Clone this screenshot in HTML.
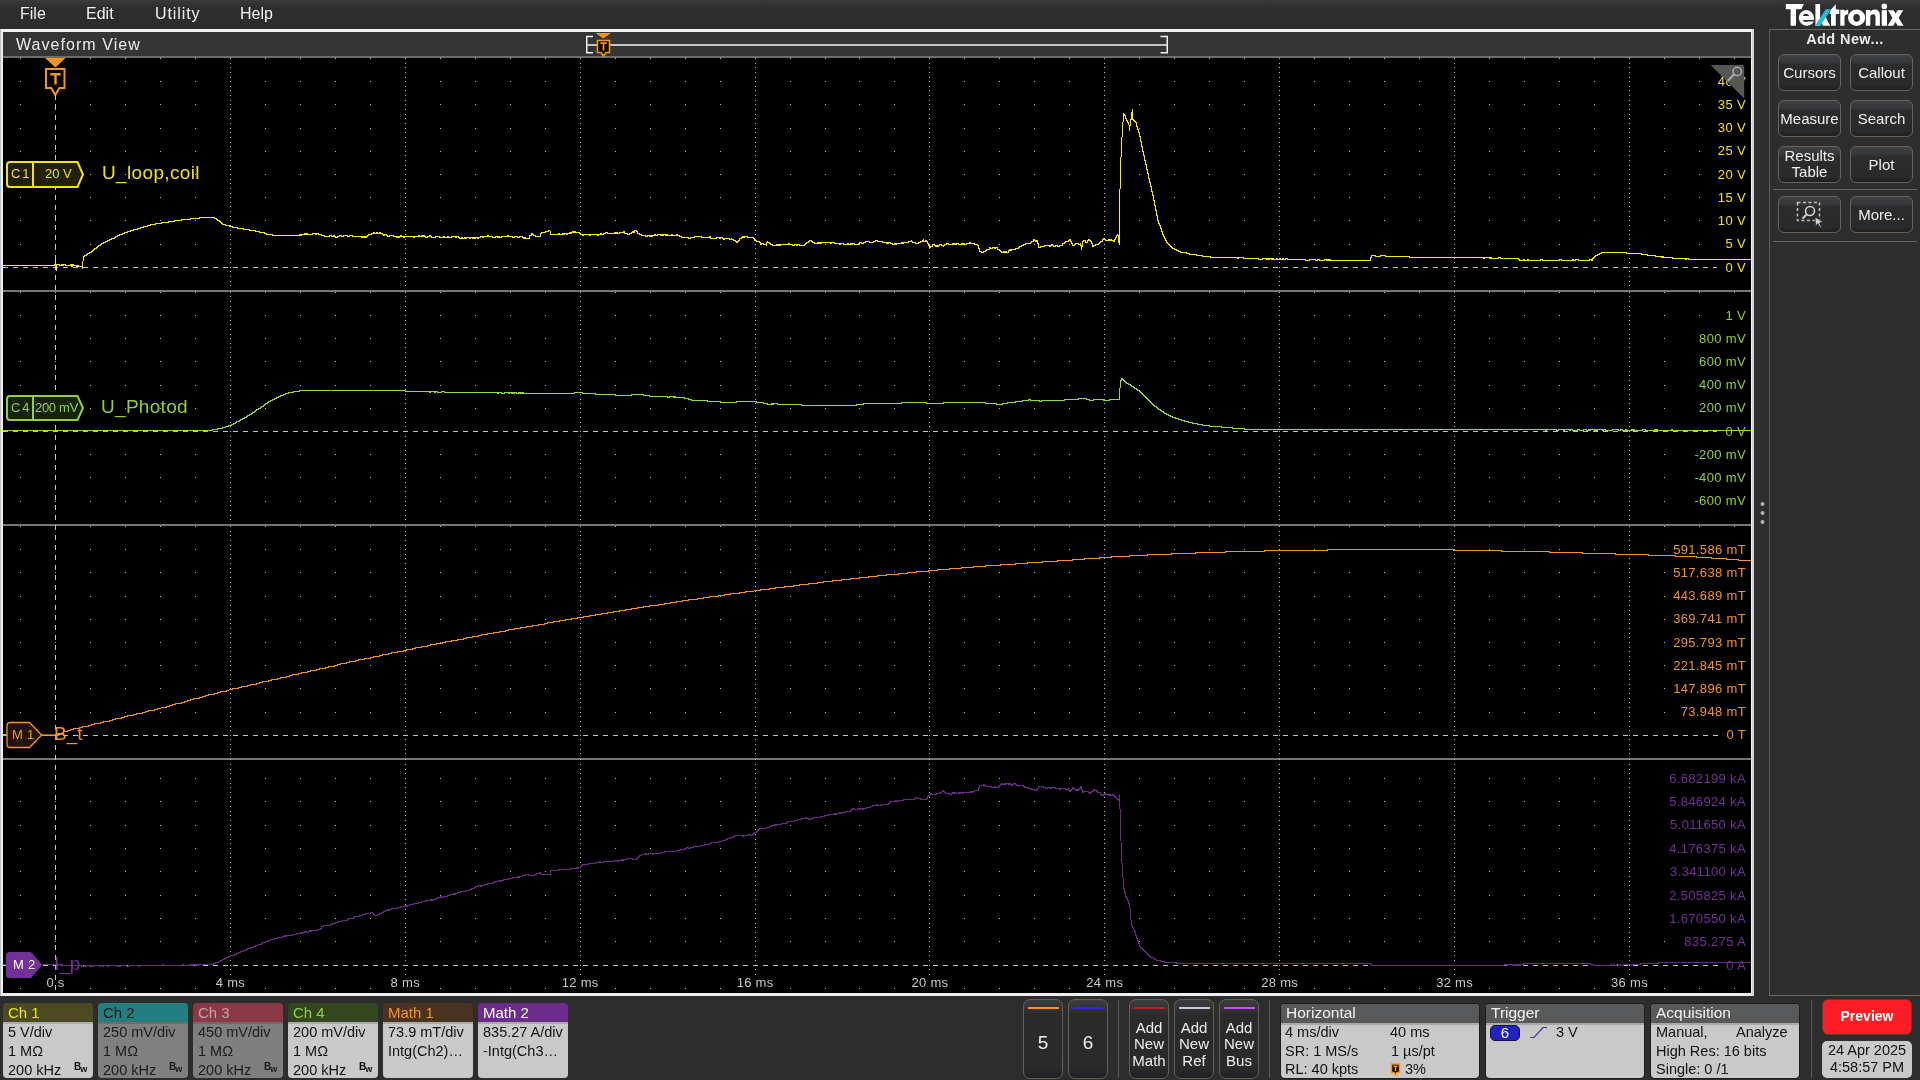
<!DOCTYPE html><html><head><meta charset="utf-8"><title>Tektronix</title><style>
*{margin:0;padding:0;box-sizing:border-box}
html,body{width:1920px;height:1080px;overflow:hidden;background:#2d2d2d;font-family:"Liberation Sans",sans-serif}body{will-change:transform}
.a{position:absolute}
#menu{position:absolute;left:0;top:0;width:1920px;height:29px;background:linear-gradient(#3b3b3b,#2d2d2d 8px,#2d2d2d)}
#menu span{position:absolute;top:5px;font-size:16px;color:#f2f2f2}
#frame{position:absolute;left:0;top:29px;width:1754px;height:967px;background:linear-gradient(90deg,#bdbec3 1px,#eeeff1 1px,#eeeff1 1752px,#d4d4d8 1752px)}
#hdr{position:absolute;left:3px;top:32px;width:1748px;height:24px;background:#353535}
#hdrl{position:absolute;left:3px;top:56px;width:1748px;height:2px;background:#6c6c6c}
#plot{position:absolute;left:3px;top:58px;width:1748px;height:935px;background:#000}
.rl{position:absolute;right:173px;font-size:13px;line-height:16px;white-space:nowrap;background:#000;padding-left:8px;padding-right:1px;letter-spacing:0.35px}
.tl{position:absolute;top:975px;width:80px;text-align:center;font-size:13px;line-height:16px;color:#c8c8c8}.tl span{background:#000;padding:0 1px;letter-spacing:0.3px}
.bdg{position:absolute;top:1003px;width:90px;height:75px;border-radius:4px;overflow:hidden}
.bh{position:absolute;left:0;top:0;width:90px;height:19px;font-size:15px;line-height:19px;padding-left:5px}
.bs{position:absolute;left:0;top:19px;width:90px;height:2px}
.bb{position:absolute;left:0;top:21px;width:90px;height:54px}
.bl{position:absolute;left:5px;font-size:14.5px;line-height:17px;white-space:nowrap}
.bw{position:absolute;left:71px;top:37px;font-size:10px;line-height:12px;font-weight:bold}
.bw sub{font-size:9px;vertical-align:-2px;font-weight:bold;margin-left:-1px}
.rbtn{position:absolute;width:63px;height:37px;border-radius:6px;border:1px solid #6a6058;background:linear-gradient(#404143,#36373a 7px,#2c2c2c 10px,#2a2a2a 85%,#202020);color:#f0f0f0;font-size:15px;text-align:center}
.vbtn{position:absolute;top:999px;width:40px;height:80px;border-radius:7px;border:1px solid #685e54;background:linear-gradient(#3c3d3f,#333436 8px,#2b2b2b 14px,#2a2a2a 88%,#202020);color:#eee;text-align:center}
.vbar{position:absolute;left:4px;top:7px;width:31px;height:2px}
.ibox{position:absolute;top:1004px;height:74px;border-radius:4px;overflow:hidden;background:#c9c9c9;box-shadow:0 0 0 1px #1c1c1c}
.ih{position:absolute;left:0;top:0;width:100%;height:19px;background:#58595b;color:#f4f4f4;font-size:15.5px;line-height:17px;padding-left:5px}
.is{position:absolute;left:0;top:19px;width:100%;height:2px;background:#a8a8a8}
.it{position:absolute;font-size:14.5px;line-height:17px;color:#111;white-space:nowrap}
</style></head><body><div id="menu"><span style="left:20px">File</span><span style="left:86px">Edit</span><span style="left:155px;letter-spacing:0.9px">Utility</span><span style="left:240px">Help</span></div><svg class="a" style="left:1780px;top:0" width="130" height="30" viewBox="1780 0 130 30"><g fill="#fff"><path d="M1785.8 4H1803.9L1801.4 9.3H1796V25.8H1790.6V9.3H1785.8Z"/><path fill-rule="evenodd" d="M1805.9 10A8 7.9 0 1 0 1813.9 21.6H1808Q1807 22 1805.9 22A3.3 3.3 0 0 1 1802.7 20.1H1813.9Q1814 19 1813.9 17.9A8 7.9 0 0 0 1805.9 10ZM1802.9 15.9A3.1 2.5 0 0 1 1809 15.9Z"/><path d="M1815.4 4H1820.1V25.8H1815.4Z"/><path d="M1822.7 25.8H1830.2L1824.8 15.5L1821 20.5Z"/><path d="M1835.8 4.3V9.4H1839.3V14.1H1835.8V25.8H1831V14.1H1829.3L1831 9.4Z"/><path d="M1840.3 25.8V9.7H1844.5V11.6Q1846 9.6 1848.2 9.5V14.3Q1844.5 14.3 1844.5 17.5V25.8Z"/><path fill-rule="evenodd" d="M1856.6 9.5A8.6 8.25 0 1 0 1856.6 26A8.6 8.25 0 1 0 1856.6 9.5ZM1856.6 13.9A3.3 3.9 0 1 1 1856.6 21.7A3.3 3.9 0 1 1 1856.6 13.9Z"/><path d="M1865.9 25.8V10H1870.3V11.6Q1872 9.6 1874.6 9.6Q1879.9 9.6 1879.9 15.3V25.8H1875.5V16.4Q1875.5 14.2 1873.4 14.2Q1870.3 14.2 1870.3 17V25.8Z"/><path d="M1881.7 10.2H1887V25.8H1881.7Z"/><circle cx="1884.3" cy="6.4" r="2.8"/><path d="M1887.8 10.2H1893.6L1895.5 13.6L1897.5 10.2H1903.3L1898.6 17.8L1903.5 25.8H1897.7L1895.5 22L1893.3 25.8H1887.6L1892.4 17.8Z"/></g><path d="M1815 25.8H1820.4L1831.2 9.3H1825.8Z" fill="#1fbfe0"/></svg><div id="frame"></div><div id="hdr"></div><div id="hdrl"></div><div id="plot"></div><div class="a" style="left:16px;top:35px;font-size:16px;line-height:20px;color:#ececec;letter-spacing:1.05px">Waveform View</div><svg class="a" style="left:580px;top:30px" width="600" height="30" viewBox="580 30 600 30"><path d="M593 36.5H586.75V52.75H593" fill="none" stroke="#f2f2f2" stroke-width="1.5"/><rect x="587" y="44" width="580" height="2" fill="#c4c4c4"/><path d="M1160.5 36.5H1167.25V52.75H1160.5" fill="none" stroke="#f2f2f2" stroke-width="1.5"/><polygon points="595.5,33 611,33 603.3,38.5" fill="#f7941d"/><path d="M597.5 40.5H609.5V52.5H606L603.5 56L601 52.5H597.5Z" fill="#000" stroke="#f7941d" stroke-width="1.6"/><path d="M600.3 43.2H606.7M603.5 43.2V50.5" stroke="#f7941d" stroke-width="1.8"/></svg><svg width="1748" height="935" viewBox="3 58 1748 935" style="position:absolute;left:3px;top:58px" shape-rendering="crispEdges"><rect x="3" y="290" width="1748" height="2" fill="#767676"/><rect x="3" y="524" width="1748" height="2" fill="#767676"/><rect x="3" y="758" width="1748" height="2" fill="#767676"/><path fill="#bdbdbd" d="M20 58h1v1h-1zM55 58h1v1h-1zM90 58h1v1h-1zM125 58h1v1h-1zM160 58h1v1h-1zM195 58h1v1h-1zM230 58h1v1h-1zM265 58h1v1h-1zM300 58h1v1h-1zM335 58h1v1h-1zM370 58h1v1h-1zM405 58h1v1h-1zM440 58h1v1h-1zM475 58h1v1h-1zM510 58h1v1h-1zM545 58h1v1h-1zM580 58h1v1h-1zM615 58h1v1h-1zM650 58h1v1h-1zM685 58h1v1h-1zM720 58h1v1h-1zM755 58h1v1h-1zM790 58h1v1h-1zM825 58h1v1h-1zM859 58h1v1h-1zM894 58h1v1h-1zM929 58h1v1h-1zM964 58h1v1h-1zM999 58h1v1h-1zM1034 58h1v1h-1zM1069 58h1v1h-1zM1104 58h1v1h-1zM1139 58h1v1h-1zM1174 58h1v1h-1zM1209 58h1v1h-1zM1244 58h1v1h-1zM1279 58h1v1h-1zM1314 58h1v1h-1zM1349 58h1v1h-1zM1384 58h1v1h-1zM1419 58h1v1h-1zM1454 58h1v1h-1zM1489 58h1v1h-1zM1524 58h1v1h-1zM1559 58h1v1h-1zM1594 58h1v1h-1zM1629 58h1v1h-1zM1664 58h1v1h-1zM1699 58h1v1h-1zM1734 58h1v1h-1zM20 81h1v1h-1zM55 81h1v1h-1zM90 81h1v1h-1zM125 81h1v1h-1zM160 81h1v1h-1zM195 81h1v1h-1zM230 81h1v1h-1zM265 81h1v1h-1zM300 81h1v1h-1zM335 81h1v1h-1zM370 81h1v1h-1zM405 81h1v1h-1zM440 81h1v1h-1zM475 81h1v1h-1zM510 81h1v1h-1zM545 81h1v1h-1zM580 81h1v1h-1zM615 81h1v1h-1zM650 81h1v1h-1zM685 81h1v1h-1zM720 81h1v1h-1zM755 81h1v1h-1zM790 81h1v1h-1zM825 81h1v1h-1zM859 81h1v1h-1zM894 81h1v1h-1zM929 81h1v1h-1zM964 81h1v1h-1zM999 81h1v1h-1zM1034 81h1v1h-1zM1069 81h1v1h-1zM1104 81h1v1h-1zM1139 81h1v1h-1zM1174 81h1v1h-1zM1209 81h1v1h-1zM1244 81h1v1h-1zM1279 81h1v1h-1zM1314 81h1v1h-1zM1349 81h1v1h-1zM1384 81h1v1h-1zM1419 81h1v1h-1zM1454 81h1v1h-1zM1489 81h1v1h-1zM1524 81h1v1h-1zM1559 81h1v1h-1zM1594 81h1v1h-1zM1629 81h1v1h-1zM1664 81h1v1h-1zM1699 81h1v1h-1zM1734 81h1v1h-1zM20 104h1v1h-1zM55 104h1v1h-1zM90 104h1v1h-1zM125 104h1v1h-1zM160 104h1v1h-1zM195 104h1v1h-1zM230 104h1v1h-1zM265 104h1v1h-1zM300 104h1v1h-1zM335 104h1v1h-1zM370 104h1v1h-1zM405 104h1v1h-1zM440 104h1v1h-1zM475 104h1v1h-1zM510 104h1v1h-1zM545 104h1v1h-1zM580 104h1v1h-1zM615 104h1v1h-1zM650 104h1v1h-1zM685 104h1v1h-1zM720 104h1v1h-1zM755 104h1v1h-1zM790 104h1v1h-1zM825 104h1v1h-1zM859 104h1v1h-1zM894 104h1v1h-1zM929 104h1v1h-1zM964 104h1v1h-1zM999 104h1v1h-1zM1034 104h1v1h-1zM1069 104h1v1h-1zM1104 104h1v1h-1zM1139 104h1v1h-1zM1174 104h1v1h-1zM1209 104h1v1h-1zM1244 104h1v1h-1zM1279 104h1v1h-1zM1314 104h1v1h-1zM1349 104h1v1h-1zM1384 104h1v1h-1zM1419 104h1v1h-1zM1454 104h1v1h-1zM1489 104h1v1h-1zM1524 104h1v1h-1zM1559 104h1v1h-1zM1594 104h1v1h-1zM1629 104h1v1h-1zM1664 104h1v1h-1zM1699 104h1v1h-1zM1734 104h1v1h-1zM20 128h1v1h-1zM55 128h1v1h-1zM90 128h1v1h-1zM125 128h1v1h-1zM160 128h1v1h-1zM195 128h1v1h-1zM230 128h1v1h-1zM265 128h1v1h-1zM300 128h1v1h-1zM335 128h1v1h-1zM370 128h1v1h-1zM405 128h1v1h-1zM440 128h1v1h-1zM475 128h1v1h-1zM510 128h1v1h-1zM545 128h1v1h-1zM580 128h1v1h-1zM615 128h1v1h-1zM650 128h1v1h-1zM685 128h1v1h-1zM720 128h1v1h-1zM755 128h1v1h-1zM790 128h1v1h-1zM825 128h1v1h-1zM859 128h1v1h-1zM894 128h1v1h-1zM929 128h1v1h-1zM964 128h1v1h-1zM999 128h1v1h-1zM1034 128h1v1h-1zM1069 128h1v1h-1zM1104 128h1v1h-1zM1139 128h1v1h-1zM1174 128h1v1h-1zM1209 128h1v1h-1zM1244 128h1v1h-1zM1279 128h1v1h-1zM1314 128h1v1h-1zM1349 128h1v1h-1zM1384 128h1v1h-1zM1419 128h1v1h-1zM1454 128h1v1h-1zM1489 128h1v1h-1zM1524 128h1v1h-1zM1559 128h1v1h-1zM1594 128h1v1h-1zM1629 128h1v1h-1zM1664 128h1v1h-1zM1699 128h1v1h-1zM1734 128h1v1h-1zM20 151h1v1h-1zM55 151h1v1h-1zM90 151h1v1h-1zM125 151h1v1h-1zM160 151h1v1h-1zM195 151h1v1h-1zM230 151h1v1h-1zM265 151h1v1h-1zM300 151h1v1h-1zM335 151h1v1h-1zM370 151h1v1h-1zM405 151h1v1h-1zM440 151h1v1h-1zM475 151h1v1h-1zM510 151h1v1h-1zM545 151h1v1h-1zM580 151h1v1h-1zM615 151h1v1h-1zM650 151h1v1h-1zM685 151h1v1h-1zM720 151h1v1h-1zM755 151h1v1h-1zM790 151h1v1h-1zM825 151h1v1h-1zM859 151h1v1h-1zM894 151h1v1h-1zM929 151h1v1h-1zM964 151h1v1h-1zM999 151h1v1h-1zM1034 151h1v1h-1zM1069 151h1v1h-1zM1104 151h1v1h-1zM1139 151h1v1h-1zM1174 151h1v1h-1zM1209 151h1v1h-1zM1244 151h1v1h-1zM1279 151h1v1h-1zM1314 151h1v1h-1zM1349 151h1v1h-1zM1384 151h1v1h-1zM1419 151h1v1h-1zM1454 151h1v1h-1zM1489 151h1v1h-1zM1524 151h1v1h-1zM1559 151h1v1h-1zM1594 151h1v1h-1zM1629 151h1v1h-1zM1664 151h1v1h-1zM1699 151h1v1h-1zM1734 151h1v1h-1zM20 174h1v1h-1zM55 174h1v1h-1zM90 174h1v1h-1zM125 174h1v1h-1zM160 174h1v1h-1zM195 174h1v1h-1zM230 174h1v1h-1zM265 174h1v1h-1zM300 174h1v1h-1zM335 174h1v1h-1zM370 174h1v1h-1zM405 174h1v1h-1zM440 174h1v1h-1zM475 174h1v1h-1zM510 174h1v1h-1zM545 174h1v1h-1zM580 174h1v1h-1zM615 174h1v1h-1zM650 174h1v1h-1zM685 174h1v1h-1zM720 174h1v1h-1zM755 174h1v1h-1zM790 174h1v1h-1zM825 174h1v1h-1zM859 174h1v1h-1zM894 174h1v1h-1zM929 174h1v1h-1zM964 174h1v1h-1zM999 174h1v1h-1zM1034 174h1v1h-1zM1069 174h1v1h-1zM1104 174h1v1h-1zM1139 174h1v1h-1zM1174 174h1v1h-1zM1209 174h1v1h-1zM1244 174h1v1h-1zM1279 174h1v1h-1zM1314 174h1v1h-1zM1349 174h1v1h-1zM1384 174h1v1h-1zM1419 174h1v1h-1zM1454 174h1v1h-1zM1489 174h1v1h-1zM1524 174h1v1h-1zM1559 174h1v1h-1zM1594 174h1v1h-1zM1629 174h1v1h-1zM1664 174h1v1h-1zM1699 174h1v1h-1zM1734 174h1v1h-1zM20 197h1v1h-1zM55 197h1v1h-1zM90 197h1v1h-1zM125 197h1v1h-1zM160 197h1v1h-1zM195 197h1v1h-1zM230 197h1v1h-1zM265 197h1v1h-1zM300 197h1v1h-1zM335 197h1v1h-1zM370 197h1v1h-1zM405 197h1v1h-1zM440 197h1v1h-1zM475 197h1v1h-1zM510 197h1v1h-1zM545 197h1v1h-1zM580 197h1v1h-1zM615 197h1v1h-1zM650 197h1v1h-1zM685 197h1v1h-1zM720 197h1v1h-1zM755 197h1v1h-1zM790 197h1v1h-1zM825 197h1v1h-1zM859 197h1v1h-1zM894 197h1v1h-1zM929 197h1v1h-1zM964 197h1v1h-1zM999 197h1v1h-1zM1034 197h1v1h-1zM1069 197h1v1h-1zM1104 197h1v1h-1zM1139 197h1v1h-1zM1174 197h1v1h-1zM1209 197h1v1h-1zM1244 197h1v1h-1zM1279 197h1v1h-1zM1314 197h1v1h-1zM1349 197h1v1h-1zM1384 197h1v1h-1zM1419 197h1v1h-1zM1454 197h1v1h-1zM1489 197h1v1h-1zM1524 197h1v1h-1zM1559 197h1v1h-1zM1594 197h1v1h-1zM1629 197h1v1h-1zM1664 197h1v1h-1zM1699 197h1v1h-1zM1734 197h1v1h-1zM20 220h1v1h-1zM55 220h1v1h-1zM90 220h1v1h-1zM125 220h1v1h-1zM160 220h1v1h-1zM195 220h1v1h-1zM230 220h1v1h-1zM265 220h1v1h-1zM300 220h1v1h-1zM335 220h1v1h-1zM370 220h1v1h-1zM405 220h1v1h-1zM440 220h1v1h-1zM475 220h1v1h-1zM510 220h1v1h-1zM545 220h1v1h-1zM580 220h1v1h-1zM615 220h1v1h-1zM650 220h1v1h-1zM685 220h1v1h-1zM720 220h1v1h-1zM755 220h1v1h-1zM790 220h1v1h-1zM825 220h1v1h-1zM859 220h1v1h-1zM894 220h1v1h-1zM929 220h1v1h-1zM964 220h1v1h-1zM999 220h1v1h-1zM1034 220h1v1h-1zM1069 220h1v1h-1zM1104 220h1v1h-1zM1139 220h1v1h-1zM1174 220h1v1h-1zM1209 220h1v1h-1zM1244 220h1v1h-1zM1279 220h1v1h-1zM1314 220h1v1h-1zM1349 220h1v1h-1zM1384 220h1v1h-1zM1419 220h1v1h-1zM1454 220h1v1h-1zM1489 220h1v1h-1zM1524 220h1v1h-1zM1559 220h1v1h-1zM1594 220h1v1h-1zM1629 220h1v1h-1zM1664 220h1v1h-1zM1699 220h1v1h-1zM1734 220h1v1h-1zM20 244h1v1h-1zM55 244h1v1h-1zM90 244h1v1h-1zM125 244h1v1h-1zM160 244h1v1h-1zM195 244h1v1h-1zM230 244h1v1h-1zM265 244h1v1h-1zM300 244h1v1h-1zM335 244h1v1h-1zM370 244h1v1h-1zM405 244h1v1h-1zM440 244h1v1h-1zM475 244h1v1h-1zM510 244h1v1h-1zM545 244h1v1h-1zM580 244h1v1h-1zM615 244h1v1h-1zM650 244h1v1h-1zM685 244h1v1h-1zM720 244h1v1h-1zM755 244h1v1h-1zM790 244h1v1h-1zM825 244h1v1h-1zM859 244h1v1h-1zM894 244h1v1h-1zM929 244h1v1h-1zM964 244h1v1h-1zM999 244h1v1h-1zM1034 244h1v1h-1zM1069 244h1v1h-1zM1104 244h1v1h-1zM1139 244h1v1h-1zM1174 244h1v1h-1zM1209 244h1v1h-1zM1244 244h1v1h-1zM1279 244h1v1h-1zM1314 244h1v1h-1zM1349 244h1v1h-1zM1384 244h1v1h-1zM1419 244h1v1h-1zM1454 244h1v1h-1zM1489 244h1v1h-1zM1524 244h1v1h-1zM1559 244h1v1h-1zM1594 244h1v1h-1zM1629 244h1v1h-1zM1664 244h1v1h-1zM1699 244h1v1h-1zM1734 244h1v1h-1zM20 292h1v1h-1zM55 292h1v1h-1zM90 292h1v1h-1zM125 292h1v1h-1zM160 292h1v1h-1zM195 292h1v1h-1zM230 292h1v1h-1zM265 292h1v1h-1zM300 292h1v1h-1zM335 292h1v1h-1zM370 292h1v1h-1zM405 292h1v1h-1zM440 292h1v1h-1zM475 292h1v1h-1zM510 292h1v1h-1zM545 292h1v1h-1zM580 292h1v1h-1zM615 292h1v1h-1zM650 292h1v1h-1zM685 292h1v1h-1zM720 292h1v1h-1zM755 292h1v1h-1zM790 292h1v1h-1zM825 292h1v1h-1zM859 292h1v1h-1zM894 292h1v1h-1zM929 292h1v1h-1zM964 292h1v1h-1zM999 292h1v1h-1zM1034 292h1v1h-1zM1069 292h1v1h-1zM1104 292h1v1h-1zM1139 292h1v1h-1zM1174 292h1v1h-1zM1209 292h1v1h-1zM1244 292h1v1h-1zM1279 292h1v1h-1zM1314 292h1v1h-1zM1349 292h1v1h-1zM1384 292h1v1h-1zM1419 292h1v1h-1zM1454 292h1v1h-1zM1489 292h1v1h-1zM1524 292h1v1h-1zM1559 292h1v1h-1zM1594 292h1v1h-1zM1629 292h1v1h-1zM1664 292h1v1h-1zM1699 292h1v1h-1zM1734 292h1v1h-1zM20 315h1v1h-1zM55 315h1v1h-1zM90 315h1v1h-1zM125 315h1v1h-1zM160 315h1v1h-1zM195 315h1v1h-1zM230 315h1v1h-1zM265 315h1v1h-1zM300 315h1v1h-1zM335 315h1v1h-1zM370 315h1v1h-1zM405 315h1v1h-1zM440 315h1v1h-1zM475 315h1v1h-1zM510 315h1v1h-1zM545 315h1v1h-1zM580 315h1v1h-1zM615 315h1v1h-1zM650 315h1v1h-1zM685 315h1v1h-1zM720 315h1v1h-1zM755 315h1v1h-1zM790 315h1v1h-1zM825 315h1v1h-1zM859 315h1v1h-1zM894 315h1v1h-1zM929 315h1v1h-1zM964 315h1v1h-1zM999 315h1v1h-1zM1034 315h1v1h-1zM1069 315h1v1h-1zM1104 315h1v1h-1zM1139 315h1v1h-1zM1174 315h1v1h-1zM1209 315h1v1h-1zM1244 315h1v1h-1zM1279 315h1v1h-1zM1314 315h1v1h-1zM1349 315h1v1h-1zM1384 315h1v1h-1zM1419 315h1v1h-1zM1454 315h1v1h-1zM1489 315h1v1h-1zM1524 315h1v1h-1zM1559 315h1v1h-1zM1594 315h1v1h-1zM1629 315h1v1h-1zM1664 315h1v1h-1zM1699 315h1v1h-1zM1734 315h1v1h-1zM20 338h1v1h-1zM55 338h1v1h-1zM90 338h1v1h-1zM125 338h1v1h-1zM160 338h1v1h-1zM195 338h1v1h-1zM230 338h1v1h-1zM265 338h1v1h-1zM300 338h1v1h-1zM335 338h1v1h-1zM370 338h1v1h-1zM405 338h1v1h-1zM440 338h1v1h-1zM475 338h1v1h-1zM510 338h1v1h-1zM545 338h1v1h-1zM580 338h1v1h-1zM615 338h1v1h-1zM650 338h1v1h-1zM685 338h1v1h-1zM720 338h1v1h-1zM755 338h1v1h-1zM790 338h1v1h-1zM825 338h1v1h-1zM859 338h1v1h-1zM894 338h1v1h-1zM929 338h1v1h-1zM964 338h1v1h-1zM999 338h1v1h-1zM1034 338h1v1h-1zM1069 338h1v1h-1zM1104 338h1v1h-1zM1139 338h1v1h-1zM1174 338h1v1h-1zM1209 338h1v1h-1zM1244 338h1v1h-1zM1279 338h1v1h-1zM1314 338h1v1h-1zM1349 338h1v1h-1zM1384 338h1v1h-1zM1419 338h1v1h-1zM1454 338h1v1h-1zM1489 338h1v1h-1zM1524 338h1v1h-1zM1559 338h1v1h-1zM1594 338h1v1h-1zM1629 338h1v1h-1zM1664 338h1v1h-1zM1699 338h1v1h-1zM1734 338h1v1h-1zM20 361h1v1h-1zM55 361h1v1h-1zM90 361h1v1h-1zM125 361h1v1h-1zM160 361h1v1h-1zM195 361h1v1h-1zM230 361h1v1h-1zM265 361h1v1h-1zM300 361h1v1h-1zM335 361h1v1h-1zM370 361h1v1h-1zM405 361h1v1h-1zM440 361h1v1h-1zM475 361h1v1h-1zM510 361h1v1h-1zM545 361h1v1h-1zM580 361h1v1h-1zM615 361h1v1h-1zM650 361h1v1h-1zM685 361h1v1h-1zM720 361h1v1h-1zM755 361h1v1h-1zM790 361h1v1h-1zM825 361h1v1h-1zM859 361h1v1h-1zM894 361h1v1h-1zM929 361h1v1h-1zM964 361h1v1h-1zM999 361h1v1h-1zM1034 361h1v1h-1zM1069 361h1v1h-1zM1104 361h1v1h-1zM1139 361h1v1h-1zM1174 361h1v1h-1zM1209 361h1v1h-1zM1244 361h1v1h-1zM1279 361h1v1h-1zM1314 361h1v1h-1zM1349 361h1v1h-1zM1384 361h1v1h-1zM1419 361h1v1h-1zM1454 361h1v1h-1zM1489 361h1v1h-1zM1524 361h1v1h-1zM1559 361h1v1h-1zM1594 361h1v1h-1zM1629 361h1v1h-1zM1664 361h1v1h-1zM1699 361h1v1h-1zM1734 361h1v1h-1zM20 385h1v1h-1zM55 385h1v1h-1zM90 385h1v1h-1zM125 385h1v1h-1zM160 385h1v1h-1zM195 385h1v1h-1zM230 385h1v1h-1zM265 385h1v1h-1zM300 385h1v1h-1zM335 385h1v1h-1zM370 385h1v1h-1zM405 385h1v1h-1zM440 385h1v1h-1zM475 385h1v1h-1zM510 385h1v1h-1zM545 385h1v1h-1zM580 385h1v1h-1zM615 385h1v1h-1zM650 385h1v1h-1zM685 385h1v1h-1zM720 385h1v1h-1zM755 385h1v1h-1zM790 385h1v1h-1zM825 385h1v1h-1zM859 385h1v1h-1zM894 385h1v1h-1zM929 385h1v1h-1zM964 385h1v1h-1zM999 385h1v1h-1zM1034 385h1v1h-1zM1069 385h1v1h-1zM1104 385h1v1h-1zM1139 385h1v1h-1zM1174 385h1v1h-1zM1209 385h1v1h-1zM1244 385h1v1h-1zM1279 385h1v1h-1zM1314 385h1v1h-1zM1349 385h1v1h-1zM1384 385h1v1h-1zM1419 385h1v1h-1zM1454 385h1v1h-1zM1489 385h1v1h-1zM1524 385h1v1h-1zM1559 385h1v1h-1zM1594 385h1v1h-1zM1629 385h1v1h-1zM1664 385h1v1h-1zM1699 385h1v1h-1zM1734 385h1v1h-1zM20 408h1v1h-1zM55 408h1v1h-1zM90 408h1v1h-1zM125 408h1v1h-1zM160 408h1v1h-1zM195 408h1v1h-1zM230 408h1v1h-1zM265 408h1v1h-1zM300 408h1v1h-1zM335 408h1v1h-1zM370 408h1v1h-1zM405 408h1v1h-1zM440 408h1v1h-1zM475 408h1v1h-1zM510 408h1v1h-1zM545 408h1v1h-1zM580 408h1v1h-1zM615 408h1v1h-1zM650 408h1v1h-1zM685 408h1v1h-1zM720 408h1v1h-1zM755 408h1v1h-1zM790 408h1v1h-1zM825 408h1v1h-1zM859 408h1v1h-1zM894 408h1v1h-1zM929 408h1v1h-1zM964 408h1v1h-1zM999 408h1v1h-1zM1034 408h1v1h-1zM1069 408h1v1h-1zM1104 408h1v1h-1zM1139 408h1v1h-1zM1174 408h1v1h-1zM1209 408h1v1h-1zM1244 408h1v1h-1zM1279 408h1v1h-1zM1314 408h1v1h-1zM1349 408h1v1h-1zM1384 408h1v1h-1zM1419 408h1v1h-1zM1454 408h1v1h-1zM1489 408h1v1h-1zM1524 408h1v1h-1zM1559 408h1v1h-1zM1594 408h1v1h-1zM1629 408h1v1h-1zM1664 408h1v1h-1zM1699 408h1v1h-1zM1734 408h1v1h-1zM20 454h1v1h-1zM55 454h1v1h-1zM90 454h1v1h-1zM125 454h1v1h-1zM160 454h1v1h-1zM195 454h1v1h-1zM230 454h1v1h-1zM265 454h1v1h-1zM300 454h1v1h-1zM335 454h1v1h-1zM370 454h1v1h-1zM405 454h1v1h-1zM440 454h1v1h-1zM475 454h1v1h-1zM510 454h1v1h-1zM545 454h1v1h-1zM580 454h1v1h-1zM615 454h1v1h-1zM650 454h1v1h-1zM685 454h1v1h-1zM720 454h1v1h-1zM755 454h1v1h-1zM790 454h1v1h-1zM825 454h1v1h-1zM859 454h1v1h-1zM894 454h1v1h-1zM929 454h1v1h-1zM964 454h1v1h-1zM999 454h1v1h-1zM1034 454h1v1h-1zM1069 454h1v1h-1zM1104 454h1v1h-1zM1139 454h1v1h-1zM1174 454h1v1h-1zM1209 454h1v1h-1zM1244 454h1v1h-1zM1279 454h1v1h-1zM1314 454h1v1h-1zM1349 454h1v1h-1zM1384 454h1v1h-1zM1419 454h1v1h-1zM1454 454h1v1h-1zM1489 454h1v1h-1zM1524 454h1v1h-1zM1559 454h1v1h-1zM1594 454h1v1h-1zM1629 454h1v1h-1zM1664 454h1v1h-1zM1699 454h1v1h-1zM1734 454h1v1h-1zM20 477h1v1h-1zM55 477h1v1h-1zM90 477h1v1h-1zM125 477h1v1h-1zM160 477h1v1h-1zM195 477h1v1h-1zM230 477h1v1h-1zM265 477h1v1h-1zM300 477h1v1h-1zM335 477h1v1h-1zM370 477h1v1h-1zM405 477h1v1h-1zM440 477h1v1h-1zM475 477h1v1h-1zM510 477h1v1h-1zM545 477h1v1h-1zM580 477h1v1h-1zM615 477h1v1h-1zM650 477h1v1h-1zM685 477h1v1h-1zM720 477h1v1h-1zM755 477h1v1h-1zM790 477h1v1h-1zM825 477h1v1h-1zM859 477h1v1h-1zM894 477h1v1h-1zM929 477h1v1h-1zM964 477h1v1h-1zM999 477h1v1h-1zM1034 477h1v1h-1zM1069 477h1v1h-1zM1104 477h1v1h-1zM1139 477h1v1h-1zM1174 477h1v1h-1zM1209 477h1v1h-1zM1244 477h1v1h-1zM1279 477h1v1h-1zM1314 477h1v1h-1zM1349 477h1v1h-1zM1384 477h1v1h-1zM1419 477h1v1h-1zM1454 477h1v1h-1zM1489 477h1v1h-1zM1524 477h1v1h-1zM1559 477h1v1h-1zM1594 477h1v1h-1zM1629 477h1v1h-1zM1664 477h1v1h-1zM1699 477h1v1h-1zM1734 477h1v1h-1zM20 501h1v1h-1zM55 501h1v1h-1zM90 501h1v1h-1zM125 501h1v1h-1zM160 501h1v1h-1zM195 501h1v1h-1zM230 501h1v1h-1zM265 501h1v1h-1zM300 501h1v1h-1zM335 501h1v1h-1zM370 501h1v1h-1zM405 501h1v1h-1zM440 501h1v1h-1zM475 501h1v1h-1zM510 501h1v1h-1zM545 501h1v1h-1zM580 501h1v1h-1zM615 501h1v1h-1zM650 501h1v1h-1zM685 501h1v1h-1zM720 501h1v1h-1zM755 501h1v1h-1zM790 501h1v1h-1zM825 501h1v1h-1zM859 501h1v1h-1zM894 501h1v1h-1zM929 501h1v1h-1zM964 501h1v1h-1zM999 501h1v1h-1zM1034 501h1v1h-1zM1069 501h1v1h-1zM1104 501h1v1h-1zM1139 501h1v1h-1zM1174 501h1v1h-1zM1209 501h1v1h-1zM1244 501h1v1h-1zM1279 501h1v1h-1zM1314 501h1v1h-1zM1349 501h1v1h-1zM1384 501h1v1h-1zM1419 501h1v1h-1zM1454 501h1v1h-1zM1489 501h1v1h-1zM1524 501h1v1h-1zM1559 501h1v1h-1zM1594 501h1v1h-1zM1629 501h1v1h-1zM1664 501h1v1h-1zM1699 501h1v1h-1zM1734 501h1v1h-1zM20 526h1v1h-1zM55 526h1v1h-1zM90 526h1v1h-1zM125 526h1v1h-1zM160 526h1v1h-1zM195 526h1v1h-1zM230 526h1v1h-1zM265 526h1v1h-1zM300 526h1v1h-1zM335 526h1v1h-1zM370 526h1v1h-1zM405 526h1v1h-1zM440 526h1v1h-1zM475 526h1v1h-1zM510 526h1v1h-1zM545 526h1v1h-1zM580 526h1v1h-1zM615 526h1v1h-1zM650 526h1v1h-1zM685 526h1v1h-1zM720 526h1v1h-1zM755 526h1v1h-1zM790 526h1v1h-1zM825 526h1v1h-1zM859 526h1v1h-1zM894 526h1v1h-1zM929 526h1v1h-1zM964 526h1v1h-1zM999 526h1v1h-1zM1034 526h1v1h-1zM1069 526h1v1h-1zM1104 526h1v1h-1zM1139 526h1v1h-1zM1174 526h1v1h-1zM1209 526h1v1h-1zM1244 526h1v1h-1zM1279 526h1v1h-1zM1314 526h1v1h-1zM1349 526h1v1h-1zM1384 526h1v1h-1zM1419 526h1v1h-1zM1454 526h1v1h-1zM1489 526h1v1h-1zM1524 526h1v1h-1zM1559 526h1v1h-1zM1594 526h1v1h-1zM1629 526h1v1h-1zM1664 526h1v1h-1zM1699 526h1v1h-1zM1734 526h1v1h-1zM20 549h1v1h-1zM55 549h1v1h-1zM90 549h1v1h-1zM125 549h1v1h-1zM160 549h1v1h-1zM195 549h1v1h-1zM230 549h1v1h-1zM265 549h1v1h-1zM300 549h1v1h-1zM335 549h1v1h-1zM370 549h1v1h-1zM405 549h1v1h-1zM440 549h1v1h-1zM475 549h1v1h-1zM510 549h1v1h-1zM545 549h1v1h-1zM580 549h1v1h-1zM615 549h1v1h-1zM650 549h1v1h-1zM685 549h1v1h-1zM720 549h1v1h-1zM755 549h1v1h-1zM790 549h1v1h-1zM825 549h1v1h-1zM859 549h1v1h-1zM894 549h1v1h-1zM929 549h1v1h-1zM964 549h1v1h-1zM999 549h1v1h-1zM1034 549h1v1h-1zM1069 549h1v1h-1zM1104 549h1v1h-1zM1139 549h1v1h-1zM1174 549h1v1h-1zM1209 549h1v1h-1zM1244 549h1v1h-1zM1279 549h1v1h-1zM1314 549h1v1h-1zM1349 549h1v1h-1zM1384 549h1v1h-1zM1419 549h1v1h-1zM1454 549h1v1h-1zM1489 549h1v1h-1zM1524 549h1v1h-1zM1559 549h1v1h-1zM1594 549h1v1h-1zM1629 549h1v1h-1zM1664 549h1v1h-1zM1699 549h1v1h-1zM1734 549h1v1h-1zM20 572h1v1h-1zM55 572h1v1h-1zM90 572h1v1h-1zM125 572h1v1h-1zM160 572h1v1h-1zM195 572h1v1h-1zM230 572h1v1h-1zM265 572h1v1h-1zM300 572h1v1h-1zM335 572h1v1h-1zM370 572h1v1h-1zM405 572h1v1h-1zM440 572h1v1h-1zM475 572h1v1h-1zM510 572h1v1h-1zM545 572h1v1h-1zM580 572h1v1h-1zM615 572h1v1h-1zM650 572h1v1h-1zM685 572h1v1h-1zM720 572h1v1h-1zM755 572h1v1h-1zM790 572h1v1h-1zM825 572h1v1h-1zM859 572h1v1h-1zM894 572h1v1h-1zM929 572h1v1h-1zM964 572h1v1h-1zM999 572h1v1h-1zM1034 572h1v1h-1zM1069 572h1v1h-1zM1104 572h1v1h-1zM1139 572h1v1h-1zM1174 572h1v1h-1zM1209 572h1v1h-1zM1244 572h1v1h-1zM1279 572h1v1h-1zM1314 572h1v1h-1zM1349 572h1v1h-1zM1384 572h1v1h-1zM1419 572h1v1h-1zM1454 572h1v1h-1zM1489 572h1v1h-1zM1524 572h1v1h-1zM1559 572h1v1h-1zM1594 572h1v1h-1zM1629 572h1v1h-1zM1664 572h1v1h-1zM1699 572h1v1h-1zM1734 572h1v1h-1zM20 596h1v1h-1zM55 596h1v1h-1zM90 596h1v1h-1zM125 596h1v1h-1zM160 596h1v1h-1zM195 596h1v1h-1zM230 596h1v1h-1zM265 596h1v1h-1zM300 596h1v1h-1zM335 596h1v1h-1zM370 596h1v1h-1zM405 596h1v1h-1zM440 596h1v1h-1zM475 596h1v1h-1zM510 596h1v1h-1zM545 596h1v1h-1zM580 596h1v1h-1zM615 596h1v1h-1zM650 596h1v1h-1zM685 596h1v1h-1zM720 596h1v1h-1zM755 596h1v1h-1zM790 596h1v1h-1zM825 596h1v1h-1zM859 596h1v1h-1zM894 596h1v1h-1zM929 596h1v1h-1zM964 596h1v1h-1zM999 596h1v1h-1zM1034 596h1v1h-1zM1069 596h1v1h-1zM1104 596h1v1h-1zM1139 596h1v1h-1zM1174 596h1v1h-1zM1209 596h1v1h-1zM1244 596h1v1h-1zM1279 596h1v1h-1zM1314 596h1v1h-1zM1349 596h1v1h-1zM1384 596h1v1h-1zM1419 596h1v1h-1zM1454 596h1v1h-1zM1489 596h1v1h-1zM1524 596h1v1h-1zM1559 596h1v1h-1zM1594 596h1v1h-1zM1629 596h1v1h-1zM1664 596h1v1h-1zM1699 596h1v1h-1zM1734 596h1v1h-1zM20 619h1v1h-1zM55 619h1v1h-1zM90 619h1v1h-1zM125 619h1v1h-1zM160 619h1v1h-1zM195 619h1v1h-1zM230 619h1v1h-1zM265 619h1v1h-1zM300 619h1v1h-1zM335 619h1v1h-1zM370 619h1v1h-1zM405 619h1v1h-1zM440 619h1v1h-1zM475 619h1v1h-1zM510 619h1v1h-1zM545 619h1v1h-1zM580 619h1v1h-1zM615 619h1v1h-1zM650 619h1v1h-1zM685 619h1v1h-1zM720 619h1v1h-1zM755 619h1v1h-1zM790 619h1v1h-1zM825 619h1v1h-1zM859 619h1v1h-1zM894 619h1v1h-1zM929 619h1v1h-1zM964 619h1v1h-1zM999 619h1v1h-1zM1034 619h1v1h-1zM1069 619h1v1h-1zM1104 619h1v1h-1zM1139 619h1v1h-1zM1174 619h1v1h-1zM1209 619h1v1h-1zM1244 619h1v1h-1zM1279 619h1v1h-1zM1314 619h1v1h-1zM1349 619h1v1h-1zM1384 619h1v1h-1zM1419 619h1v1h-1zM1454 619h1v1h-1zM1489 619h1v1h-1zM1524 619h1v1h-1zM1559 619h1v1h-1zM1594 619h1v1h-1zM1629 619h1v1h-1zM1664 619h1v1h-1zM1699 619h1v1h-1zM1734 619h1v1h-1zM20 642h1v1h-1zM55 642h1v1h-1zM90 642h1v1h-1zM125 642h1v1h-1zM160 642h1v1h-1zM195 642h1v1h-1zM230 642h1v1h-1zM265 642h1v1h-1zM300 642h1v1h-1zM335 642h1v1h-1zM370 642h1v1h-1zM405 642h1v1h-1zM440 642h1v1h-1zM475 642h1v1h-1zM510 642h1v1h-1zM545 642h1v1h-1zM580 642h1v1h-1zM615 642h1v1h-1zM650 642h1v1h-1zM685 642h1v1h-1zM720 642h1v1h-1zM755 642h1v1h-1zM790 642h1v1h-1zM825 642h1v1h-1zM859 642h1v1h-1zM894 642h1v1h-1zM929 642h1v1h-1zM964 642h1v1h-1zM999 642h1v1h-1zM1034 642h1v1h-1zM1069 642h1v1h-1zM1104 642h1v1h-1zM1139 642h1v1h-1zM1174 642h1v1h-1zM1209 642h1v1h-1zM1244 642h1v1h-1zM1279 642h1v1h-1zM1314 642h1v1h-1zM1349 642h1v1h-1zM1384 642h1v1h-1zM1419 642h1v1h-1zM1454 642h1v1h-1zM1489 642h1v1h-1zM1524 642h1v1h-1zM1559 642h1v1h-1zM1594 642h1v1h-1zM1629 642h1v1h-1zM1664 642h1v1h-1zM1699 642h1v1h-1zM1734 642h1v1h-1zM20 665h1v1h-1zM55 665h1v1h-1zM90 665h1v1h-1zM125 665h1v1h-1zM160 665h1v1h-1zM195 665h1v1h-1zM230 665h1v1h-1zM265 665h1v1h-1zM300 665h1v1h-1zM335 665h1v1h-1zM370 665h1v1h-1zM405 665h1v1h-1zM440 665h1v1h-1zM475 665h1v1h-1zM510 665h1v1h-1zM545 665h1v1h-1zM580 665h1v1h-1zM615 665h1v1h-1zM650 665h1v1h-1zM685 665h1v1h-1zM720 665h1v1h-1zM755 665h1v1h-1zM790 665h1v1h-1zM825 665h1v1h-1zM859 665h1v1h-1zM894 665h1v1h-1zM929 665h1v1h-1zM964 665h1v1h-1zM999 665h1v1h-1zM1034 665h1v1h-1zM1069 665h1v1h-1zM1104 665h1v1h-1zM1139 665h1v1h-1zM1174 665h1v1h-1zM1209 665h1v1h-1zM1244 665h1v1h-1zM1279 665h1v1h-1zM1314 665h1v1h-1zM1349 665h1v1h-1zM1384 665h1v1h-1zM1419 665h1v1h-1zM1454 665h1v1h-1zM1489 665h1v1h-1zM1524 665h1v1h-1zM1559 665h1v1h-1zM1594 665h1v1h-1zM1629 665h1v1h-1zM1664 665h1v1h-1zM1699 665h1v1h-1zM1734 665h1v1h-1zM20 688h1v1h-1zM55 688h1v1h-1zM90 688h1v1h-1zM125 688h1v1h-1zM160 688h1v1h-1zM195 688h1v1h-1zM230 688h1v1h-1zM265 688h1v1h-1zM300 688h1v1h-1zM335 688h1v1h-1zM370 688h1v1h-1zM405 688h1v1h-1zM440 688h1v1h-1zM475 688h1v1h-1zM510 688h1v1h-1zM545 688h1v1h-1zM580 688h1v1h-1zM615 688h1v1h-1zM650 688h1v1h-1zM685 688h1v1h-1zM720 688h1v1h-1zM755 688h1v1h-1zM790 688h1v1h-1zM825 688h1v1h-1zM859 688h1v1h-1zM894 688h1v1h-1zM929 688h1v1h-1zM964 688h1v1h-1zM999 688h1v1h-1zM1034 688h1v1h-1zM1069 688h1v1h-1zM1104 688h1v1h-1zM1139 688h1v1h-1zM1174 688h1v1h-1zM1209 688h1v1h-1zM1244 688h1v1h-1zM1279 688h1v1h-1zM1314 688h1v1h-1zM1349 688h1v1h-1zM1384 688h1v1h-1zM1419 688h1v1h-1zM1454 688h1v1h-1zM1489 688h1v1h-1zM1524 688h1v1h-1zM1559 688h1v1h-1zM1594 688h1v1h-1zM1629 688h1v1h-1zM1664 688h1v1h-1zM1699 688h1v1h-1zM1734 688h1v1h-1zM20 712h1v1h-1zM55 712h1v1h-1zM90 712h1v1h-1zM125 712h1v1h-1zM160 712h1v1h-1zM195 712h1v1h-1zM230 712h1v1h-1zM265 712h1v1h-1zM300 712h1v1h-1zM335 712h1v1h-1zM370 712h1v1h-1zM405 712h1v1h-1zM440 712h1v1h-1zM475 712h1v1h-1zM510 712h1v1h-1zM545 712h1v1h-1zM580 712h1v1h-1zM615 712h1v1h-1zM650 712h1v1h-1zM685 712h1v1h-1zM720 712h1v1h-1zM755 712h1v1h-1zM790 712h1v1h-1zM825 712h1v1h-1zM859 712h1v1h-1zM894 712h1v1h-1zM929 712h1v1h-1zM964 712h1v1h-1zM999 712h1v1h-1zM1034 712h1v1h-1zM1069 712h1v1h-1zM1104 712h1v1h-1zM1139 712h1v1h-1zM1174 712h1v1h-1zM1209 712h1v1h-1zM1244 712h1v1h-1zM1279 712h1v1h-1zM1314 712h1v1h-1zM1349 712h1v1h-1zM1384 712h1v1h-1zM1419 712h1v1h-1zM1454 712h1v1h-1zM1489 712h1v1h-1zM1524 712h1v1h-1zM1559 712h1v1h-1zM1594 712h1v1h-1zM1629 712h1v1h-1zM1664 712h1v1h-1zM1699 712h1v1h-1zM1734 712h1v1h-1zM20 778h1v1h-1zM55 778h1v1h-1zM90 778h1v1h-1zM125 778h1v1h-1zM160 778h1v1h-1zM195 778h1v1h-1zM230 778h1v1h-1zM265 778h1v1h-1zM300 778h1v1h-1zM335 778h1v1h-1zM370 778h1v1h-1zM405 778h1v1h-1zM440 778h1v1h-1zM475 778h1v1h-1zM510 778h1v1h-1zM545 778h1v1h-1zM580 778h1v1h-1zM615 778h1v1h-1zM650 778h1v1h-1zM685 778h1v1h-1zM720 778h1v1h-1zM755 778h1v1h-1zM790 778h1v1h-1zM825 778h1v1h-1zM859 778h1v1h-1zM894 778h1v1h-1zM929 778h1v1h-1zM964 778h1v1h-1zM999 778h1v1h-1zM1034 778h1v1h-1zM1069 778h1v1h-1zM1104 778h1v1h-1zM1139 778h1v1h-1zM1174 778h1v1h-1zM1209 778h1v1h-1zM1244 778h1v1h-1zM1279 778h1v1h-1zM1314 778h1v1h-1zM1349 778h1v1h-1zM1384 778h1v1h-1zM1419 778h1v1h-1zM1454 778h1v1h-1zM1489 778h1v1h-1zM1524 778h1v1h-1zM1559 778h1v1h-1zM1594 778h1v1h-1zM1629 778h1v1h-1zM1664 778h1v1h-1zM1699 778h1v1h-1zM1734 778h1v1h-1zM20 801h1v1h-1zM55 801h1v1h-1zM90 801h1v1h-1zM125 801h1v1h-1zM160 801h1v1h-1zM195 801h1v1h-1zM230 801h1v1h-1zM265 801h1v1h-1zM300 801h1v1h-1zM335 801h1v1h-1zM370 801h1v1h-1zM405 801h1v1h-1zM440 801h1v1h-1zM475 801h1v1h-1zM510 801h1v1h-1zM545 801h1v1h-1zM580 801h1v1h-1zM615 801h1v1h-1zM650 801h1v1h-1zM685 801h1v1h-1zM720 801h1v1h-1zM755 801h1v1h-1zM790 801h1v1h-1zM825 801h1v1h-1zM859 801h1v1h-1zM894 801h1v1h-1zM929 801h1v1h-1zM964 801h1v1h-1zM999 801h1v1h-1zM1034 801h1v1h-1zM1069 801h1v1h-1zM1104 801h1v1h-1zM1139 801h1v1h-1zM1174 801h1v1h-1zM1209 801h1v1h-1zM1244 801h1v1h-1zM1279 801h1v1h-1zM1314 801h1v1h-1zM1349 801h1v1h-1zM1384 801h1v1h-1zM1419 801h1v1h-1zM1454 801h1v1h-1zM1489 801h1v1h-1zM1524 801h1v1h-1zM1559 801h1v1h-1zM1594 801h1v1h-1zM1629 801h1v1h-1zM1664 801h1v1h-1zM1699 801h1v1h-1zM1734 801h1v1h-1zM20 825h1v1h-1zM55 825h1v1h-1zM90 825h1v1h-1zM125 825h1v1h-1zM160 825h1v1h-1zM195 825h1v1h-1zM230 825h1v1h-1zM265 825h1v1h-1zM300 825h1v1h-1zM335 825h1v1h-1zM370 825h1v1h-1zM405 825h1v1h-1zM440 825h1v1h-1zM475 825h1v1h-1zM510 825h1v1h-1zM545 825h1v1h-1zM580 825h1v1h-1zM615 825h1v1h-1zM650 825h1v1h-1zM685 825h1v1h-1zM720 825h1v1h-1zM755 825h1v1h-1zM790 825h1v1h-1zM825 825h1v1h-1zM859 825h1v1h-1zM894 825h1v1h-1zM929 825h1v1h-1zM964 825h1v1h-1zM999 825h1v1h-1zM1034 825h1v1h-1zM1069 825h1v1h-1zM1104 825h1v1h-1zM1139 825h1v1h-1zM1174 825h1v1h-1zM1209 825h1v1h-1zM1244 825h1v1h-1zM1279 825h1v1h-1zM1314 825h1v1h-1zM1349 825h1v1h-1zM1384 825h1v1h-1zM1419 825h1v1h-1zM1454 825h1v1h-1zM1489 825h1v1h-1zM1524 825h1v1h-1zM1559 825h1v1h-1zM1594 825h1v1h-1zM1629 825h1v1h-1zM1664 825h1v1h-1zM1699 825h1v1h-1zM1734 825h1v1h-1zM20 848h1v1h-1zM55 848h1v1h-1zM90 848h1v1h-1zM125 848h1v1h-1zM160 848h1v1h-1zM195 848h1v1h-1zM230 848h1v1h-1zM265 848h1v1h-1zM300 848h1v1h-1zM335 848h1v1h-1zM370 848h1v1h-1zM405 848h1v1h-1zM440 848h1v1h-1zM475 848h1v1h-1zM510 848h1v1h-1zM545 848h1v1h-1zM580 848h1v1h-1zM615 848h1v1h-1zM650 848h1v1h-1zM685 848h1v1h-1zM720 848h1v1h-1zM755 848h1v1h-1zM790 848h1v1h-1zM825 848h1v1h-1zM859 848h1v1h-1zM894 848h1v1h-1zM929 848h1v1h-1zM964 848h1v1h-1zM999 848h1v1h-1zM1034 848h1v1h-1zM1069 848h1v1h-1zM1104 848h1v1h-1zM1139 848h1v1h-1zM1174 848h1v1h-1zM1209 848h1v1h-1zM1244 848h1v1h-1zM1279 848h1v1h-1zM1314 848h1v1h-1zM1349 848h1v1h-1zM1384 848h1v1h-1zM1419 848h1v1h-1zM1454 848h1v1h-1zM1489 848h1v1h-1zM1524 848h1v1h-1zM1559 848h1v1h-1zM1594 848h1v1h-1zM1629 848h1v1h-1zM1664 848h1v1h-1zM1699 848h1v1h-1zM1734 848h1v1h-1zM20 871h1v1h-1zM55 871h1v1h-1zM90 871h1v1h-1zM125 871h1v1h-1zM160 871h1v1h-1zM195 871h1v1h-1zM230 871h1v1h-1zM265 871h1v1h-1zM300 871h1v1h-1zM335 871h1v1h-1zM370 871h1v1h-1zM405 871h1v1h-1zM440 871h1v1h-1zM475 871h1v1h-1zM510 871h1v1h-1zM545 871h1v1h-1zM580 871h1v1h-1zM615 871h1v1h-1zM650 871h1v1h-1zM685 871h1v1h-1zM720 871h1v1h-1zM755 871h1v1h-1zM790 871h1v1h-1zM825 871h1v1h-1zM859 871h1v1h-1zM894 871h1v1h-1zM929 871h1v1h-1zM964 871h1v1h-1zM999 871h1v1h-1zM1034 871h1v1h-1zM1069 871h1v1h-1zM1104 871h1v1h-1zM1139 871h1v1h-1zM1174 871h1v1h-1zM1209 871h1v1h-1zM1244 871h1v1h-1zM1279 871h1v1h-1zM1314 871h1v1h-1zM1349 871h1v1h-1zM1384 871h1v1h-1zM1419 871h1v1h-1zM1454 871h1v1h-1zM1489 871h1v1h-1zM1524 871h1v1h-1zM1559 871h1v1h-1zM1594 871h1v1h-1zM1629 871h1v1h-1zM1664 871h1v1h-1zM1699 871h1v1h-1zM1734 871h1v1h-1zM20 895h1v1h-1zM55 895h1v1h-1zM90 895h1v1h-1zM125 895h1v1h-1zM160 895h1v1h-1zM195 895h1v1h-1zM230 895h1v1h-1zM265 895h1v1h-1zM300 895h1v1h-1zM335 895h1v1h-1zM370 895h1v1h-1zM405 895h1v1h-1zM440 895h1v1h-1zM475 895h1v1h-1zM510 895h1v1h-1zM545 895h1v1h-1zM580 895h1v1h-1zM615 895h1v1h-1zM650 895h1v1h-1zM685 895h1v1h-1zM720 895h1v1h-1zM755 895h1v1h-1zM790 895h1v1h-1zM825 895h1v1h-1zM859 895h1v1h-1zM894 895h1v1h-1zM929 895h1v1h-1zM964 895h1v1h-1zM999 895h1v1h-1zM1034 895h1v1h-1zM1069 895h1v1h-1zM1104 895h1v1h-1zM1139 895h1v1h-1zM1174 895h1v1h-1zM1209 895h1v1h-1zM1244 895h1v1h-1zM1279 895h1v1h-1zM1314 895h1v1h-1zM1349 895h1v1h-1zM1384 895h1v1h-1zM1419 895h1v1h-1zM1454 895h1v1h-1zM1489 895h1v1h-1zM1524 895h1v1h-1zM1559 895h1v1h-1zM1594 895h1v1h-1zM1629 895h1v1h-1zM1664 895h1v1h-1zM1699 895h1v1h-1zM1734 895h1v1h-1zM20 918h1v1h-1zM55 918h1v1h-1zM90 918h1v1h-1zM125 918h1v1h-1zM160 918h1v1h-1zM195 918h1v1h-1zM230 918h1v1h-1zM265 918h1v1h-1zM300 918h1v1h-1zM335 918h1v1h-1zM370 918h1v1h-1zM405 918h1v1h-1zM440 918h1v1h-1zM475 918h1v1h-1zM510 918h1v1h-1zM545 918h1v1h-1zM580 918h1v1h-1zM615 918h1v1h-1zM650 918h1v1h-1zM685 918h1v1h-1zM720 918h1v1h-1zM755 918h1v1h-1zM790 918h1v1h-1zM825 918h1v1h-1zM859 918h1v1h-1zM894 918h1v1h-1zM929 918h1v1h-1zM964 918h1v1h-1zM999 918h1v1h-1zM1034 918h1v1h-1zM1069 918h1v1h-1zM1104 918h1v1h-1zM1139 918h1v1h-1zM1174 918h1v1h-1zM1209 918h1v1h-1zM1244 918h1v1h-1zM1279 918h1v1h-1zM1314 918h1v1h-1zM1349 918h1v1h-1zM1384 918h1v1h-1zM1419 918h1v1h-1zM1454 918h1v1h-1zM1489 918h1v1h-1zM1524 918h1v1h-1zM1559 918h1v1h-1zM1594 918h1v1h-1zM1629 918h1v1h-1zM1664 918h1v1h-1zM1699 918h1v1h-1zM1734 918h1v1h-1zM20 941h1v1h-1zM55 941h1v1h-1zM90 941h1v1h-1zM125 941h1v1h-1zM160 941h1v1h-1zM195 941h1v1h-1zM230 941h1v1h-1zM265 941h1v1h-1zM300 941h1v1h-1zM335 941h1v1h-1zM370 941h1v1h-1zM405 941h1v1h-1zM440 941h1v1h-1zM475 941h1v1h-1zM510 941h1v1h-1zM545 941h1v1h-1zM580 941h1v1h-1zM615 941h1v1h-1zM650 941h1v1h-1zM685 941h1v1h-1zM720 941h1v1h-1zM755 941h1v1h-1zM790 941h1v1h-1zM825 941h1v1h-1zM859 941h1v1h-1zM894 941h1v1h-1zM929 941h1v1h-1zM964 941h1v1h-1zM999 941h1v1h-1zM1034 941h1v1h-1zM1069 941h1v1h-1zM1104 941h1v1h-1zM1139 941h1v1h-1zM1174 941h1v1h-1zM1209 941h1v1h-1zM1244 941h1v1h-1zM1279 941h1v1h-1zM1314 941h1v1h-1zM1349 941h1v1h-1zM1384 941h1v1h-1zM1419 941h1v1h-1zM1454 941h1v1h-1zM1489 941h1v1h-1zM1524 941h1v1h-1zM1559 941h1v1h-1zM1594 941h1v1h-1zM1629 941h1v1h-1zM1664 941h1v1h-1zM1699 941h1v1h-1zM1734 941h1v1h-1zM20 988h1v1h-1zM55 988h1v1h-1zM90 988h1v1h-1zM125 988h1v1h-1zM160 988h1v1h-1zM195 988h1v1h-1zM230 988h1v1h-1zM265 988h1v1h-1zM300 988h1v1h-1zM335 988h1v1h-1zM370 988h1v1h-1zM405 988h1v1h-1zM440 988h1v1h-1zM475 988h1v1h-1zM510 988h1v1h-1zM545 988h1v1h-1zM580 988h1v1h-1zM615 988h1v1h-1zM650 988h1v1h-1zM685 988h1v1h-1zM720 988h1v1h-1zM755 988h1v1h-1zM790 988h1v1h-1zM825 988h1v1h-1zM859 988h1v1h-1zM894 988h1v1h-1zM929 988h1v1h-1zM964 988h1v1h-1zM999 988h1v1h-1zM1034 988h1v1h-1zM1069 988h1v1h-1zM1104 988h1v1h-1zM1139 988h1v1h-1zM1174 988h1v1h-1zM1209 988h1v1h-1zM1244 988h1v1h-1zM1279 988h1v1h-1zM1314 988h1v1h-1zM1349 988h1v1h-1zM1384 988h1v1h-1zM1419 988h1v1h-1zM1454 988h1v1h-1zM1489 988h1v1h-1zM1524 988h1v1h-1zM1559 988h1v1h-1zM1594 988h1v1h-1zM1629 988h1v1h-1zM1664 988h1v1h-1zM1699 988h1v1h-1zM1734 988h1v1h-1z"/><path fill="#bdbdbd" d="M230 58h1v1h-1zM230 63h1v1h-1zM230 67h1v1h-1zM230 72h1v1h-1zM230 77h1v1h-1zM230 81h1v1h-1zM230 86h1v1h-1zM230 90h1v1h-1zM230 95h1v1h-1zM230 100h1v1h-1zM230 104h1v1h-1zM230 109h1v1h-1zM230 114h1v1h-1zM230 118h1v1h-1zM230 123h1v1h-1zM230 128h1v1h-1zM230 132h1v1h-1zM230 137h1v1h-1zM230 142h1v1h-1zM230 146h1v1h-1zM230 151h1v1h-1zM230 155h1v1h-1zM230 160h1v1h-1zM230 165h1v1h-1zM230 169h1v1h-1zM230 174h1v1h-1zM230 179h1v1h-1zM230 183h1v1h-1zM230 188h1v1h-1zM230 193h1v1h-1zM230 197h1v1h-1zM230 202h1v1h-1zM230 206h1v1h-1zM230 211h1v1h-1zM230 216h1v1h-1zM230 220h1v1h-1zM230 225h1v1h-1zM230 230h1v1h-1zM230 234h1v1h-1zM230 239h1v1h-1zM230 244h1v1h-1zM230 248h1v1h-1zM230 253h1v1h-1zM230 258h1v1h-1zM230 262h1v1h-1zM230 267h1v1h-1zM230 271h1v1h-1zM230 276h1v1h-1zM230 281h1v1h-1zM230 285h1v1h-1zM230 292h1v1h-1zM230 296h1v1h-1zM230 301h1v1h-1zM230 306h1v1h-1zM230 310h1v1h-1zM230 315h1v1h-1zM230 320h1v1h-1zM230 324h1v1h-1zM230 329h1v1h-1zM230 334h1v1h-1zM230 338h1v1h-1zM230 343h1v1h-1zM230 347h1v1h-1zM230 352h1v1h-1zM230 357h1v1h-1zM230 361h1v1h-1zM230 366h1v1h-1zM230 371h1v1h-1zM230 375h1v1h-1zM230 380h1v1h-1zM230 385h1v1h-1zM230 389h1v1h-1zM230 394h1v1h-1zM230 399h1v1h-1zM230 403h1v1h-1zM230 408h1v1h-1zM230 412h1v1h-1zM230 417h1v1h-1zM230 422h1v1h-1zM230 426h1v1h-1zM230 431h1v1h-1zM230 436h1v1h-1zM230 440h1v1h-1zM230 445h1v1h-1zM230 450h1v1h-1zM230 454h1v1h-1zM230 459h1v1h-1zM230 463h1v1h-1zM230 468h1v1h-1zM230 473h1v1h-1zM230 477h1v1h-1zM230 482h1v1h-1zM230 487h1v1h-1zM230 491h1v1h-1zM230 496h1v1h-1zM230 501h1v1h-1zM230 505h1v1h-1zM230 510h1v1h-1zM230 515h1v1h-1zM230 519h1v1h-1zM230 526h1v1h-1zM230 531h1v1h-1zM230 535h1v1h-1zM230 540h1v1h-1zM230 545h1v1h-1zM230 549h1v1h-1zM230 554h1v1h-1zM230 558h1v1h-1zM230 563h1v1h-1zM230 568h1v1h-1zM230 572h1v1h-1zM230 577h1v1h-1zM230 582h1v1h-1zM230 586h1v1h-1zM230 591h1v1h-1zM230 596h1v1h-1zM230 600h1v1h-1zM230 605h1v1h-1zM230 610h1v1h-1zM230 614h1v1h-1zM230 619h1v1h-1zM230 623h1v1h-1zM230 628h1v1h-1zM230 633h1v1h-1zM230 637h1v1h-1zM230 642h1v1h-1zM230 647h1v1h-1zM230 651h1v1h-1zM230 656h1v1h-1zM230 661h1v1h-1zM230 665h1v1h-1zM230 670h1v1h-1zM230 674h1v1h-1zM230 679h1v1h-1zM230 684h1v1h-1zM230 688h1v1h-1zM230 693h1v1h-1zM230 698h1v1h-1zM230 702h1v1h-1zM230 707h1v1h-1zM230 712h1v1h-1zM230 716h1v1h-1zM230 721h1v1h-1zM230 726h1v1h-1zM230 730h1v1h-1zM230 735h1v1h-1zM230 739h1v1h-1zM230 744h1v1h-1zM230 749h1v1h-1zM230 753h1v1h-1zM230 759h1v1h-1zM230 764h1v1h-1zM230 769h1v1h-1zM230 773h1v1h-1zM230 778h1v1h-1zM230 783h1v1h-1zM230 787h1v1h-1zM230 792h1v1h-1zM230 797h1v1h-1zM230 801h1v1h-1zM230 806h1v1h-1zM230 811h1v1h-1zM230 815h1v1h-1zM230 820h1v1h-1zM230 825h1v1h-1zM230 829h1v1h-1zM230 834h1v1h-1zM230 839h1v1h-1zM230 843h1v1h-1zM230 848h1v1h-1zM230 853h1v1h-1zM230 857h1v1h-1zM230 862h1v1h-1zM230 867h1v1h-1zM230 871h1v1h-1zM230 876h1v1h-1zM230 881h1v1h-1zM230 885h1v1h-1zM230 890h1v1h-1zM230 895h1v1h-1zM230 899h1v1h-1zM230 904h1v1h-1zM230 909h1v1h-1zM230 913h1v1h-1zM230 918h1v1h-1zM230 923h1v1h-1zM230 927h1v1h-1zM230 932h1v1h-1zM230 937h1v1h-1zM230 941h1v1h-1zM230 946h1v1h-1zM230 951h1v1h-1zM230 955h1v1h-1zM230 960h1v1h-1zM230 965h1v1h-1zM230 969h1v1h-1zM230 974h1v1h-1zM230 979h1v1h-1zM230 983h1v1h-1zM230 988h1v1h-1zM405 58h1v1h-1zM405 63h1v1h-1zM405 67h1v1h-1zM405 72h1v1h-1zM405 77h1v1h-1zM405 81h1v1h-1zM405 86h1v1h-1zM405 90h1v1h-1zM405 95h1v1h-1zM405 100h1v1h-1zM405 104h1v1h-1zM405 109h1v1h-1zM405 114h1v1h-1zM405 118h1v1h-1zM405 123h1v1h-1zM405 128h1v1h-1zM405 132h1v1h-1zM405 137h1v1h-1zM405 142h1v1h-1zM405 146h1v1h-1zM405 151h1v1h-1zM405 155h1v1h-1zM405 160h1v1h-1zM405 165h1v1h-1zM405 169h1v1h-1zM405 174h1v1h-1zM405 179h1v1h-1zM405 183h1v1h-1zM405 188h1v1h-1zM405 193h1v1h-1zM405 197h1v1h-1zM405 202h1v1h-1zM405 206h1v1h-1zM405 211h1v1h-1zM405 216h1v1h-1zM405 220h1v1h-1zM405 225h1v1h-1zM405 230h1v1h-1zM405 234h1v1h-1zM405 239h1v1h-1zM405 244h1v1h-1zM405 248h1v1h-1zM405 253h1v1h-1zM405 258h1v1h-1zM405 262h1v1h-1zM405 267h1v1h-1zM405 271h1v1h-1zM405 276h1v1h-1zM405 281h1v1h-1zM405 285h1v1h-1zM405 292h1v1h-1zM405 296h1v1h-1zM405 301h1v1h-1zM405 306h1v1h-1zM405 310h1v1h-1zM405 315h1v1h-1zM405 320h1v1h-1zM405 324h1v1h-1zM405 329h1v1h-1zM405 334h1v1h-1zM405 338h1v1h-1zM405 343h1v1h-1zM405 347h1v1h-1zM405 352h1v1h-1zM405 357h1v1h-1zM405 361h1v1h-1zM405 366h1v1h-1zM405 371h1v1h-1zM405 375h1v1h-1zM405 380h1v1h-1zM405 385h1v1h-1zM405 389h1v1h-1zM405 394h1v1h-1zM405 399h1v1h-1zM405 403h1v1h-1zM405 408h1v1h-1zM405 412h1v1h-1zM405 417h1v1h-1zM405 422h1v1h-1zM405 426h1v1h-1zM405 431h1v1h-1zM405 436h1v1h-1zM405 440h1v1h-1zM405 445h1v1h-1zM405 450h1v1h-1zM405 454h1v1h-1zM405 459h1v1h-1zM405 463h1v1h-1zM405 468h1v1h-1zM405 473h1v1h-1zM405 477h1v1h-1zM405 482h1v1h-1zM405 487h1v1h-1zM405 491h1v1h-1zM405 496h1v1h-1zM405 501h1v1h-1zM405 505h1v1h-1zM405 510h1v1h-1zM405 515h1v1h-1zM405 519h1v1h-1zM405 526h1v1h-1zM405 531h1v1h-1zM405 535h1v1h-1zM405 540h1v1h-1zM405 545h1v1h-1zM405 549h1v1h-1zM405 554h1v1h-1zM405 558h1v1h-1zM405 563h1v1h-1zM405 568h1v1h-1zM405 572h1v1h-1zM405 577h1v1h-1zM405 582h1v1h-1zM405 586h1v1h-1zM405 591h1v1h-1zM405 596h1v1h-1zM405 600h1v1h-1zM405 605h1v1h-1zM405 610h1v1h-1zM405 614h1v1h-1zM405 619h1v1h-1zM405 623h1v1h-1zM405 628h1v1h-1zM405 633h1v1h-1zM405 637h1v1h-1zM405 642h1v1h-1zM405 647h1v1h-1zM405 651h1v1h-1zM405 656h1v1h-1zM405 661h1v1h-1zM405 665h1v1h-1zM405 670h1v1h-1zM405 674h1v1h-1zM405 679h1v1h-1zM405 684h1v1h-1zM405 688h1v1h-1zM405 693h1v1h-1zM405 698h1v1h-1zM405 702h1v1h-1zM405 707h1v1h-1zM405 712h1v1h-1zM405 716h1v1h-1zM405 721h1v1h-1zM405 726h1v1h-1zM405 730h1v1h-1zM405 735h1v1h-1zM405 739h1v1h-1zM405 744h1v1h-1zM405 749h1v1h-1zM405 753h1v1h-1zM405 759h1v1h-1zM405 764h1v1h-1zM405 769h1v1h-1zM405 773h1v1h-1zM405 778h1v1h-1zM405 783h1v1h-1zM405 787h1v1h-1zM405 792h1v1h-1zM405 797h1v1h-1zM405 801h1v1h-1zM405 806h1v1h-1zM405 811h1v1h-1zM405 815h1v1h-1zM405 820h1v1h-1zM405 825h1v1h-1zM405 829h1v1h-1zM405 834h1v1h-1zM405 839h1v1h-1zM405 843h1v1h-1zM405 848h1v1h-1zM405 853h1v1h-1zM405 857h1v1h-1zM405 862h1v1h-1zM405 867h1v1h-1zM405 871h1v1h-1zM405 876h1v1h-1zM405 881h1v1h-1zM405 885h1v1h-1zM405 890h1v1h-1zM405 895h1v1h-1zM405 899h1v1h-1zM405 904h1v1h-1zM405 909h1v1h-1zM405 913h1v1h-1zM405 918h1v1h-1zM405 923h1v1h-1zM405 927h1v1h-1zM405 932h1v1h-1zM405 937h1v1h-1zM405 941h1v1h-1zM405 946h1v1h-1zM405 951h1v1h-1zM405 955h1v1h-1zM405 960h1v1h-1zM405 965h1v1h-1zM405 969h1v1h-1zM405 974h1v1h-1zM405 979h1v1h-1zM405 983h1v1h-1zM405 988h1v1h-1zM580 58h1v1h-1zM580 63h1v1h-1zM580 67h1v1h-1zM580 72h1v1h-1zM580 77h1v1h-1zM580 81h1v1h-1zM580 86h1v1h-1zM580 90h1v1h-1zM580 95h1v1h-1zM580 100h1v1h-1zM580 104h1v1h-1zM580 109h1v1h-1zM580 114h1v1h-1zM580 118h1v1h-1zM580 123h1v1h-1zM580 128h1v1h-1zM580 132h1v1h-1zM580 137h1v1h-1zM580 142h1v1h-1zM580 146h1v1h-1zM580 151h1v1h-1zM580 155h1v1h-1zM580 160h1v1h-1zM580 165h1v1h-1zM580 169h1v1h-1zM580 174h1v1h-1zM580 179h1v1h-1zM580 183h1v1h-1zM580 188h1v1h-1zM580 193h1v1h-1zM580 197h1v1h-1zM580 202h1v1h-1zM580 206h1v1h-1zM580 211h1v1h-1zM580 216h1v1h-1zM580 220h1v1h-1zM580 225h1v1h-1zM580 230h1v1h-1zM580 234h1v1h-1zM580 239h1v1h-1zM580 244h1v1h-1zM580 248h1v1h-1zM580 253h1v1h-1zM580 258h1v1h-1zM580 262h1v1h-1zM580 267h1v1h-1zM580 271h1v1h-1zM580 276h1v1h-1zM580 281h1v1h-1zM580 285h1v1h-1zM580 292h1v1h-1zM580 296h1v1h-1zM580 301h1v1h-1zM580 306h1v1h-1zM580 310h1v1h-1zM580 315h1v1h-1zM580 320h1v1h-1zM580 324h1v1h-1zM580 329h1v1h-1zM580 334h1v1h-1zM580 338h1v1h-1zM580 343h1v1h-1zM580 347h1v1h-1zM580 352h1v1h-1zM580 357h1v1h-1zM580 361h1v1h-1zM580 366h1v1h-1zM580 371h1v1h-1zM580 375h1v1h-1zM580 380h1v1h-1zM580 385h1v1h-1zM580 389h1v1h-1zM580 394h1v1h-1zM580 399h1v1h-1zM580 403h1v1h-1zM580 408h1v1h-1zM580 412h1v1h-1zM580 417h1v1h-1zM580 422h1v1h-1zM580 426h1v1h-1zM580 431h1v1h-1zM580 436h1v1h-1zM580 440h1v1h-1zM580 445h1v1h-1zM580 450h1v1h-1zM580 454h1v1h-1zM580 459h1v1h-1zM580 463h1v1h-1zM580 468h1v1h-1zM580 473h1v1h-1zM580 477h1v1h-1zM580 482h1v1h-1zM580 487h1v1h-1zM580 491h1v1h-1zM580 496h1v1h-1zM580 501h1v1h-1zM580 505h1v1h-1zM580 510h1v1h-1zM580 515h1v1h-1zM580 519h1v1h-1zM580 526h1v1h-1zM580 531h1v1h-1zM580 535h1v1h-1zM580 540h1v1h-1zM580 545h1v1h-1zM580 549h1v1h-1zM580 554h1v1h-1zM580 558h1v1h-1zM580 563h1v1h-1zM580 568h1v1h-1zM580 572h1v1h-1zM580 577h1v1h-1zM580 582h1v1h-1zM580 586h1v1h-1zM580 591h1v1h-1zM580 596h1v1h-1zM580 600h1v1h-1zM580 605h1v1h-1zM580 610h1v1h-1zM580 614h1v1h-1zM580 619h1v1h-1zM580 623h1v1h-1zM580 628h1v1h-1zM580 633h1v1h-1zM580 637h1v1h-1zM580 642h1v1h-1zM580 647h1v1h-1zM580 651h1v1h-1zM580 656h1v1h-1zM580 661h1v1h-1zM580 665h1v1h-1zM580 670h1v1h-1zM580 674h1v1h-1zM580 679h1v1h-1zM580 684h1v1h-1zM580 688h1v1h-1zM580 693h1v1h-1zM580 698h1v1h-1zM580 702h1v1h-1zM580 707h1v1h-1zM580 712h1v1h-1zM580 716h1v1h-1zM580 721h1v1h-1zM580 726h1v1h-1zM580 730h1v1h-1zM580 735h1v1h-1zM580 739h1v1h-1zM580 744h1v1h-1zM580 749h1v1h-1zM580 753h1v1h-1zM580 759h1v1h-1zM580 764h1v1h-1zM580 769h1v1h-1zM580 773h1v1h-1zM580 778h1v1h-1zM580 783h1v1h-1zM580 787h1v1h-1zM580 792h1v1h-1zM580 797h1v1h-1zM580 801h1v1h-1zM580 806h1v1h-1zM580 811h1v1h-1zM580 815h1v1h-1zM580 820h1v1h-1zM580 825h1v1h-1zM580 829h1v1h-1zM580 834h1v1h-1zM580 839h1v1h-1zM580 843h1v1h-1zM580 848h1v1h-1zM580 853h1v1h-1zM580 857h1v1h-1zM580 862h1v1h-1zM580 867h1v1h-1zM580 871h1v1h-1zM580 876h1v1h-1zM580 881h1v1h-1zM580 885h1v1h-1zM580 890h1v1h-1zM580 895h1v1h-1zM580 899h1v1h-1zM580 904h1v1h-1zM580 909h1v1h-1zM580 913h1v1h-1zM580 918h1v1h-1zM580 923h1v1h-1zM580 927h1v1h-1zM580 932h1v1h-1zM580 937h1v1h-1zM580 941h1v1h-1zM580 946h1v1h-1zM580 951h1v1h-1zM580 955h1v1h-1zM580 960h1v1h-1zM580 965h1v1h-1zM580 969h1v1h-1zM580 974h1v1h-1zM580 979h1v1h-1zM580 983h1v1h-1zM580 988h1v1h-1zM755 58h1v1h-1zM755 63h1v1h-1zM755 67h1v1h-1zM755 72h1v1h-1zM755 77h1v1h-1zM755 81h1v1h-1zM755 86h1v1h-1zM755 90h1v1h-1zM755 95h1v1h-1zM755 100h1v1h-1zM755 104h1v1h-1zM755 109h1v1h-1zM755 114h1v1h-1zM755 118h1v1h-1zM755 123h1v1h-1zM755 128h1v1h-1zM755 132h1v1h-1zM755 137h1v1h-1zM755 142h1v1h-1zM755 146h1v1h-1zM755 151h1v1h-1zM755 155h1v1h-1zM755 160h1v1h-1zM755 165h1v1h-1zM755 169h1v1h-1zM755 174h1v1h-1zM755 179h1v1h-1zM755 183h1v1h-1zM755 188h1v1h-1zM755 193h1v1h-1zM755 197h1v1h-1zM755 202h1v1h-1zM755 206h1v1h-1zM755 211h1v1h-1zM755 216h1v1h-1zM755 220h1v1h-1zM755 225h1v1h-1zM755 230h1v1h-1zM755 234h1v1h-1zM755 239h1v1h-1zM755 244h1v1h-1zM755 248h1v1h-1zM755 253h1v1h-1zM755 258h1v1h-1zM755 262h1v1h-1zM755 267h1v1h-1zM755 271h1v1h-1zM755 276h1v1h-1zM755 281h1v1h-1zM755 285h1v1h-1zM755 292h1v1h-1zM755 296h1v1h-1zM755 301h1v1h-1zM755 306h1v1h-1zM755 310h1v1h-1zM755 315h1v1h-1zM755 320h1v1h-1zM755 324h1v1h-1zM755 329h1v1h-1zM755 334h1v1h-1zM755 338h1v1h-1zM755 343h1v1h-1zM755 347h1v1h-1zM755 352h1v1h-1zM755 357h1v1h-1zM755 361h1v1h-1zM755 366h1v1h-1zM755 371h1v1h-1zM755 375h1v1h-1zM755 380h1v1h-1zM755 385h1v1h-1zM755 389h1v1h-1zM755 394h1v1h-1zM755 399h1v1h-1zM755 403h1v1h-1zM755 408h1v1h-1zM755 412h1v1h-1zM755 417h1v1h-1zM755 422h1v1h-1zM755 426h1v1h-1zM755 431h1v1h-1zM755 436h1v1h-1zM755 440h1v1h-1zM755 445h1v1h-1zM755 450h1v1h-1zM755 454h1v1h-1zM755 459h1v1h-1zM755 463h1v1h-1zM755 468h1v1h-1zM755 473h1v1h-1zM755 477h1v1h-1zM755 482h1v1h-1zM755 487h1v1h-1zM755 491h1v1h-1zM755 496h1v1h-1zM755 501h1v1h-1zM755 505h1v1h-1zM755 510h1v1h-1zM755 515h1v1h-1zM755 519h1v1h-1zM755 526h1v1h-1zM755 531h1v1h-1zM755 535h1v1h-1zM755 540h1v1h-1zM755 545h1v1h-1zM755 549h1v1h-1zM755 554h1v1h-1zM755 558h1v1h-1zM755 563h1v1h-1zM755 568h1v1h-1zM755 572h1v1h-1zM755 577h1v1h-1zM755 582h1v1h-1zM755 586h1v1h-1zM755 591h1v1h-1zM755 596h1v1h-1zM755 600h1v1h-1zM755 605h1v1h-1zM755 610h1v1h-1zM755 614h1v1h-1zM755 619h1v1h-1zM755 623h1v1h-1zM755 628h1v1h-1zM755 633h1v1h-1zM755 637h1v1h-1zM755 642h1v1h-1zM755 647h1v1h-1zM755 651h1v1h-1zM755 656h1v1h-1zM755 661h1v1h-1zM755 665h1v1h-1zM755 670h1v1h-1zM755 674h1v1h-1zM755 679h1v1h-1zM755 684h1v1h-1zM755 688h1v1h-1zM755 693h1v1h-1zM755 698h1v1h-1zM755 702h1v1h-1zM755 707h1v1h-1zM755 712h1v1h-1zM755 716h1v1h-1zM755 721h1v1h-1zM755 726h1v1h-1zM755 730h1v1h-1zM755 735h1v1h-1zM755 739h1v1h-1zM755 744h1v1h-1zM755 749h1v1h-1zM755 753h1v1h-1zM755 759h1v1h-1zM755 764h1v1h-1zM755 769h1v1h-1zM755 773h1v1h-1zM755 778h1v1h-1zM755 783h1v1h-1zM755 787h1v1h-1zM755 792h1v1h-1zM755 797h1v1h-1zM755 801h1v1h-1zM755 806h1v1h-1zM755 811h1v1h-1zM755 815h1v1h-1zM755 820h1v1h-1zM755 825h1v1h-1zM755 829h1v1h-1zM755 834h1v1h-1zM755 839h1v1h-1zM755 843h1v1h-1zM755 848h1v1h-1zM755 853h1v1h-1zM755 857h1v1h-1zM755 862h1v1h-1zM755 867h1v1h-1zM755 871h1v1h-1zM755 876h1v1h-1zM755 881h1v1h-1zM755 885h1v1h-1zM755 890h1v1h-1zM755 895h1v1h-1zM755 899h1v1h-1zM755 904h1v1h-1zM755 909h1v1h-1zM755 913h1v1h-1zM755 918h1v1h-1zM755 923h1v1h-1zM755 927h1v1h-1zM755 932h1v1h-1zM755 937h1v1h-1zM755 941h1v1h-1zM755 946h1v1h-1zM755 951h1v1h-1zM755 955h1v1h-1zM755 960h1v1h-1zM755 965h1v1h-1zM755 969h1v1h-1zM755 974h1v1h-1zM755 979h1v1h-1zM755 983h1v1h-1zM755 988h1v1h-1zM929 58h1v1h-1zM929 63h1v1h-1zM929 67h1v1h-1zM929 72h1v1h-1zM929 77h1v1h-1zM929 81h1v1h-1zM929 86h1v1h-1zM929 90h1v1h-1zM929 95h1v1h-1zM929 100h1v1h-1zM929 104h1v1h-1zM929 109h1v1h-1zM929 114h1v1h-1zM929 118h1v1h-1zM929 123h1v1h-1zM929 128h1v1h-1zM929 132h1v1h-1zM929 137h1v1h-1zM929 142h1v1h-1zM929 146h1v1h-1zM929 151h1v1h-1zM929 155h1v1h-1zM929 160h1v1h-1zM929 165h1v1h-1zM929 169h1v1h-1zM929 174h1v1h-1zM929 179h1v1h-1zM929 183h1v1h-1zM929 188h1v1h-1zM929 193h1v1h-1zM929 197h1v1h-1zM929 202h1v1h-1zM929 206h1v1h-1zM929 211h1v1h-1zM929 216h1v1h-1zM929 220h1v1h-1zM929 225h1v1h-1zM929 230h1v1h-1zM929 234h1v1h-1zM929 239h1v1h-1zM929 244h1v1h-1zM929 248h1v1h-1zM929 253h1v1h-1zM929 258h1v1h-1zM929 262h1v1h-1zM929 267h1v1h-1zM929 271h1v1h-1zM929 276h1v1h-1zM929 281h1v1h-1zM929 285h1v1h-1zM929 292h1v1h-1zM929 296h1v1h-1zM929 301h1v1h-1zM929 306h1v1h-1zM929 310h1v1h-1zM929 315h1v1h-1zM929 320h1v1h-1zM929 324h1v1h-1zM929 329h1v1h-1zM929 334h1v1h-1zM929 338h1v1h-1zM929 343h1v1h-1zM929 347h1v1h-1zM929 352h1v1h-1zM929 357h1v1h-1zM929 361h1v1h-1zM929 366h1v1h-1zM929 371h1v1h-1zM929 375h1v1h-1zM929 380h1v1h-1zM929 385h1v1h-1zM929 389h1v1h-1zM929 394h1v1h-1zM929 399h1v1h-1zM929 403h1v1h-1zM929 408h1v1h-1zM929 412h1v1h-1zM929 417h1v1h-1zM929 422h1v1h-1zM929 426h1v1h-1zM929 431h1v1h-1zM929 436h1v1h-1zM929 440h1v1h-1zM929 445h1v1h-1zM929 450h1v1h-1zM929 454h1v1h-1zM929 459h1v1h-1zM929 463h1v1h-1zM929 468h1v1h-1zM929 473h1v1h-1zM929 477h1v1h-1zM929 482h1v1h-1zM929 487h1v1h-1zM929 491h1v1h-1zM929 496h1v1h-1zM929 501h1v1h-1zM929 505h1v1h-1zM929 510h1v1h-1zM929 515h1v1h-1zM929 519h1v1h-1zM929 526h1v1h-1zM929 531h1v1h-1zM929 535h1v1h-1zM929 540h1v1h-1zM929 545h1v1h-1zM929 549h1v1h-1zM929 554h1v1h-1zM929 558h1v1h-1zM929 563h1v1h-1zM929 568h1v1h-1zM929 572h1v1h-1zM929 577h1v1h-1zM929 582h1v1h-1zM929 586h1v1h-1zM929 591h1v1h-1zM929 596h1v1h-1zM929 600h1v1h-1zM929 605h1v1h-1zM929 610h1v1h-1zM929 614h1v1h-1zM929 619h1v1h-1zM929 623h1v1h-1zM929 628h1v1h-1zM929 633h1v1h-1zM929 637h1v1h-1zM929 642h1v1h-1zM929 647h1v1h-1zM929 651h1v1h-1zM929 656h1v1h-1zM929 661h1v1h-1zM929 665h1v1h-1zM929 670h1v1h-1zM929 674h1v1h-1zM929 679h1v1h-1zM929 684h1v1h-1zM929 688h1v1h-1zM929 693h1v1h-1zM929 698h1v1h-1zM929 702h1v1h-1zM929 707h1v1h-1zM929 712h1v1h-1zM929 716h1v1h-1zM929 721h1v1h-1zM929 726h1v1h-1zM929 730h1v1h-1zM929 735h1v1h-1zM929 739h1v1h-1zM929 744h1v1h-1zM929 749h1v1h-1zM929 753h1v1h-1zM929 759h1v1h-1zM929 764h1v1h-1zM929 769h1v1h-1zM929 773h1v1h-1zM929 778h1v1h-1zM929 783h1v1h-1zM929 787h1v1h-1zM929 792h1v1h-1zM929 797h1v1h-1zM929 801h1v1h-1zM929 806h1v1h-1zM929 811h1v1h-1zM929 815h1v1h-1zM929 820h1v1h-1zM929 825h1v1h-1zM929 829h1v1h-1zM929 834h1v1h-1zM929 839h1v1h-1zM929 843h1v1h-1zM929 848h1v1h-1zM929 853h1v1h-1zM929 857h1v1h-1zM929 862h1v1h-1zM929 867h1v1h-1zM929 871h1v1h-1zM929 876h1v1h-1zM929 881h1v1h-1zM929 885h1v1h-1zM929 890h1v1h-1zM929 895h1v1h-1zM929 899h1v1h-1zM929 904h1v1h-1zM929 909h1v1h-1zM929 913h1v1h-1zM929 918h1v1h-1zM929 923h1v1h-1zM929 927h1v1h-1zM929 932h1v1h-1zM929 937h1v1h-1zM929 941h1v1h-1zM929 946h1v1h-1zM929 951h1v1h-1zM929 955h1v1h-1zM929 960h1v1h-1zM929 965h1v1h-1zM929 969h1v1h-1zM929 974h1v1h-1zM929 979h1v1h-1zM929 983h1v1h-1zM929 988h1v1h-1zM1104 58h1v1h-1zM1104 63h1v1h-1zM1104 67h1v1h-1zM1104 72h1v1h-1zM1104 77h1v1h-1zM1104 81h1v1h-1zM1104 86h1v1h-1zM1104 90h1v1h-1zM1104 95h1v1h-1zM1104 100h1v1h-1zM1104 104h1v1h-1zM1104 109h1v1h-1zM1104 114h1v1h-1zM1104 118h1v1h-1zM1104 123h1v1h-1zM1104 128h1v1h-1zM1104 132h1v1h-1zM1104 137h1v1h-1zM1104 142h1v1h-1zM1104 146h1v1h-1zM1104 151h1v1h-1zM1104 155h1v1h-1zM1104 160h1v1h-1zM1104 165h1v1h-1zM1104 169h1v1h-1zM1104 174h1v1h-1zM1104 179h1v1h-1zM1104 183h1v1h-1zM1104 188h1v1h-1zM1104 193h1v1h-1zM1104 197h1v1h-1zM1104 202h1v1h-1zM1104 206h1v1h-1zM1104 211h1v1h-1zM1104 216h1v1h-1zM1104 220h1v1h-1zM1104 225h1v1h-1zM1104 230h1v1h-1zM1104 234h1v1h-1zM1104 239h1v1h-1zM1104 244h1v1h-1zM1104 248h1v1h-1zM1104 253h1v1h-1zM1104 258h1v1h-1zM1104 262h1v1h-1zM1104 267h1v1h-1zM1104 271h1v1h-1zM1104 276h1v1h-1zM1104 281h1v1h-1zM1104 285h1v1h-1zM1104 292h1v1h-1zM1104 296h1v1h-1zM1104 301h1v1h-1zM1104 306h1v1h-1zM1104 310h1v1h-1zM1104 315h1v1h-1zM1104 320h1v1h-1zM1104 324h1v1h-1zM1104 329h1v1h-1zM1104 334h1v1h-1zM1104 338h1v1h-1zM1104 343h1v1h-1zM1104 347h1v1h-1zM1104 352h1v1h-1zM1104 357h1v1h-1zM1104 361h1v1h-1zM1104 366h1v1h-1zM1104 371h1v1h-1zM1104 375h1v1h-1zM1104 380h1v1h-1zM1104 385h1v1h-1zM1104 389h1v1h-1zM1104 394h1v1h-1zM1104 399h1v1h-1zM1104 403h1v1h-1zM1104 408h1v1h-1zM1104 412h1v1h-1zM1104 417h1v1h-1zM1104 422h1v1h-1zM1104 426h1v1h-1zM1104 431h1v1h-1zM1104 436h1v1h-1zM1104 440h1v1h-1zM1104 445h1v1h-1zM1104 450h1v1h-1zM1104 454h1v1h-1zM1104 459h1v1h-1zM1104 463h1v1h-1zM1104 468h1v1h-1zM1104 473h1v1h-1zM1104 477h1v1h-1zM1104 482h1v1h-1zM1104 487h1v1h-1zM1104 491h1v1h-1zM1104 496h1v1h-1zM1104 501h1v1h-1zM1104 505h1v1h-1zM1104 510h1v1h-1zM1104 515h1v1h-1zM1104 519h1v1h-1zM1104 526h1v1h-1zM1104 531h1v1h-1zM1104 535h1v1h-1zM1104 540h1v1h-1zM1104 545h1v1h-1zM1104 549h1v1h-1zM1104 554h1v1h-1zM1104 558h1v1h-1zM1104 563h1v1h-1zM1104 568h1v1h-1zM1104 572h1v1h-1zM1104 577h1v1h-1zM1104 582h1v1h-1zM1104 586h1v1h-1zM1104 591h1v1h-1zM1104 596h1v1h-1zM1104 600h1v1h-1zM1104 605h1v1h-1zM1104 610h1v1h-1zM1104 614h1v1h-1zM1104 619h1v1h-1zM1104 623h1v1h-1zM1104 628h1v1h-1zM1104 633h1v1h-1zM1104 637h1v1h-1zM1104 642h1v1h-1zM1104 647h1v1h-1zM1104 651h1v1h-1zM1104 656h1v1h-1zM1104 661h1v1h-1zM1104 665h1v1h-1zM1104 670h1v1h-1zM1104 674h1v1h-1zM1104 679h1v1h-1zM1104 684h1v1h-1zM1104 688h1v1h-1zM1104 693h1v1h-1zM1104 698h1v1h-1zM1104 702h1v1h-1zM1104 707h1v1h-1zM1104 712h1v1h-1zM1104 716h1v1h-1zM1104 721h1v1h-1zM1104 726h1v1h-1zM1104 730h1v1h-1zM1104 735h1v1h-1zM1104 739h1v1h-1zM1104 744h1v1h-1zM1104 749h1v1h-1zM1104 753h1v1h-1zM1104 759h1v1h-1zM1104 764h1v1h-1zM1104 769h1v1h-1zM1104 773h1v1h-1zM1104 778h1v1h-1zM1104 783h1v1h-1zM1104 787h1v1h-1zM1104 792h1v1h-1zM1104 797h1v1h-1zM1104 801h1v1h-1zM1104 806h1v1h-1zM1104 811h1v1h-1zM1104 815h1v1h-1zM1104 820h1v1h-1zM1104 825h1v1h-1zM1104 829h1v1h-1zM1104 834h1v1h-1zM1104 839h1v1h-1zM1104 843h1v1h-1zM1104 848h1v1h-1zM1104 853h1v1h-1zM1104 857h1v1h-1zM1104 862h1v1h-1zM1104 867h1v1h-1zM1104 871h1v1h-1zM1104 876h1v1h-1zM1104 881h1v1h-1zM1104 885h1v1h-1zM1104 890h1v1h-1zM1104 895h1v1h-1zM1104 899h1v1h-1zM1104 904h1v1h-1zM1104 909h1v1h-1zM1104 913h1v1h-1zM1104 918h1v1h-1zM1104 923h1v1h-1zM1104 927h1v1h-1zM1104 932h1v1h-1zM1104 937h1v1h-1zM1104 941h1v1h-1zM1104 946h1v1h-1zM1104 951h1v1h-1zM1104 955h1v1h-1zM1104 960h1v1h-1zM1104 965h1v1h-1zM1104 969h1v1h-1zM1104 974h1v1h-1zM1104 979h1v1h-1zM1104 983h1v1h-1zM1104 988h1v1h-1zM1279 58h1v1h-1zM1279 63h1v1h-1zM1279 67h1v1h-1zM1279 72h1v1h-1zM1279 77h1v1h-1zM1279 81h1v1h-1zM1279 86h1v1h-1zM1279 90h1v1h-1zM1279 95h1v1h-1zM1279 100h1v1h-1zM1279 104h1v1h-1zM1279 109h1v1h-1zM1279 114h1v1h-1zM1279 118h1v1h-1zM1279 123h1v1h-1zM1279 128h1v1h-1zM1279 132h1v1h-1zM1279 137h1v1h-1zM1279 142h1v1h-1zM1279 146h1v1h-1zM1279 151h1v1h-1zM1279 155h1v1h-1zM1279 160h1v1h-1zM1279 165h1v1h-1zM1279 169h1v1h-1zM1279 174h1v1h-1zM1279 179h1v1h-1zM1279 183h1v1h-1zM1279 188h1v1h-1zM1279 193h1v1h-1zM1279 197h1v1h-1zM1279 202h1v1h-1zM1279 206h1v1h-1zM1279 211h1v1h-1zM1279 216h1v1h-1zM1279 220h1v1h-1zM1279 225h1v1h-1zM1279 230h1v1h-1zM1279 234h1v1h-1zM1279 239h1v1h-1zM1279 244h1v1h-1zM1279 248h1v1h-1zM1279 253h1v1h-1zM1279 258h1v1h-1zM1279 262h1v1h-1zM1279 267h1v1h-1zM1279 271h1v1h-1zM1279 276h1v1h-1zM1279 281h1v1h-1zM1279 285h1v1h-1zM1279 292h1v1h-1zM1279 296h1v1h-1zM1279 301h1v1h-1zM1279 306h1v1h-1zM1279 310h1v1h-1zM1279 315h1v1h-1zM1279 320h1v1h-1zM1279 324h1v1h-1zM1279 329h1v1h-1zM1279 334h1v1h-1zM1279 338h1v1h-1zM1279 343h1v1h-1zM1279 347h1v1h-1zM1279 352h1v1h-1zM1279 357h1v1h-1zM1279 361h1v1h-1zM1279 366h1v1h-1zM1279 371h1v1h-1zM1279 375h1v1h-1zM1279 380h1v1h-1zM1279 385h1v1h-1zM1279 389h1v1h-1zM1279 394h1v1h-1zM1279 399h1v1h-1zM1279 403h1v1h-1zM1279 408h1v1h-1zM1279 412h1v1h-1zM1279 417h1v1h-1zM1279 422h1v1h-1zM1279 426h1v1h-1zM1279 431h1v1h-1zM1279 436h1v1h-1zM1279 440h1v1h-1zM1279 445h1v1h-1zM1279 450h1v1h-1zM1279 454h1v1h-1zM1279 459h1v1h-1zM1279 463h1v1h-1zM1279 468h1v1h-1zM1279 473h1v1h-1zM1279 477h1v1h-1zM1279 482h1v1h-1zM1279 487h1v1h-1zM1279 491h1v1h-1zM1279 496h1v1h-1zM1279 501h1v1h-1zM1279 505h1v1h-1zM1279 510h1v1h-1zM1279 515h1v1h-1zM1279 519h1v1h-1zM1279 526h1v1h-1zM1279 531h1v1h-1zM1279 535h1v1h-1zM1279 540h1v1h-1zM1279 545h1v1h-1zM1279 549h1v1h-1zM1279 554h1v1h-1zM1279 558h1v1h-1zM1279 563h1v1h-1zM1279 568h1v1h-1zM1279 572h1v1h-1zM1279 577h1v1h-1zM1279 582h1v1h-1zM1279 586h1v1h-1zM1279 591h1v1h-1zM1279 596h1v1h-1zM1279 600h1v1h-1zM1279 605h1v1h-1zM1279 610h1v1h-1zM1279 614h1v1h-1zM1279 619h1v1h-1zM1279 623h1v1h-1zM1279 628h1v1h-1zM1279 633h1v1h-1zM1279 637h1v1h-1zM1279 642h1v1h-1zM1279 647h1v1h-1zM1279 651h1v1h-1zM1279 656h1v1h-1zM1279 661h1v1h-1zM1279 665h1v1h-1zM1279 670h1v1h-1zM1279 674h1v1h-1zM1279 679h1v1h-1zM1279 684h1v1h-1zM1279 688h1v1h-1zM1279 693h1v1h-1zM1279 698h1v1h-1zM1279 702h1v1h-1zM1279 707h1v1h-1zM1279 712h1v1h-1zM1279 716h1v1h-1zM1279 721h1v1h-1zM1279 726h1v1h-1zM1279 730h1v1h-1zM1279 735h1v1h-1zM1279 739h1v1h-1zM1279 744h1v1h-1zM1279 749h1v1h-1zM1279 753h1v1h-1zM1279 759h1v1h-1zM1279 764h1v1h-1zM1279 769h1v1h-1zM1279 773h1v1h-1zM1279 778h1v1h-1zM1279 783h1v1h-1zM1279 787h1v1h-1zM1279 792h1v1h-1zM1279 797h1v1h-1zM1279 801h1v1h-1zM1279 806h1v1h-1zM1279 811h1v1h-1zM1279 815h1v1h-1zM1279 820h1v1h-1zM1279 825h1v1h-1zM1279 829h1v1h-1zM1279 834h1v1h-1zM1279 839h1v1h-1zM1279 843h1v1h-1zM1279 848h1v1h-1zM1279 853h1v1h-1zM1279 857h1v1h-1zM1279 862h1v1h-1zM1279 867h1v1h-1zM1279 871h1v1h-1zM1279 876h1v1h-1zM1279 881h1v1h-1zM1279 885h1v1h-1zM1279 890h1v1h-1zM1279 895h1v1h-1zM1279 899h1v1h-1zM1279 904h1v1h-1zM1279 909h1v1h-1zM1279 913h1v1h-1zM1279 918h1v1h-1zM1279 923h1v1h-1zM1279 927h1v1h-1zM1279 932h1v1h-1zM1279 937h1v1h-1zM1279 941h1v1h-1zM1279 946h1v1h-1zM1279 951h1v1h-1zM1279 955h1v1h-1zM1279 960h1v1h-1zM1279 965h1v1h-1zM1279 969h1v1h-1zM1279 974h1v1h-1zM1279 979h1v1h-1zM1279 983h1v1h-1zM1279 988h1v1h-1zM1454 58h1v1h-1zM1454 63h1v1h-1zM1454 67h1v1h-1zM1454 72h1v1h-1zM1454 77h1v1h-1zM1454 81h1v1h-1zM1454 86h1v1h-1zM1454 90h1v1h-1zM1454 95h1v1h-1zM1454 100h1v1h-1zM1454 104h1v1h-1zM1454 109h1v1h-1zM1454 114h1v1h-1zM1454 118h1v1h-1zM1454 123h1v1h-1zM1454 128h1v1h-1zM1454 132h1v1h-1zM1454 137h1v1h-1zM1454 142h1v1h-1zM1454 146h1v1h-1zM1454 151h1v1h-1zM1454 155h1v1h-1zM1454 160h1v1h-1zM1454 165h1v1h-1zM1454 169h1v1h-1zM1454 174h1v1h-1zM1454 179h1v1h-1zM1454 183h1v1h-1zM1454 188h1v1h-1zM1454 193h1v1h-1zM1454 197h1v1h-1zM1454 202h1v1h-1zM1454 206h1v1h-1zM1454 211h1v1h-1zM1454 216h1v1h-1zM1454 220h1v1h-1zM1454 225h1v1h-1zM1454 230h1v1h-1zM1454 234h1v1h-1zM1454 239h1v1h-1zM1454 244h1v1h-1zM1454 248h1v1h-1zM1454 253h1v1h-1zM1454 258h1v1h-1zM1454 262h1v1h-1zM1454 267h1v1h-1zM1454 271h1v1h-1zM1454 276h1v1h-1zM1454 281h1v1h-1zM1454 285h1v1h-1zM1454 292h1v1h-1zM1454 296h1v1h-1zM1454 301h1v1h-1zM1454 306h1v1h-1zM1454 310h1v1h-1zM1454 315h1v1h-1zM1454 320h1v1h-1zM1454 324h1v1h-1zM1454 329h1v1h-1zM1454 334h1v1h-1zM1454 338h1v1h-1zM1454 343h1v1h-1zM1454 347h1v1h-1zM1454 352h1v1h-1zM1454 357h1v1h-1zM1454 361h1v1h-1zM1454 366h1v1h-1zM1454 371h1v1h-1zM1454 375h1v1h-1zM1454 380h1v1h-1zM1454 385h1v1h-1zM1454 389h1v1h-1zM1454 394h1v1h-1zM1454 399h1v1h-1zM1454 403h1v1h-1zM1454 408h1v1h-1zM1454 412h1v1h-1zM1454 417h1v1h-1zM1454 422h1v1h-1zM1454 426h1v1h-1zM1454 431h1v1h-1zM1454 436h1v1h-1zM1454 440h1v1h-1zM1454 445h1v1h-1zM1454 450h1v1h-1zM1454 454h1v1h-1zM1454 459h1v1h-1zM1454 463h1v1h-1zM1454 468h1v1h-1zM1454 473h1v1h-1zM1454 477h1v1h-1zM1454 482h1v1h-1zM1454 487h1v1h-1zM1454 491h1v1h-1zM1454 496h1v1h-1zM1454 501h1v1h-1zM1454 505h1v1h-1zM1454 510h1v1h-1zM1454 515h1v1h-1zM1454 519h1v1h-1zM1454 526h1v1h-1zM1454 531h1v1h-1zM1454 535h1v1h-1zM1454 540h1v1h-1zM1454 545h1v1h-1zM1454 549h1v1h-1zM1454 554h1v1h-1zM1454 558h1v1h-1zM1454 563h1v1h-1zM1454 568h1v1h-1zM1454 572h1v1h-1zM1454 577h1v1h-1zM1454 582h1v1h-1zM1454 586h1v1h-1zM1454 591h1v1h-1zM1454 596h1v1h-1zM1454 600h1v1h-1zM1454 605h1v1h-1zM1454 610h1v1h-1zM1454 614h1v1h-1zM1454 619h1v1h-1zM1454 623h1v1h-1zM1454 628h1v1h-1zM1454 633h1v1h-1zM1454 637h1v1h-1zM1454 642h1v1h-1zM1454 647h1v1h-1zM1454 651h1v1h-1zM1454 656h1v1h-1zM1454 661h1v1h-1zM1454 665h1v1h-1zM1454 670h1v1h-1zM1454 674h1v1h-1zM1454 679h1v1h-1zM1454 684h1v1h-1zM1454 688h1v1h-1zM1454 693h1v1h-1zM1454 698h1v1h-1zM1454 702h1v1h-1zM1454 707h1v1h-1zM1454 712h1v1h-1zM1454 716h1v1h-1zM1454 721h1v1h-1zM1454 726h1v1h-1zM1454 730h1v1h-1zM1454 735h1v1h-1zM1454 739h1v1h-1zM1454 744h1v1h-1zM1454 749h1v1h-1zM1454 753h1v1h-1zM1454 759h1v1h-1zM1454 764h1v1h-1zM1454 769h1v1h-1zM1454 773h1v1h-1zM1454 778h1v1h-1zM1454 783h1v1h-1zM1454 787h1v1h-1zM1454 792h1v1h-1zM1454 797h1v1h-1zM1454 801h1v1h-1zM1454 806h1v1h-1zM1454 811h1v1h-1zM1454 815h1v1h-1zM1454 820h1v1h-1zM1454 825h1v1h-1zM1454 829h1v1h-1zM1454 834h1v1h-1zM1454 839h1v1h-1zM1454 843h1v1h-1zM1454 848h1v1h-1zM1454 853h1v1h-1zM1454 857h1v1h-1zM1454 862h1v1h-1zM1454 867h1v1h-1zM1454 871h1v1h-1zM1454 876h1v1h-1zM1454 881h1v1h-1zM1454 885h1v1h-1zM1454 890h1v1h-1zM1454 895h1v1h-1zM1454 899h1v1h-1zM1454 904h1v1h-1zM1454 909h1v1h-1zM1454 913h1v1h-1zM1454 918h1v1h-1zM1454 923h1v1h-1zM1454 927h1v1h-1zM1454 932h1v1h-1zM1454 937h1v1h-1zM1454 941h1v1h-1zM1454 946h1v1h-1zM1454 951h1v1h-1zM1454 955h1v1h-1zM1454 960h1v1h-1zM1454 965h1v1h-1zM1454 969h1v1h-1zM1454 974h1v1h-1zM1454 979h1v1h-1zM1454 983h1v1h-1zM1454 988h1v1h-1zM1629 58h1v1h-1zM1629 63h1v1h-1zM1629 67h1v1h-1zM1629 72h1v1h-1zM1629 77h1v1h-1zM1629 81h1v1h-1zM1629 86h1v1h-1zM1629 90h1v1h-1zM1629 95h1v1h-1zM1629 100h1v1h-1zM1629 104h1v1h-1zM1629 109h1v1h-1zM1629 114h1v1h-1zM1629 118h1v1h-1zM1629 123h1v1h-1zM1629 128h1v1h-1zM1629 132h1v1h-1zM1629 137h1v1h-1zM1629 142h1v1h-1zM1629 146h1v1h-1zM1629 151h1v1h-1zM1629 155h1v1h-1zM1629 160h1v1h-1zM1629 165h1v1h-1zM1629 169h1v1h-1zM1629 174h1v1h-1zM1629 179h1v1h-1zM1629 183h1v1h-1zM1629 188h1v1h-1zM1629 193h1v1h-1zM1629 197h1v1h-1zM1629 202h1v1h-1zM1629 206h1v1h-1zM1629 211h1v1h-1zM1629 216h1v1h-1zM1629 220h1v1h-1zM1629 225h1v1h-1zM1629 230h1v1h-1zM1629 234h1v1h-1zM1629 239h1v1h-1zM1629 244h1v1h-1zM1629 248h1v1h-1zM1629 253h1v1h-1zM1629 258h1v1h-1zM1629 262h1v1h-1zM1629 267h1v1h-1zM1629 271h1v1h-1zM1629 276h1v1h-1zM1629 281h1v1h-1zM1629 285h1v1h-1zM1629 292h1v1h-1zM1629 296h1v1h-1zM1629 301h1v1h-1zM1629 306h1v1h-1zM1629 310h1v1h-1zM1629 315h1v1h-1zM1629 320h1v1h-1zM1629 324h1v1h-1zM1629 329h1v1h-1zM1629 334h1v1h-1zM1629 338h1v1h-1zM1629 343h1v1h-1zM1629 347h1v1h-1zM1629 352h1v1h-1zM1629 357h1v1h-1zM1629 361h1v1h-1zM1629 366h1v1h-1zM1629 371h1v1h-1zM1629 375h1v1h-1zM1629 380h1v1h-1zM1629 385h1v1h-1zM1629 389h1v1h-1zM1629 394h1v1h-1zM1629 399h1v1h-1zM1629 403h1v1h-1zM1629 408h1v1h-1zM1629 412h1v1h-1zM1629 417h1v1h-1zM1629 422h1v1h-1zM1629 426h1v1h-1zM1629 431h1v1h-1zM1629 436h1v1h-1zM1629 440h1v1h-1zM1629 445h1v1h-1zM1629 450h1v1h-1zM1629 454h1v1h-1zM1629 459h1v1h-1zM1629 463h1v1h-1zM1629 468h1v1h-1zM1629 473h1v1h-1zM1629 477h1v1h-1zM1629 482h1v1h-1zM1629 487h1v1h-1zM1629 491h1v1h-1zM1629 496h1v1h-1zM1629 501h1v1h-1zM1629 505h1v1h-1zM1629 510h1v1h-1zM1629 515h1v1h-1zM1629 519h1v1h-1zM1629 526h1v1h-1zM1629 531h1v1h-1zM1629 535h1v1h-1zM1629 540h1v1h-1zM1629 545h1v1h-1zM1629 549h1v1h-1zM1629 554h1v1h-1zM1629 558h1v1h-1zM1629 563h1v1h-1zM1629 568h1v1h-1zM1629 572h1v1h-1zM1629 577h1v1h-1zM1629 582h1v1h-1zM1629 586h1v1h-1zM1629 591h1v1h-1zM1629 596h1v1h-1zM1629 600h1v1h-1zM1629 605h1v1h-1zM1629 610h1v1h-1zM1629 614h1v1h-1zM1629 619h1v1h-1zM1629 623h1v1h-1zM1629 628h1v1h-1zM1629 633h1v1h-1zM1629 637h1v1h-1zM1629 642h1v1h-1zM1629 647h1v1h-1zM1629 651h1v1h-1zM1629 656h1v1h-1zM1629 661h1v1h-1zM1629 665h1v1h-1zM1629 670h1v1h-1zM1629 674h1v1h-1zM1629 679h1v1h-1zM1629 684h1v1h-1zM1629 688h1v1h-1zM1629 693h1v1h-1zM1629 698h1v1h-1zM1629 702h1v1h-1zM1629 707h1v1h-1zM1629 712h1v1h-1zM1629 716h1v1h-1zM1629 721h1v1h-1zM1629 726h1v1h-1zM1629 730h1v1h-1zM1629 735h1v1h-1zM1629 739h1v1h-1zM1629 744h1v1h-1zM1629 749h1v1h-1zM1629 753h1v1h-1zM1629 759h1v1h-1zM1629 764h1v1h-1zM1629 769h1v1h-1zM1629 773h1v1h-1zM1629 778h1v1h-1zM1629 783h1v1h-1zM1629 787h1v1h-1zM1629 792h1v1h-1zM1629 797h1v1h-1zM1629 801h1v1h-1zM1629 806h1v1h-1zM1629 811h1v1h-1zM1629 815h1v1h-1zM1629 820h1v1h-1zM1629 825h1v1h-1zM1629 829h1v1h-1zM1629 834h1v1h-1zM1629 839h1v1h-1zM1629 843h1v1h-1zM1629 848h1v1h-1zM1629 853h1v1h-1zM1629 857h1v1h-1zM1629 862h1v1h-1zM1629 867h1v1h-1zM1629 871h1v1h-1zM1629 876h1v1h-1zM1629 881h1v1h-1zM1629 885h1v1h-1zM1629 890h1v1h-1zM1629 895h1v1h-1zM1629 899h1v1h-1zM1629 904h1v1h-1zM1629 909h1v1h-1zM1629 913h1v1h-1zM1629 918h1v1h-1zM1629 923h1v1h-1zM1629 927h1v1h-1zM1629 932h1v1h-1zM1629 937h1v1h-1zM1629 941h1v1h-1zM1629 946h1v1h-1zM1629 951h1v1h-1zM1629 955h1v1h-1zM1629 960h1v1h-1zM1629 965h1v1h-1zM1629 969h1v1h-1zM1629 974h1v1h-1zM1629 979h1v1h-1zM1629 983h1v1h-1zM1629 988h1v1h-1z"/><line x1="3" y1="267.5" x2="1718" y2="267.5" stroke="#c4c4c4" stroke-width="1.3" stroke-dasharray="5 5"/><line x1="3" y1="431.5" x2="1718" y2="431.5" stroke="#c4c4c4" stroke-width="1.3" stroke-dasharray="5 5"/><line x1="3" y1="735.4" x2="1718" y2="735.4" stroke="#c4c4c4" stroke-width="1.3" stroke-dasharray="5 5"/><line x1="3" y1="965.5" x2="1718" y2="965.5" stroke="#c4c4c4" stroke-width="1.3" stroke-dasharray="5 5"/></svg><svg class="a" style="left:40px;top:58px" width="32" height="42" viewBox="40 58 32 42"><polygon points="45,58 65.5,58 55.5,67.5" fill="#f7941d"/><path d="M46 69H64.5V88H59.3L55.3 95L51.3 88H46Z" fill="#000" stroke="#f7941d" stroke-width="2"/><path d="M50.3 74.2H60.7M55.5 74.2V84.5" stroke="#f7941d" stroke-width="2.4"/></svg><div class="rl" style="top:73.7px;color:#f3e21a">40 V</div><div class="rl" style="top:96.9px;color:#f3e21a">35 V</div><div class="rl" style="top:120.1px;color:#f3e21a">30 V</div><div class="rl" style="top:143.3px;color:#f3e21a">25 V</div><div class="rl" style="top:166.5px;color:#f3e21a">20 V</div><div class="rl" style="top:189.7px;color:#f3e21a">15 V</div><div class="rl" style="top:212.9px;color:#f3e21a">10 V</div><div class="rl" style="top:236.1px;color:#f3e21a">5 V</div><div class="rl" style="top:259.5px;color:#f3e21a">0 V</div><div class="rl" style="top:307.5px;color:#8fd13a">1 V</div><div class="rl" style="top:330.7px;color:#8fd13a">800 mV</div><div class="rl" style="top:353.9px;color:#8fd13a">600 mV</div><div class="rl" style="top:377.1px;color:#8fd13a">400 mV</div><div class="rl" style="top:400.3px;color:#8fd13a">200 mV</div><div class="rl" style="top:423.5px;color:#8fd13a">0 V</div><div class="rl" style="top:446.7px;color:#8fd13a">-200 mV</div><div class="rl" style="top:469.9px;color:#8fd13a">-400 mV</div><div class="rl" style="top:493.1px;color:#8fd13a">-600 mV</div><div class="rl" style="top:541.7px;color:#f7941d">591.586 mT</div><div class="rl" style="top:564.9px;color:#f7941d">517.638 mT</div><div class="rl" style="top:588.1px;color:#f7941d">443.689 mT</div><div class="rl" style="top:611.3px;color:#f7941d">369.741 mT</div><div class="rl" style="top:634.5px;color:#f7941d">295.793 mT</div><div class="rl" style="top:657.7px;color:#f7941d">221.845 mT</div><div class="rl" style="top:680.9px;color:#f7941d">147.896 mT</div><div class="rl" style="top:704.1px;color:#f7941d">73.948 mT</div><div class="rl" style="top:727.4px;color:#f7941d">0 T</div><div class="rl" style="top:770.7px;color:#74309a">6.682199 kA</div><div class="rl" style="top:794.0px;color:#74309a">5.846924 kA</div><div class="rl" style="top:817.4px;color:#74309a">5.011650 kA</div><div class="rl" style="top:840.8px;color:#74309a">4.176375 kA</div><div class="rl" style="top:864.1px;color:#74309a">3.341100 kA</div><div class="rl" style="top:887.5px;color:#74309a">2.505825 kA</div><div class="rl" style="top:910.8px;color:#74309a">1.670550 kA</div><div class="rl" style="top:934.2px;color:#74309a">835.275 A</div><div class="rl" style="top:957.5px;color:#74309a">0 A</div><div class="tl" style="left:15.5px"><span>0 s</span></div><div class="tl" style="left:190.4px"><span>4 ms</span></div><div class="tl" style="left:365.3px"><span>8 ms</span></div><div class="tl" style="left:540.2px"><span>12 ms</span></div><div class="tl" style="left:715.1px"><span>16 ms</span></div><div class="tl" style="left:889.9px"><span>20 ms</span></div><div class="tl" style="left:1064.8px"><span>24 ms</span></div><div class="tl" style="left:1239.7px"><span>28 ms</span></div><div class="tl" style="left:1414.6px"><span>32 ms</span></div><div class="tl" style="left:1589.5px"><span>36 ms</span></div><svg width="1748" height="935" viewBox="3 58 1748 935" style="position:absolute;left:3px;top:58px"><g fill="none" stroke-width="1" stroke-linejoin="round" shape-rendering="crispEdges"><path stroke="#f7941d" d="M3 734.5L6 734.5L9 734.5L12 734.5L15 734.5L18 734.5L21 734.5L24 734.5L27 734.5L30 735.5L33 735.5L36 735.5L39 735.5L42 735.5L45 735.5L48 735.5L51 735.5L54 735.5L57 734.5L60 734.5L63 734.5L64 731.5L66 731.5L69 730.5L72 729.5L75 728.5L78 728.5L80 727.5L81 727.5L84 726.5L87 726.5L90 725.5L93 724.5L96 723.5L99 723.5L102 722.5L105 721.5L108 721.5L111 720.5L114 719.5L117 718.5L120 718.5L123 717.5L126 716.5L129 715.5L132 715.5L135 714.5L138 713.5L141 713.5L144 712.5L147 711.5L150 710.5L153 710.5L156 709.5L159 708.5L160 708.5L162 707.5L165 707.5L168 706.5L171 705.5L174 704.5L177 703.5L180 703.5L183 702.5L186 701.5L189 700.5L192 699.5L195 698.5L198 698.5L201 697.5L204 696.5L207 695.5L210 694.5L213 694.5L216 693.5L219 692.5L222 691.5L225 691.5L228 690.5L230.6 689.5L231 689.5L234 688.5L237 688.5L240 687.5L243 686.5L246 686.5L249 685.5L252 684.5L255 684.5L258 683.5L261 682.5L264 681.5L267 681.5L270 680.5L273 679.5L276 679.5L279 678.5L282 677.5L285 677.5L288 676.5L291 675.5L294 674.5L297 674.5L300 673.5L303 672.5L306 672.5L309 671.5L312 670.5L315 670.5L318 669.5L321 668.5L324 668.5L327 667.5L330 666.5L333 666.5L336 665.5L339 664.5L342 663.5L345 663.5L348 662.5L351 661.5L354 661.5L357 660.5L360 659.5L363 659.5L366 658.5L369 658.5L372 657.5L375 656.5L378 656.5L381 655.5L384 654.5L387 654.5L390 653.5L393 652.5L396 652.5L399 651.5L402 651.5L405 650.5L408 649.5L411 649.5L414 648.5L417 647.5L420 647.5L423 646.5L426 646.5L429 645.5L432 644.5L435 644.5L438 643.5L441 643.5L444 642.5L447 641.5L450 641.5L453 640.5L456 640.5L459 639.5L462 639.5L465 638.5L468 637.5L471 637.5L474 636.5L477 636.5L480 635.5L483 634.5L486 634.5L489 633.5L492 633.5L495 632.5L498 632.5L501 631.5L504 631.5L507 630.5L510 629.5L513 629.5L516 628.5L519 628.5L522 627.5L525 627.5L528 626.5L531 626.5L534 625.5L537 625.5L540 624.5L543 624.5L546 623.5L549 622.5L552 622.5L555 621.5L558 621.5L561 620.5L564 620.5L567 619.5L570 619.5L573 618.5L576 618.5L579 617.5L580 617.5L582 617.5L585 616.5L588 616.5L591 615.5L594 615.5L597 614.5L600 614.5L603 613.5L606 613.5L609 612.5L612 612.5L615 611.5L618 611.5L621 610.5L624 610.5L627 609.5L630 609.5L633 608.5L636 608.5L639 607.5L642 607.5L645 606.5L648 606.5L651 605.5L654 605.5L657 605.5L660 604.5L663 604.5L666 603.5L669 603.5L672 602.5L675 602.5L678 601.5L681 601.5L684 600.5L687 600.5L690 599.5L693 599.5L696 599.5L699 598.5L702 598.5L705 597.5L708 597.5L711 596.5L714 596.5L717 596.5L720 595.5L723 595.5L726 594.5L729 594.5L732 593.5L735 593.5L738 593.5L741 592.5L744 592.5L747 591.5L750 591.5L753 591.5L755 590.5L756 590.5L759 590.5L762 589.5L765 589.5L768 589.5L771 588.5L774 588.5L777 587.5L780 587.5L783 587.5L786 586.5L789 586.5L792 586.5L795 585.5L798 585.5L801 584.5L804 584.5L807 584.5L810 583.5L813 583.5L816 583.5L819 582.5L822 582.5L825 581.5L828 581.5L831 581.5L834 580.5L837 580.5L840 580.5L843 579.5L846 579.5L849 579.5L852 578.5L855 578.5L858 578.5L861 577.5L864 577.5L867 577.5L870 576.5L873 576.5L876 576.5L879 575.5L882 575.5L885 575.5L888 574.5L891 574.5L894 574.5L897 574.5L900 573.5L903 573.5L906 573.5L909 572.5L912 572.5L915 572.5L918 571.5L921 571.5L924 571.5L927 571.5L930 570.5L933 570.5L936 570.5L939 569.5L942 569.5L945 569.5L948 569.5L951 568.5L954 568.5L957 568.5L960 568.5L963 567.5L966 567.5L969 567.5L972 567.5L975 566.5L978 566.5L981 566.5L984 566.5L987 565.5L990 565.5L993 565.5L996 565.5L999 565.5L1002 564.5L1005 564.5L1008 564.5L1011 564.5L1014 564.5L1017 563.5L1020 563.5L1023 563.5L1026 563.5L1029 562.5L1032 562.5L1035 562.5L1038 562.5L1041 562.5L1044 561.5L1047 561.5L1050 561.5L1053 561.5L1056 561.5L1059 560.5L1062 560.5L1065 560.5L1068 560.5L1071 560.5L1074 559.5L1077 559.5L1080 559.5L1083 559.5L1086 558.5L1089 558.5L1092 558.5L1095 558.5L1098 558.5L1101 557.5L1104 557.5L1106 557.5L1107 557.5L1110 557.5L1113 556.5L1116 556.5L1119 556.5L1120 556.5L1122 556.5L1125 556.5L1128 556.5L1131 555.5L1134 555.5L1137 555.5L1138 555.5L1140 555.5L1143 555.5L1146 555.5L1149 554.5L1152 554.5L1155 554.5L1158 554.5L1160 554.5L1161 554.5L1164 554.5L1167 554.5L1170 554.5L1173 553.5L1176 553.5L1179 553.5L1182 553.5L1183 553.5L1185 553.5L1188 553.5L1191 553.5L1194 553.5L1197 552.5L1200 552.5L1203 552.5L1206 552.5L1209 552.5L1210 552.5L1212 552.5L1215 552.5L1218 552.5L1221 552.5L1224 552.5L1227 551.5L1230 551.5L1233 551.5L1236 551.5L1239 551.5L1242 551.5L1243 551.5L1245 551.5L1248 551.5L1251 551.5L1254 551.5L1257 551.5L1260 551.5L1263 551.5L1266 550.5L1269 550.5L1272 550.5L1275 550.5L1278 550.5L1281 550.5L1284 550.5L1287 550.5L1290 550.5L1293 550.5L1296 550.5L1299 550.5L1302 550.5L1305 550.5L1308 550.5L1311 550.5L1314 550.5L1317 550.5L1320 550.5L1323 550.5L1326 550.5L1329 549.5L1332 549.5L1335 549.5L1338 549.5L1341 549.5L1344 549.5L1347 549.5L1350 549.5L1353 549.5L1356 549.5L1359 549.5L1362 549.5L1365 549.5L1368 549.5L1371 549.5L1374 549.5L1377 549.5L1380 549.5L1383 549.5L1385 549.5L1386 549.5L1389 549.5L1392 549.5L1395 549.5L1398 549.5L1401 549.5L1404 549.5L1407 549.5L1410 549.5L1413 549.5L1416 549.5L1419 549.5L1422 549.5L1425 549.5L1428 549.5L1431 549.5L1434 549.5L1437 549.5L1440 549.5L1443 549.5L1446 549.5L1449 549.5L1450 549.5L1452 549.5L1455 550.5L1458 550.5L1461 550.5L1464 550.5L1467 550.5L1470 550.5L1473 550.5L1476 550.5L1479 550.5L1482 550.5L1485 550.5L1488 550.5L1491 550.5L1494 550.5L1497 550.5L1500 550.5L1503 551.5L1506 551.5L1509 551.5L1512 551.5L1515 551.5L1518 551.5L1521 551.5L1524 551.5L1527 551.5L1530 551.5L1533 551.5L1536 551.5L1539 551.5L1542 551.5L1545 551.5L1548 551.5L1551 552.5L1554 552.5L1557 552.5L1560 552.5L1563 552.5L1566 552.5L1569 552.5L1572 552.5L1575 552.5L1578 552.5L1581 552.5L1584 553.5L1587 553.5L1590 553.5L1593 553.5L1596 553.5L1599 553.5L1600 553.5L1602 553.5L1605 553.5L1608 553.5L1611 553.5L1614 553.5L1617 554.5L1620 554.5L1623 554.5L1626 554.5L1629 554.5L1632 554.5L1635 554.5L1638 554.5L1641 554.5L1644 554.5L1647 554.5L1650 555.5L1653 555.5L1656 555.5L1659 555.5L1662 555.5L1664 555.5L1665 555.5L1668 555.5L1671 555.5L1674 555.5L1677 556.5L1680 556.5L1683 556.5L1686 556.5L1689 556.5L1692 556.5L1695 556.5L1698 557.5L1700 557.5L1701 557.5L1704 557.5L1707 557.5L1710 557.5L1713 558.5L1716 558.5L1719 558.5L1722 558.5L1725 558.5L1728 559.5L1731 559.5L1734 559.5L1737 559.5L1740 560.5L1743 560.5L1746 560.5L1749 560.5L1751 560.5"/><path stroke="#92dc33" d="M3 430.5L4 430.5L5 430.5L6 430.5L7 430.5L8 430.5L9 430.5L10 430.5L11 430.5L12 430.5L13 430.5L14 430.5L15 430.5L16 430.5L17 430.5L18 430.5L19 430.5L20 430.5L21 430.5L22 430.5L23 430.5L24 430.5L25 430.5L26 430.5L27 430.5L28 430.5L29 430.5L30 430.5L31 430.5L32 430.5L33 430.5L34 430.5L35 430.5L36 430.5L37 430.5L38 430.5L39 430.5L40 430.5L41 430.5L42 430.5L43 430.5L44 430.5L45 430.5L46 430.5L47 430.5L48 430.5L49 430.5L50 430.5L51 430.5L52 430.5L53 430.5L54 430.5L55 430.5L56 430.5L57 430.5L58 430.5L59 430.5L60 430.5L61 430.5L62 430.5L63 430.5L64 430.5L65 430.5L66 430.5L67 430.5L68 430.5L69 430.5L70 430.5L71 430.5L72 430.5L73 430.5L74 430.5L75 430.5L76 430.5L77 430.5L78 430.5L79 430.5L80 430.5L81 430.5L82 430.5L83 430.5L84 430.5L85 430.5L86 430.5L87 430.5L88 430.5L89 430.5L90 430.5L91 430.5L92 430.5L93 430.5L94 430.5L95 430.5L96 430.5L97 430.5L98 430.5L99 430.5L100 430.5L101 430.5L102 430.5L103 430.5L104 430.5L105 430.5L106 430.5L107 430.5L108 430.5L109 430.5L110 430.5L111 430.5L112 430.5L113 430.5L114 430.5L115 430.5L116 430.5L117 430.5L118 430.5L119 430.5L120 430.5L121 430.5L122 430.5L123 430.5L124 430.5L125 430.5L126 430.5L127 430.5L128 430.5L129 430.5L130 430.5L131 430.5L132 430.5L133 430.5L134 430.5L135 430.5L136 430.5L137 430.5L138 430.5L139 430.5L140 430.5L141 430.5L142 430.5L143 430.5L144 430.5L145 430.5L146 430.5L147 430.5L148 430.5L149 430.5L150 430.5L151 430.5L152 430.5L153 430.5L154 430.5L155 430.5L156 430.5L157 430.5L158 430.5L159 430.5L160 430.5L161 430.5L162 430.5L163 430.5L164 430.5L165 430.5L166 430.5L167 430.5L168 430.5L169 430.5L170 430.5L171 430.5L172 430.5L173 430.5L174 430.5L175 430.5L176 430.5L177 430.5L178 430.5L179 430.5L180 430.5L181 430.5L182 430.5L183 430.5L184 430.5L185 430.5L186 430.5L187 430.5L188 430.5L189 430.5L190 430.5L191 430.5L192 430.5L193 430.5L194 430.5L195 430.5L196 430.5L197 430.5L198 430.5L199 430.5L200 430.5L201 430.5L202 430.5L203 430.5L204 430.5L205 430.5L206 430.5L207 430.5L208 430.5L209 430.5L210 430.5L211 430.5L212 430.5L213 429.5L214 429.5L215 429.5L216 429.5L217 429.5L218 428.5L219 428.5L220 428.5L221 428.5L222 428.5L223 427.5L224 427.5L225 427.5L226 426.5L227 426.5L228 426.5L229 425.5L230 425.5L231 425.5L232 424.5L233 424.5L234 423.5L235 423.5L236 422.5L237 421.5L238 421.5L239 421.5L240 420.5L241 419.5L242 419.5L243 418.5L244 418.5L245 417.5L246 417.5L247 416.5L248 415.5L249 415.5L250 414.5L251 414.5L252 413.5L253 412.5L254 412.5L255 411.5L256 410.5L257 409.5L258 409.5L259 408.5L260 408.5L261 407.5L262 406.5L263 406.5L264 405.5L265 404.5L266 403.5L267 403.5L268 402.5L269 401.5L270 401.5L271 400.5L272 400.5L273 399.5L274 399.5L275 398.5L276 398.5L277 397.5L278 397.5L279 396.5L280 396.5L281 395.5L282 395.5L283 395.5L284 394.5L285 394.5L286 393.5L287 393.5L288 393.5L289 392.5L290 392.5L291 392.5L292 392.5L293 392.5L294 391.5L295 391.5L296 391.5L297 391.5L298 391.5L299 391.5L300 390.5L301 390.5L302 390.5L303 390.5L304 390.5L305 390.5L306 390.5L307 390.5L308 390.5L309 390.5L310 390.5L311 390.5L312 390.5L313 390.5L314 390.5L315 390.5L316 390.5L317 390.5L318 390.5L319 390.5L320 390.5L321 390.5L322 390.5L323 390.5L324 390.5L325 390.5L326 390.5L327 390.5L328 390.5L329 390.5L330 390.5L331 390.5L332 390.5L333 390.5L334 390.5L335 390.5L336 390.5L337 390.5L338 390.5L339 390.5L340 390.5L341 390.5L342 390.5L343 390.5L344 390.5L345 390.5L346 390.5L347 390.5L348 390.5L349 390.5L350 390.5L351 390.5L352 390.5L353 390.5L354 390.5L355 390.5L356 390.5L357 390.5L358 390.5L359 390.5L360 390.5L361 390.5L362 390.5L363 390.5L364 390.5L365 390.5L366 390.5L367 390.5L368 390.5L369 390.5L370 390.5L371 390.5L372 390.5L373 390.5L374 390.5L375 390.5L376 390.5L377 390.5L378 390.5L379 390.5L380 390.5L381 390.5L382 390.5L383 390.5L384 390.5L385 390.5L386 390.5L387 390.5L388 390.5L389 390.5L390 390.5L391 390.5L392 390.5L393 390.5L394 390.5L395 390.5L396 390.5L397 390.5L398 390.5L399 390.5L400 390.5L401 390.5L402 390.5L403 390.5L404 390.5L405 390.5L406 391.5L407 391.5L408 391.5L409 391.5L410 391.5L411 391.5L412 391.5L413 391.5L414 391.5L415 391.5L416 391.5L417 391.5L418 391.5L419 391.5L420 391.5L421 391.5L422 391.5L423 391.5L424 391.5L425 391.5L426 391.5L427 391.5L428 391.5L429 391.5L430 392.5L431 391.5L432 391.5L433 391.5L434 391.5L435 392.5L436 391.5L437 391.5L438 392.5L439 392.5L440 392.5L441 392.5L442 391.5L443 391.5L444 391.5L445 392.5L446 392.5L447 392.5L448 392.5L449 392.5L450 392.5L451 392.5L452 392.5L453 392.5L454 392.5L455 392.5L456 392.5L457 392.5L458 392.5L459 392.5L460 392.5L461 392.5L462 392.5L463 392.5L464 392.5L465 392.5L466 392.5L467 392.5L468 392.5L469 392.5L470 392.5L471 392.5L472 392.5L473 392.5L474 392.5L475 392.5L476 392.5L477 392.5L478 392.5L479 392.5L480 392.5L481 392.5L482 392.5L483 392.5L484 392.5L485 392.5L486 392.5L487 392.5L488 392.5L489 392.5L490 392.5L491 392.5L492 392.5L493 392.5L494 392.5L495 392.5L496 392.5L497 392.5L498 393.5L499 392.5L500 392.5L501 392.5L502 393.5L503 393.5L504 393.5L505 392.5L506 392.5L507 392.5L508 392.5L509 393.5L510 392.5L511 392.5L512 393.5L513 392.5L514 393.5L515 392.5L516 392.5L517 393.5L518 393.5L519 392.5L520 393.5L521 392.5L522 393.5L523 392.5L524 393.5L525 393.5L526 393.5L527 393.5L528 393.5L529 393.5L530 393.5L531 393.5L532 393.5L533 393.5L534 393.5L535 393.5L536 393.5L537 393.5L538 393.5L539 393.5L540 393.5L541 393.5L542 393.5L543 393.5L544 393.5L545 393.5L546 393.5L547 393.5L548 393.5L549 393.5L550 393.5L551 393.5L552 393.5L553 393.5L554 393.5L555 393.5L556 393.5L557 393.5L558 393.5L559 393.5L560 393.5L561 393.5L562 393.5L563 393.5L564 393.5L565 393.5L566 393.5L567 393.5L568 393.5L569 393.5L570 393.5L571 393.5L572 393.5L573 393.5L574 393.5L575 392.5L576 392.5L577 392.5L578 392.5L579 392.5L580 392.5L581 392.5L582 392.5L583 393.5L584 393.5L585 393.5L586 393.5L587 393.5L588 393.5L589 393.5L590 393.5L591 393.5L592 393.5L593 393.5L594 393.5L595 393.5L596 394.5L597 394.5L598 394.5L599 394.5L600 394.5L601 394.5L602 394.5L603 394.5L604 394.5L605 394.5L606 394.5L607 394.5L608 394.5L609 394.5L610 394.5L611 394.5L612 394.5L613 394.5L614 394.5L615 394.5L616 395.5L617 395.5L618 395.5L619 395.5L620 395.5L621 395.5L622 395.5L623 395.5L624 395.5L625 395.5L626 395.5L627 395.5L628 395.5L629 395.5L630 395.5L631 395.5L632 394.5L633 394.5L634 394.5L635 394.5L636 394.5L637 394.5L638 394.5L639 394.5L640 394.5L641 394.5L642 394.5L643 394.5L644 395.5L645 395.5L646 395.5L647 395.5L648 395.5L649 395.5L650 396.5L651 396.5L652 396.5L653 396.5L654 396.5L655 396.5L656 396.5L657 396.5L658 396.5L659 396.5L660 396.5L661 396.5L662 396.5L663 396.5L664 396.5L665 396.5L666 396.5L667 396.5L668 397.5L669 397.5L670 396.5L671 396.5L672 396.5L673 396.5L674 397.5L675 396.5L676 397.5L677 397.5L678 397.5L679 397.5L680 397.5L681 397.5L682 397.5L683 397.5L684 397.5L685 398.5L686 398.5L687 398.5L688 398.5L689 399.5L690 399.5L691 399.5L692 400.5L693 400.5L694 400.5L695 400.5L696 400.5L697 400.5L698 400.5L699 400.5L700 400.5L701 400.5L702 400.5L703 400.5L704 400.5L705 400.5L706 400.5L707 400.5L708 401.5L709 401.5L710 401.5L711 401.5L712 401.5L713 401.5L714 401.5L715 401.5L716 401.5L717 401.5L718 401.5L719 401.5L720 401.5L721 402.5L722 402.5L723 402.5L724 402.5L725 402.5L726 402.5L727 402.5L728 402.5L729 402.5L730 402.5L731 402.5L732 402.5L733 402.5L734 402.5L735 402.5L736 402.5L737 401.5L738 401.5L739 401.5L740 401.5L741 401.5L742 401.5L743 401.5L744 401.5L745 401.5L746 401.5L747 401.5L748 401.5L749 401.5L750 401.5L751 401.5L752 401.5L753 401.5L754 401.5L755 401.5L756 401.5L757 402.5L758 402.5L759 402.5L760 402.5L761 402.5L762 402.5L763 402.5L764 403.5L765 403.5L766 403.5L767 403.5L768 404.5L769 404.5L770 404.5L771 404.5L772 403.5L773 404.5L774 403.5L775 403.5L776 403.5L777 403.5L778 404.5L779 404.5L780 404.5L781 404.5L782 404.5L783 404.5L784 404.5L785 404.5L786 404.5L787 404.5L788 404.5L789 404.5L790 404.5L791 404.5L792 404.5L793 404.5L794 404.5L795 404.5L796 404.5L797 404.5L798 404.5L799 404.5L800 404.5L801 404.5L802 405.5L803 405.5L804 405.5L805 405.5L806 405.5L807 405.5L808 405.5L809 405.5L810 405.5L811 405.5L812 405.5L813 405.5L814 405.5L815 405.5L816 405.5L817 405.5L818 405.5L819 405.5L820 405.5L821 405.5L822 405.5L823 405.5L824 405.5L825 405.5L826 405.5L827 405.5L828 405.5L829 405.5L830 405.5L831 405.5L832 405.5L833 405.5L834 405.5L835 405.5L836 405.5L837 405.5L838 405.5L839 405.5L840 405.5L841 405.5L842 405.5L843 405.5L844 405.5L845 405.5L846 405.5L847 405.5L848 405.5L849 405.5L850 405.5L851 405.5L852 405.5L853 405.5L854 405.5L855 405.5L856 405.5L857 404.5L858 404.5L859 404.5L860 404.5L861 404.5L862 404.5L863 404.5L864 403.5L865 403.5L866 403.5L867 403.5L868 403.5L869 403.5L870 403.5L871 403.5L872 403.5L873 403.5L874 403.5L875 403.5L876 403.5L877 403.5L878 403.5L879 403.5L880 403.5L881 403.5L882 403.5L883 403.5L884 403.5L885 403.5L886 403.5L887 403.5L888 403.5L889 403.5L890 403.5L891 403.5L892 403.5L893 403.5L894 403.5L895 403.5L896 403.5L897 403.5L898 403.5L899 403.5L900 403.5L901 403.5L902 402.5L903 402.5L904 402.5L905 402.5L906 402.5L907 402.5L908 402.5L909 402.5L910 402.5L911 402.5L912 402.5L913 402.5L914 402.5L915 402.5L916 402.5L917 402.5L918 402.5L919 402.5L920 402.5L921 402.5L922 402.5L923 402.5L924 402.5L925 402.5L926 402.5L927 403.5L928 403.5L929 403.5L930 403.5L931 403.5L932 403.5L933 403.5L934 403.5L935 403.5L936 403.5L937 403.5L938 403.5L939 403.5L940 403.5L941 403.5L942 403.5L943 403.5L944 402.5L945 402.5L946 402.5L947 402.5L948 402.5L949 402.5L950 402.5L951 402.5L952 402.5L953 402.5L954 402.5L955 402.5L956 402.5L957 402.5L958 402.5L959 402.5L960 402.5L961 402.5L962 402.5L963 402.5L964 402.5L965 402.5L966 402.5L967 402.5L968 402.5L969 402.5L970 402.5L971 402.5L972 402.5L973 402.5L974 402.5L975 402.5L976 402.5L977 402.5L978 402.5L979 402.5L980 402.5L981 402.5L982 402.5L983 402.5L984 402.5L985 402.5L986 403.5L987 403.5L988 403.5L989 403.5L990 403.5L991 403.5L992 403.5L993 403.5L994 403.5L995 403.5L996 403.5L997 404.5L998 404.5L999 404.5L1000 404.5L1001 404.5L1002 404.5L1003 403.5L1004 403.5L1005 403.5L1006 403.5L1007 403.5L1008 402.5L1009 402.5L1010 402.5L1011 402.5L1012 402.5L1013 402.5L1014 402.5L1015 402.5L1016 401.5L1017 401.5L1018 401.5L1019 401.5L1020 401.5L1021 401.5L1022 401.5L1023 400.5L1024 400.5L1025 400.5L1026 400.5L1027 400.5L1028 400.5L1029 399.5L1030 399.5L1031 400.5L1032 400.5L1033 400.5L1034 400.5L1035 400.5L1036 400.5L1037 400.5L1038 400.5L1039 400.5L1040 401.5L1041 401.5L1042 400.5L1043 400.5L1044 400.5L1045 400.5L1046 400.5L1047 400.5L1048 400.5L1049 400.5L1050 400.5L1051 400.5L1052 400.5L1053 400.5L1054 400.5L1055 400.5L1056 400.5L1057 400.5L1058 400.5L1059 400.5L1060 400.5L1061 400.5L1062 400.5L1063 400.5L1064 400.5L1065 399.5L1066 399.5L1067 399.5L1068 399.5L1069 399.5L1070 399.5L1071 399.5L1072 399.5L1073 399.5L1074 399.5L1075 399.5L1076 399.5L1077 399.5L1078 399.5L1079 398.5L1080 398.5L1081 398.5L1082 398.5L1083 398.5L1084 398.5L1085 398.5L1086 398.5L1087 399.5L1088 399.5L1089 399.5L1090 400.5L1091 400.5L1092 400.5L1093 400.5L1094 399.5L1095 399.5L1096 399.5L1097 399.5L1098 399.5L1099 399.5L1100 399.5L1101 399.5L1102 399.5L1103 399.5L1104 400.5L1105 400.5L1106 400.5L1107 400.5L1108 400.5L1109 400.5L1110 399.5L1111 399.5L1112 399.5L1113 399.5L1114 399.5L1115 399.5L1116 399.5L1117 399.5L1118 399.5L1119 399.5L1119.4 399.5L1119.6 392.5L1120 388.5L1120.6 382.5L1121 380.5L1121.5 378.5L1122 378.5L1123 379.5L1124 380.5L1125 381.5L1126 382.5L1126.7 383.5L1127 383.5L1128 383.5L1129 384.5L1130 384.5L1131 385.5L1132 386.5L1133 386.5L1134 387.5L1135 388.5L1136 388.5L1137 389.5L1138 390.5L1139 390.5L1140 391.5L1141 392.5L1142 393.5L1143 394.5L1144 395.5L1145 396.5L1146 397.5L1147 398.5L1148 399.5L1149 400.5L1150 401.5L1151 402.5L1152 403.5L1153 404.5L1154 405.5L1155 406.5L1156 406.5L1157 407.5L1158 408.5L1159 409.5L1160 409.5L1161 410.5L1162 411.5L1163 411.5L1164 412.5L1165 413.5L1166 413.5L1167 414.5L1168 414.5L1169 415.5L1170 415.5L1171 416.5L1172 416.5L1173 417.5L1174 417.5L1175 417.5L1176 418.5L1177 418.5L1178 418.5L1179 419.5L1180 419.5L1181 419.5L1182 420.5L1183 420.5L1184 420.5L1185 421.5L1186 421.5L1187 421.5L1188 421.5L1189 422.5L1190 422.5L1191 422.5L1192 422.5L1193 423.5L1194 423.5L1195 423.5L1196 423.5L1197 423.5L1198 424.5L1199 424.5L1200 424.5L1201 424.5L1202 424.5L1203 425.5L1204 425.5L1205 425.5L1206 425.5L1207 425.5L1208 425.5L1209 425.5L1210 426.5L1211 426.5L1212 426.5L1213 426.5L1214 426.5L1215 426.5L1216 426.5L1217 426.5L1218 426.5L1219 426.5L1220 426.5L1221 426.5L1222 427.5L1223 427.5L1224 427.5L1225 427.5L1226 427.5L1227 427.5L1228 427.5L1229 427.5L1230 427.5L1231 427.5L1232 427.5L1233 428.5L1234 428.5L1235 428.5L1236 428.5L1237 428.5L1238 428.5L1239 428.5L1240 428.5L1241 428.5L1242 428.5L1243 428.5L1244 428.5L1245 429.5L1246 429.5L1247 429.5L1248 429.5L1249 429.5L1250 429.5L1251 429.5L1252 429.5L1253 429.5L1254 429.5L1255 429.5L1256 429.5L1257 429.5L1258 429.5L1259 429.5L1260 429.5L1261 429.5L1262 429.5L1263 429.5L1264 429.5L1265 429.5L1266 429.5L1267 429.5L1268 429.5L1269 429.5L1270 429.5L1271 429.5L1272 429.5L1273 429.5L1274 429.5L1275 429.5L1276 429.5L1277 429.5L1278 429.5L1279 429.5L1280 429.5L1281 429.5L1282 429.5L1283 429.5L1284 429.5L1285 429.5L1286 429.5L1287 429.5L1288 429.5L1289 429.5L1290 429.5L1291 429.5L1292 429.5L1293 429.5L1294 429.5L1295 429.5L1296 429.5L1297 429.5L1298 429.5L1299 429.5L1300 429.5L1301 429.5L1302 429.5L1303 429.5L1304 429.5L1305 429.5L1306 429.5L1307 429.5L1308 429.5L1309 429.5L1310 429.5L1311 429.5L1312 429.5L1313 429.5L1314 429.5L1315 429.5L1316 429.5L1317 429.5L1318 429.5L1319 429.5L1320 429.5L1321 429.5L1322 429.5L1323 429.5L1324 429.5L1325 429.5L1326 429.5L1327 429.5L1328 429.5L1329 429.5L1330 429.5L1331 429.5L1332 429.5L1333 429.5L1334 429.5L1335 429.5L1336 429.5L1337 429.5L1338 429.5L1339 429.5L1340 429.5L1341 429.5L1342 429.5L1343 429.5L1344 429.5L1345 429.5L1346 429.5L1347 429.5L1348 429.5L1349 429.5L1350 429.5L1351 429.5L1352 429.5L1353 429.5L1354 429.5L1355 429.5L1356 429.5L1357 429.5L1358 429.5L1359 429.5L1360 429.5L1361 429.5L1362 429.5L1363 429.5L1364 429.5L1365 429.5L1366 429.5L1367 429.5L1368 429.5L1369 429.5L1370 429.5L1371 429.5L1372 429.5L1373 429.5L1374 429.5L1375 429.5L1376 429.5L1377 429.5L1378 429.5L1379 429.5L1380 429.5L1381 429.5L1382 429.5L1383 429.5L1384 429.5L1385 429.5L1386 429.5L1387 429.5L1388 429.5L1389 429.5L1390 429.5L1391 429.5L1392 429.5L1393 429.5L1394 429.5L1395 429.5L1396 429.5L1397 429.5L1398 429.5L1399 429.5L1400 429.5L1401 429.5L1402 429.5L1403 429.5L1404 429.5L1405 429.5L1406 429.5L1407 429.5L1408 429.5L1409 429.5L1410 429.5L1411 429.5L1412 429.5L1413 429.5L1414 429.5L1415 429.5L1416 429.5L1417 429.5L1418 429.5L1419 429.5L1420 429.5L1421 429.5L1422 429.5L1423 429.5L1424 429.5L1425 429.5L1426 429.5L1427 429.5L1428 429.5L1429 429.5L1430 429.5L1431 429.5L1432 429.5L1433 429.5L1434 429.5L1435 429.5L1436 429.5L1437 429.5L1438 429.5L1439 429.5L1440 429.5L1441 429.5L1442 429.5L1443 429.5L1444 429.5L1445 429.5L1446 429.5L1447 429.5L1448 429.5L1449 429.5L1450 429.5L1451 429.5L1452 429.5L1453 429.5L1454 429.5L1455 429.5L1456 429.5L1457 429.5L1458 429.5L1459 429.5L1460 429.5L1461 429.5L1462 429.5L1463 429.5L1464 429.5L1465 429.5L1466 429.5L1467 429.5L1468 429.5L1469 429.5L1470 429.5L1471 429.5L1472 429.5L1473 429.5L1474 429.5L1475 429.5L1476 429.5L1477 429.5L1478 429.5L1479 429.5L1480 429.5L1481 429.5L1482 429.5L1483 429.5L1484 429.5L1485 429.5L1486 429.5L1487 429.5L1488 429.5L1489 429.5L1490 429.5L1491 429.5L1492 429.5L1493 429.5L1494 429.5L1495 429.5L1496 429.5L1497 429.5L1498 429.5L1499 429.5L1500 429.5L1501 429.5L1502 429.5L1503 429.5L1504 429.5L1505 429.5L1506 429.5L1507 429.5L1508 429.5L1509 429.5L1510 429.5L1511 429.5L1512 429.5L1513 429.5L1514 429.5L1515 429.5L1516 429.5L1517 429.5L1518 429.5L1519 429.5L1520 429.5L1521 429.5L1522 429.5L1523 429.5L1524 429.5L1525 429.5L1526 429.5L1527 429.5L1528 429.5L1529 429.5L1530 429.5L1531 429.5L1532 429.5L1533 429.5L1534 429.5L1535 429.5L1536 429.5L1537 429.5L1538 429.5L1539 429.5L1540 429.5L1541 429.5L1542 429.5L1543 429.5L1544 429.5L1545 429.5L1546 430.5L1547 429.5L1548 429.5L1549 429.5L1550 429.5L1551 429.5L1552 429.5L1553 429.5L1554 429.5L1555 429.5L1556 429.5L1557 430.5L1558 430.5L1559 429.5L1560 429.5L1561 429.5L1562 429.5L1563 429.5L1564 430.5L1565 429.5L1566 429.5L1567 429.5L1568 429.5L1569 429.5L1570 430.5L1571 429.5L1572 429.5L1573 430.5L1574 430.5L1575 430.5L1576 430.5L1577 430.5L1578 429.5L1579 429.5L1580 430.5L1581 430.5L1582 430.5L1583 430.5L1584 429.5L1585 429.5L1586 429.5L1587 430.5L1588 430.5L1589 429.5L1590 430.5L1591 429.5L1592 429.5L1593 429.5L1594 429.5L1595 430.5L1596 429.5L1597 430.5L1598 429.5L1599 429.5L1600 429.5L1601 429.5L1602 429.5L1603 430.5L1604 429.5L1605 429.5L1606 430.5L1607 430.5L1608 430.5L1609 430.5L1610 430.5L1611 430.5L1612 430.5L1613 429.5L1614 429.5L1615 429.5L1616 429.5L1617 429.5L1618 429.5L1619 430.5L1620 430.5L1621 429.5L1622 429.5L1623 430.5L1624 430.5L1625 430.5L1626 429.5L1627 430.5L1628 430.5L1629 430.5L1630 430.5L1631 430.5L1632 429.5L1633 430.5L1634 429.5L1635 430.5L1636 430.5L1637 430.5L1638 430.5L1639 430.5L1640 430.5L1641 430.5L1642 430.5L1643 429.5L1644 429.5L1645 429.5L1646 430.5L1647 430.5L1648 430.5L1649 430.5L1650 430.5L1651 430.5L1652 430.5L1653 430.5L1654 430.5L1655 429.5L1656 430.5L1657 429.5L1658 430.5L1659 430.5L1660 430.5L1661 430.5L1662 430.5L1663 430.5L1664 430.5L1665 430.5L1666 430.5L1667 430.5L1668 430.5L1669 430.5L1670 430.5L1671 430.5L1672 429.5L1673 430.5L1674 430.5L1675 430.5L1676 430.5L1677 430.5L1678 430.5L1679 430.5L1680 430.5L1681 430.5L1682 430.5L1683 430.5L1684 430.5L1685 430.5L1686 430.5L1687 430.5L1688 430.5L1689 430.5L1690 430.5L1691 430.5L1692 430.5L1693 430.5L1694 430.5L1695 430.5L1696 430.5L1697 430.5L1698 430.5L1699 430.5L1700 430.5L1701 430.5L1702 430.5L1703 430.5L1704 430.5L1705 430.5L1706 430.5L1707 430.5L1708 430.5L1709 430.5L1710 430.5L1711 430.5L1712 430.5L1713 430.5L1714 430.5L1715 430.5L1716 430.5L1717 430.5L1718 430.5L1719 430.5L1720 430.5L1721 430.5L1722 430.5L1723 430.5L1724 430.5L1725 430.5L1726 430.5L1727 430.5L1728 430.5L1729 430.5L1730 430.5L1731 430.5L1732 430.5L1733 430.5L1734 430.5L1735 430.5L1736 430.5L1737 430.5L1738 430.5L1739 430.5L1740 430.5L1741 430.5L1742 430.5L1743 430.5L1744 430.5L1745 430.5L1746 430.5L1747 430.5L1748 430.5L1749 430.5L1750 430.5L1751 430.5"/><path stroke="#6d2a87" d="M3 964.5L4 964.5L5 964.5L6 964.5L7 964.5L8 964.5L9 964.5L10 964.5L11 964.5L12 964.5L13 964.5L14 964.5L15 964.5L16 964.5L17 964.5L18 964.5L19 964.5L20 964.5L21 964.5L22 964.5L23 964.5L24 964.5L25 964.5L26 964.5L27 964.5L28 964.5L29 964.5L30 964.5L31 964.5L32 964.5L33 964.5L34 964.5L35 964.5L36 964.5L37 964.5L38 964.5L39 964.5L40 964.5L41 964.5L42 964.5L43 964.5L44 964.5L45 964.5L46 964.5L47 964.5L48 964.5L49 964.5L50 964.5L51 964.5L52 964.5L53 964.5L54 964.5L55 964.5L56 964.5L57 964.5L58 964.5L59 964.5L60 964.5L61 965.5L62 964.5L63 965.5L64 965.5L65 965.5L66 965.5L67 965.5L68 965.5L69 965.5L70 965.5L71 965.5L72 965.5L73 965.5L74 965.5L75 965.5L76 965.5L77 965.5L78 965.5L79 965.5L80 965.5L81 965.5L82 966.5L83 966.5L84 966.5L85 965.5L86 966.5L87 965.5L88 965.5L89 965.5L90 966.5L91 965.5L92 966.5L93 966.5L94 965.5L95 965.5L96 965.5L97 965.5L98 965.5L99 965.5L100 966.5L101 965.5L102 965.5L103 966.5L104 965.5L105 965.5L106 965.5L107 965.5L108 966.5L109 965.5L110 965.5L111 965.5L112 965.5L113 965.5L114 965.5L115 965.5L116 965.5L117 965.5L118 966.5L119 965.5L120 966.5L121 965.5L122 965.5L123 965.5L124 965.5L125 965.5L126 965.5L127 966.5L128 966.5L129 966.5L130 965.5L131 965.5L132 965.5L133 965.5L134 965.5L135 965.5L136 965.5L137 965.5L138 965.5L139 966.5L140 965.5L141 965.5L142 965.5L143 965.5L144 965.5L145 965.5L146 965.5L147 965.5L148 965.5L149 965.5L150 965.5L151 965.5L152 965.5L153 965.5L154 965.5L155 965.5L156 965.5L157 965.5L158 965.5L159 965.5L160 965.5L161 965.5L162 965.5L163 964.5L164 965.5L165 965.5L166 965.5L167 965.5L168 965.5L169 965.5L170 965.5L171 965.5L172 965.5L173 965.5L174 965.5L175 965.5L176 965.5L177 965.5L178 965.5L179 965.5L180 965.5L181 965.5L182 965.5L183 964.5L184 965.5L185 965.5L186 965.5L187 965.5L188 965.5L189 965.5L190 964.5L191 965.5L192 964.5L193 965.5L194 964.5L195 964.5L196 965.5L197 964.5L198 965.5L199 964.5L200 964.5L201 964.5L202 964.5L203 964.5L204 964.5L205 964.5L206 964.5L207 964.5L208 964.5L209 964.5L210 964.5L211 964.5L212 964.5L213 964.5L214 963.5L215 963.5L216 962.5L217 962.5L218 962.5L219 961.5L220 961.5L221 960.5L222 960.5L223 959.5L224 959.5L225 958.5L226 958.5L227 957.5L228 957.5L229 956.5L230 956.5L230.4 956.5L231 955.5L232 955.5L233 955.5L234 955.5L235 954.5L236 954.5L237 953.5L238 953.5L239 952.5L240 952.5L241 951.5L242 951.5L243 951.5L244 950.5L245 950.5L246 950.5L247 949.5L248 948.5L249 948.5L250 948.5L251 947.5L252 947.5L253 947.5L254 946.5L255 946.5L256 945.5L257 945.5L258 945.5L259 944.5L260 944.5L261 944.5L262 943.5L263 942.5L264 942.5L265 942.5L266 941.5L267 941.5L268 941.5L269 940.5L270 940.5L271 939.5L272 939.5L273 939.5L274 939.5L275 938.5L276 938.5L277 938.5L278 937.5L279 937.5L280 937.5L281 937.5L282 937.5L283 936.5L284 936.5L285 935.5L286 936.5L287 935.5L288 935.5L289 935.5L290 935.5L291 935.5L292 935.5L293 934.5L294 934.5L295 934.5L296 934.5L297 933.5L298 933.5L299 933.5L300 933.5L301 932.5L302 933.5L303 932.5L304 932.5L305 931.5L306 931.5L307 932.5L308 932.5L309 931.5L310 930.5L311 931.5L312 930.5L313 930.5L314 930.5L315 930.5L316 930.5L317 930.5L318 929.5L319 929.5L320 929.5L321 928.5L322 926.5L323 926.5L324 925.5L325 925.5L326 925.5L327 925.5L328 925.5L329 925.5L330 925.5L331 924.5L332 924.5L333 923.5L334 923.5L335 923.5L336 922.5L337 922.5L338 922.5L339 921.5L340 921.5L341 921.5L342 921.5L343 920.5L344 920.5L345 920.5L346 920.5L347 920.5L348 919.5L349 918.5L350 918.5L351 918.5L352 918.5L353 918.5L354 917.5L355 916.5L356 916.5L357 916.5L358 916.5L359 916.5L360 915.5L361 915.5L362 915.5L363 914.5L364 914.5L365 914.5L366 913.5L367 913.5L368 913.5L369 913.5L370 913.5L371 912.5L372 912.5L373 913.5L374 914.5L375 915.5L376 915.5L377 915.5L378 914.5L379 914.5L380 913.5L381 913.5L382 912.5L383 912.5L384 911.5L385 911.5L386 910.5L387 910.5L388 909.5L389 910.5L390 909.5L391 909.5L392 908.5L393 908.5L394 908.5L395 908.5L396 908.5L397 908.5L398 907.5L399 907.5L400 907.5L401 906.5L402 906.5L403 906.5L404 906.5L405 906.5L406 905.5L407 906.5L408 905.5L409 905.5L410 904.5L411 904.5L412 904.5L413 904.5L414 903.5L415 903.5L416 903.5L417 903.5L418 903.5L419 902.5L420 902.5L421 902.5L422 901.5L423 901.5L424 901.5L425 901.5L426 900.5L427 900.5L428 900.5L429 900.5L430 900.5L431 899.5L432 900.5L433 899.5L434 899.5L435 899.5L436 898.5L437 898.5L438 897.5L439 897.5L440 897.5L441 896.5L441.7 897.5L442 897.5L443 897.5L444 896.5L445 896.5L446 896.5L447 896.5L448 895.5L449 895.5L450 894.5L451 894.5L452 894.5L453 894.5L454 893.5L455 894.5L456 893.5L457 893.5L458 892.5L459 892.5L460 892.5L461 891.5L462 891.5L462.5 891.5L463 891.5L464 891.5L465 891.5L466 890.5L467 890.5L468 890.5L469 890.5L470 889.5L471 889.5L472 888.5L473 888.5L474 888.5L475 887.5L476 886.5L477 886.5L478 886.5L479 885.5L480 885.5L481 886.5L482 885.5L483 885.5L484 885.5L485 884.5L486 884.5L487 884.5L488 883.5L489 883.5L490 883.5L491 883.5L492 883.5L493 882.5L494 882.5L495 881.5L496 881.5L497 881.5L498 881.5L499 880.5L500 880.5L501 881.5L502 880.5L503 880.5L504 879.5L505 879.5L506 879.5L507 879.5L508 879.5L509 878.5L510 878.5L511 878.5L512 878.5L513 877.5L514 877.5L515 877.5L516 877.5L517 877.5L518 876.5L519 877.5L520 876.5L521 876.5L522 876.5L523 875.5L524 875.5L525 875.5L526 874.5L527 874.5L528 874.5L529 875.5L530 875.5L531 875.5L532 875.5L533 875.5L534 875.5L535 874.5L536 874.5L537 873.5L538 873.5L539 873.5L540 872.5L541 873.5L541.5 874.5L542 874.5L543 874.5L544 874.5L545 874.5L546 874.5L547 874.5L548 874.5L549 874.5L550 874.5L551 870.5L552 870.5L553 870.5L554 870.5L555 870.5L556 870.5L557 870.5L558 870.5L559 869.5L560 869.5L561 869.5L562 869.5L563 869.5L564 869.5L565 869.5L566 869.5L567 869.5L568 869.5L569 869.5L570 869.5L571 868.5L572 868.5L573 868.5L574 868.5L575 868.5L576 868.5L577 867.5L578 868.5L579 867.5L580 867.5L581 866.5L582 865.5L583 864.5L584 864.5L585 864.5L586 864.5L587 864.5L588 864.5L589 863.5L590 863.5L591 863.5L592 863.5L593 863.5L594 863.5L595 863.5L596 862.5L597 862.5L598 862.5L599 862.5L600 861.5L601 862.5L602 862.5L603 862.5L604 861.5L605 861.5L606 861.5L607 861.5L608 861.5L609 861.5L610 861.5L611 861.5L612 861.5L613 861.5L614 861.5L615 860.5L616 860.5L617 860.5L618 861.5L619 860.5L620 860.5L621 860.5L622 859.5L623 860.5L624 859.5L625 859.5L626 859.5L627 858.5L628 858.5L629 858.5L630 858.5L631 858.5L632 858.5L633 859.5L634 859.5L635 859.5L636 859.5L637 858.5L638 857.5L639 856.5L640 855.5L641 855.5L642 854.5L643 854.5L644 854.5L645 854.5L646 853.5L647 854.5L648 854.5L649 853.5L650 853.5L651 853.5L652 853.5L653 854.5L654 853.5L655 853.5L656 853.5L657 853.5L658 853.5L659 853.5L660 853.5L661 852.5L662 852.5L663 852.5L664 852.5L665 851.5L666 851.5L667 851.5L668 851.5L669 851.5L670 851.5L671 851.5L672 851.5L673 851.5L674 851.5L675 851.5L676 851.5L677 850.5L678 850.5L679 850.5L680 850.5L681 849.5L682 849.5L683 849.5L684 849.5L685 848.5L686 848.5L687 847.5L688 847.5L689 848.5L690 848.5L691 847.5L692 847.5L693 847.5L694 846.5L695 846.5L696 846.5L697 846.5L698 846.5L699 846.5L700 846.5L701 845.5L702 845.5L703 845.5L704 845.5L705 844.5L706 844.5L707 844.5L708 844.5L709 844.5L710 843.5L711 843.5L712 842.5L713 842.5L714 842.5L715 842.5L716 842.5L717 842.5L718 842.5L719 841.5L720 841.5L721 841.5L722 841.5L723 840.5L724 840.5L725 840.5L726 839.5L727 839.5L728 838.5L729 838.5L730 838.5L731 837.5L732 837.5L733 837.5L734 836.5L735 835.5L736 835.5L737 835.5L738 835.5L739 835.5L740 835.5L741 835.5L742 835.5L743 836.5L744 835.5L745 835.5L746 835.5L747 835.5L748 835.5L749 834.5L750 834.5L751 835.5L752 835.5L753 834.5L754 833.5L755 832.5L756 832.5L757 831.5L758 830.5L759 829.5L760 828.5L761 828.5L762 828.5L763 828.5L764 828.5L765 828.5L766 828.5L767 827.5L768 827.5L769 827.5L770 826.5L771 826.5L772 825.5L773 825.5L774 825.5L775 824.5L776 825.5L777 824.5L778 824.5L779 824.5L780 824.5L781 824.5L782 823.5L783 823.5L784 823.5L785 823.5L786 823.5L787 822.5L788 821.5L789 821.5L790 821.5L791 821.5L792 821.5L793 821.5L794 821.5L795 820.5L796 820.5L797 820.5L798 819.5L799 819.5L800 819.5L801 819.5L802 818.5L803 818.5L804 818.5L805 818.5L806 817.5L807 818.5L808 818.5L809 819.5L810 819.5L811 819.5L812 818.5L813 818.5L814 817.5L815 817.5L816 817.5L817 817.5L818 817.5L819 817.5L820 817.5L821 816.5L822 816.5L823 816.5L824 816.5L825 815.5L826 815.5L827 815.5L828 815.5L829 814.5L830 814.5L831 814.5L832 814.5L833 814.5L834 814.5L835 813.5L836 814.5L837 813.5L838 813.5L839 813.5L840 812.5L841 813.5L842 812.5L843 812.5L844 812.5L845 812.5L846 811.5L847 811.5L848 811.5L849 811.5L850 811.5L851 810.5L852 809.5L853 808.5L854 808.5L855 809.5L856 809.5L857 809.5L858 808.5L859 808.5L860 809.5L861 808.5L862 808.5L863 809.5L864 808.5L865 808.5L866 808.5L867 807.5L868 807.5L869 807.5L870 807.5L871 806.5L872 806.5L873 805.5L874 805.5L875 805.5L876 805.5L877 804.5L878 805.5L879 805.5L880 805.5L881 805.5L882 804.5L883 804.5L884 804.5L885 804.5L886 804.5L887 804.5L888 804.5L889 803.5L890 802.5L891 801.5L892 801.5L893 801.5L894 801.5L895 801.5L896 800.5L897 801.5L898 801.5L899 800.5L900 800.5L901 800.5L902 800.5L903 800.5L904 799.5L905 799.5L906 799.5L907 799.5L908 799.5L909 799.5L910 799.5L911 799.5L912 799.5L913 799.5L914 799.5L915 798.5L916 797.5L917 797.5L918 798.5L919 798.5L920 798.5L921 799.5L922 799.5L923 799.5L924 799.5L925 799.5L926 799.5L927 798.5L928 796.5L929 795.5L930 794.5L931 793.5L932 794.5L933 794.5L934 794.5L935 794.5L936 794.5L937 793.5L938 793.5L939 793.5L940 793.5L941 792.5L942 791.5L943 791.5L943.8 790.5L944 791.5L945 792.5L946 793.5L947 793.5L948 793.5L949 793.5L950 794.5L951 794.5L952 793.5L953 792.5L954 793.5L955 792.5L956 792.5L957 793.5L958 793.5L959 792.5L960 793.5L961 792.5L962 792.5L963 793.5L964 792.5L965 792.5L966 792.5L967 792.5L968 792.5L969 792.5L970 792.5L971 791.5L972 792.5L973 791.5L974 791.5L975 790.5L976 790.5L977 790.5L978 790.5L979 787.5L980 785.5L981 785.5L982 785.5L983 785.5L984 784.5L985 785.5L986 786.5L987 786.5L988 786.5L989 786.5L990 786.5L991 786.5L992 787.5L993 787.5L994 787.5L995 786.5L996 787.5L997 787.5L998 787.5L999 786.5L1000 785.5L1001 784.5L1002 783.5L1003 784.5L1004 784.5L1005 783.5L1006 784.5L1007 783.5L1008 783.5L1009 784.5L1010 783.5L1011 784.5L1011.5 785.5L1012 785.5L1013 784.5L1014 783.5L1015 783.5L1016 784.5L1017 785.5L1018 785.5L1018.4 786.5L1019 785.5L1020 785.5L1021 785.5L1022 785.5L1023 785.5L1024 786.5L1025 787.5L1026 787.5L1027 787.5L1028 787.5L1029 788.5L1030 788.5L1031 788.5L1032 789.5L1033 789.5L1034 789.5L1035 790.5L1036 790.5L1037 789.5L1037.5 789.5L1038 788.5L1039 786.5L1040 786.5L1041 786.5L1042 786.5L1042.7 786.5L1043 786.5L1044 787.5L1045 787.5L1046 788.5L1047 788.5L1048 787.5L1049 787.5L1050 787.5L1051 788.5L1052 787.5L1053 787.5L1054 787.5L1055 787.5L1056 788.5L1057 788.5L1058 788.5L1059 788.5L1060 789.5L1061 788.5L1062 788.5L1063 788.5L1064 788.5L1065 788.5L1066 789.5L1067 789.5L1068 788.5L1069 790.5L1070 791.5L1071 790.5L1072 789.5L1073 787.5L1073.4 787.5L1074 788.5L1075 789.5L1075.5 789.5L1076 790.5L1077 789.5L1078 790.5L1079 789.5L1080 788.5L1081 786.5L1081.5 786.5L1082 789.5L1082.6 792.5L1083 792.5L1084 791.5L1085 791.5L1086 791.5L1087 791.5L1088 791.5L1089 792.5L1090 793.5L1091 792.5L1092 791.5L1093 791.5L1093.5 790.5L1094 789.5L1095 790.5L1096 790.5L1097 791.5L1097.6 790.5L1098 792.5L1099 792.5L1100 792.5L1101 794.5L1102 795.5L1103 795.5L1104 794.5L1104.5 793.5L1105 793.5L1106 794.5L1107 794.5L1108 794.5L1109 795.5L1110 794.5L1111 795.5L1112 795.5L1113 794.5L1114 795.5L1115 796.5L1116 797.5L1117 798.5L1118 799.5L1119 800.5L1119.4 801.5L1119.6 794.5L1120 808.5L1120.2 815.5L1121 841.5L1122 862.5L1123 877.5L1124 888.5L1125 892.5L1126 896.5L1127 898.5L1128 900.5L1128.5 902.5L1129 903.5L1130 907.5L1131 919.5L1131.5 924.5L1132 925.5L1133 927.5L1134 929.5L1134.5 930.5L1135 931.5L1136 935.5L1137 938.5L1138 940.5L1139 943.5L1140 946.5L1141 947.5L1142 948.5L1143 949.5L1144 950.5L1145 951.5L1146 952.5L1147 953.5L1148 954.5L1149 955.5L1150 956.5L1151 957.5L1152 957.5L1153 957.5L1154 958.5L1155 959.5L1156 959.5L1157 960.5L1158 960.5L1159 960.5L1160 960.5L1161 961.5L1162 961.5L1163 961.5L1164 961.5L1165 962.5L1166 962.5L1167 962.5L1168 962.5L1169 962.5L1170 962.5L1171 962.5L1172 962.5L1173 962.5L1174 962.5L1175 962.5L1176 962.5L1177 963.5L1178 963.5L1179 963.5L1180 963.5L1181 963.5L1182 963.5L1183 963.5L1184 963.5L1185 963.5L1186 963.5L1187 963.5L1188 963.5L1189 963.5L1190 963.5L1191 963.5L1192 963.5L1193 963.5L1194 963.5L1195 963.5L1196 963.5L1197 963.5L1198 963.5L1199 963.5L1200 963.5L1201 963.5L1202 963.5L1203 963.5L1204 963.5L1205 963.5L1206 963.5L1207 963.5L1208 963.5L1209 963.5L1210 963.5L1211 963.5L1212 963.5L1213 963.5L1214 963.5L1215 963.5L1216 963.5L1217 963.5L1218 963.5L1219 963.5L1220 963.5L1221 963.5L1222 963.5L1223 963.5L1224 963.5L1225 963.5L1226 963.5L1227 963.5L1228 963.5L1229 963.5L1230 963.5L1231 963.5L1232 963.5L1233 963.5L1234 963.5L1235 963.5L1236 963.5L1237 963.5L1238 963.5L1239 963.5L1240 963.5L1241 963.5L1242 963.5L1243 963.5L1244 963.5L1245 963.5L1246 963.5L1247 963.5L1248 963.5L1249 963.5L1250 963.5L1251 963.5L1252 963.5L1253 963.5L1254 963.5L1255 963.5L1256 963.5L1257 963.5L1258 963.5L1259 963.5L1260 963.5L1261 963.5L1262 963.5L1263 963.5L1264 963.5L1265 963.5L1266 963.5L1267 963.5L1268 963.5L1269 963.5L1270 963.5L1271 963.5L1272 963.5L1273 963.5L1274 963.5L1275 963.5L1276 963.5L1277 963.5L1278 963.5L1279 963.5L1280 963.5L1281 963.5L1282 963.5L1283 963.5L1284 963.5L1285 963.5L1286 963.5L1287 963.5L1288 963.5L1289 963.5L1290 963.5L1291 963.5L1292 963.5L1293 963.5L1294 963.5L1295 963.5L1296 963.5L1297 963.5L1298 963.5L1299 963.5L1300 963.5L1301 963.5L1302 963.5L1303 963.5L1304 963.5L1305 963.5L1306 963.5L1307 963.5L1308 963.5L1309 963.5L1310 963.5L1311 963.5L1312 963.5L1313 963.5L1314 963.5L1315 963.5L1316 963.5L1317 963.5L1318 963.5L1319 963.5L1320 963.5L1321 963.5L1322 963.5L1323 963.5L1324 963.5L1325 963.5L1326 963.5L1327 963.5L1328 963.5L1329 963.5L1330 963.5L1331 963.5L1332 963.5L1333 963.5L1334 963.5L1335 963.5L1336 963.5L1337 963.5L1338 963.5L1339 963.5L1340 963.5L1341 963.5L1342 963.5L1343 963.5L1344 963.5L1345 963.5L1346 963.5L1347 963.5L1348 963.5L1349 963.5L1350 963.5L1351 963.5L1352 963.5L1353 963.5L1354 963.5L1355 963.5L1356 963.5L1357 963.5L1358 963.5L1359 963.5L1360 963.5L1361 963.5L1362 963.5L1363 963.5L1364 963.5L1365 963.5L1366 963.5L1367 963.5L1368 963.5L1369 963.5L1370 963.5L1371 964.5L1372 965.5L1373 965.5L1374 965.5L1375 965.5L1376 965.5L1377 965.5L1378 965.5L1379 965.5L1380 965.5L1381 965.5L1382 965.5L1383 965.5L1384 965.5L1385 965.5L1386 965.5L1387 965.5L1388 965.5L1389 965.5L1390 965.5L1391 965.5L1392 965.5L1393 965.5L1394 965.5L1395 965.5L1396 965.5L1397 965.5L1398 965.5L1399 965.5L1400 965.5L1401 965.5L1402 965.5L1403 965.5L1404 965.5L1405 965.5L1406 965.5L1407 965.5L1408 965.5L1409 965.5L1410 965.5L1411 965.5L1412 965.5L1413 965.5L1414 965.5L1415 965.5L1416 965.5L1417 965.5L1418 965.5L1419 965.5L1420 965.5L1421 965.5L1422 965.5L1423 965.5L1424 965.5L1425 965.5L1426 965.5L1427 965.5L1428 965.5L1429 965.5L1430 965.5L1431 965.5L1432 965.5L1433 965.5L1434 965.5L1435 965.5L1436 965.5L1437 965.5L1438 965.5L1439 965.5L1440 965.5L1441 965.5L1442 965.5L1443 965.5L1444 965.5L1445 965.5L1446 965.5L1447 965.5L1448 965.5L1449 965.5L1450 965.5L1451 965.5L1452 965.5L1453 965.5L1454 965.5L1455 965.5L1456 965.5L1457 965.5L1458 965.5L1459 965.5L1460 965.5L1461 965.5L1462 965.5L1463 965.5L1464 965.5L1465 965.5L1466 965.5L1467 965.5L1468 965.5L1469 965.5L1470 965.5L1471 965.5L1472 965.5L1473 965.5L1474 965.5L1475 965.5L1476 965.5L1477 965.5L1478 965.5L1479 965.5L1480 965.5L1481 965.5L1482 965.5L1483 965.5L1484 965.5L1485 965.5L1486 965.5L1487 965.5L1488 965.5L1489 965.5L1490 965.5L1491 965.5L1492 965.5L1493 965.5L1494 965.5L1495 965.5L1496 965.5L1497 965.5L1498 965.5L1499 965.5L1500 965.5L1501 965.5L1502 965.5L1503 965.5L1504 965.5L1505 964.5L1506 964.5L1507 965.5L1508 964.5L1509 964.5L1510 964.5L1511 964.5L1512 964.5L1513 965.5L1514 965.5L1515 964.5L1516 965.5L1517 964.5L1518 965.5L1519 964.5L1520 965.5L1521 964.5L1522 964.5L1523 964.5L1524 963.5L1525 963.5L1526 963.5L1527 963.5L1528 963.5L1529 963.5L1530 963.5L1531 963.5L1532 963.5L1533 963.5L1534 963.5L1535 963.5L1536 963.5L1537 963.5L1538 963.5L1539 963.5L1540 963.5L1541 963.5L1542 963.5L1543 963.5L1544 963.5L1545 963.5L1546 963.5L1547 963.5L1548 963.5L1549 963.5L1550 963.5L1551 963.5L1552 963.5L1553 963.5L1554 963.5L1555 963.5L1556 963.5L1557 963.5L1558 963.5L1559 963.5L1560 963.5L1561 963.5L1562 963.5L1563 963.5L1564 963.5L1565 963.5L1566 963.5L1567 963.5L1568 963.5L1569 963.5L1570 963.5L1571 963.5L1572 963.5L1573 963.5L1574 963.5L1575 963.5L1576 963.5L1577 963.5L1578 963.5L1579 963.5L1580 963.5L1581 963.5L1582 963.5L1583 963.5L1584 963.5L1585 963.5L1586 963.5L1587 963.5L1588 963.5L1589 963.5L1590 963.5L1591 964.5L1592 964.5L1593 964.5L1594 965.5L1595 965.5L1596 965.5L1597 965.5L1598 965.5L1599 965.5L1600 965.5L1601 965.5L1602 965.5L1603 965.5L1604 965.5L1605 965.5L1606 965.5L1607 965.5L1608 965.5L1609 965.5L1610 965.5L1611 964.5L1612 965.5L1613 965.5L1614 964.5L1615 965.5L1616 965.5L1617 964.5L1618 964.5L1619 964.5L1620 964.5L1621 965.5L1622 965.5L1623 965.5L1624 964.5L1625 964.5L1626 964.5L1627 964.5L1628 964.5L1629 964.5L1630 964.5L1631 964.5L1632 964.5L1633 964.5L1634 964.5L1635 964.5L1636 964.5L1637 964.5L1638 964.5L1639 964.5L1640 964.5L1641 963.5L1642 963.5L1643 963.5L1644 963.5L1645 963.5L1646 963.5L1647 963.5L1648 963.5L1649 963.5L1650 963.5L1651 963.5L1652 963.5L1653 963.5L1654 963.5L1655 963.5L1656 963.5L1657 963.5L1658 963.5L1659 962.5L1660 962.5L1661 962.5L1662 962.5L1663 962.5L1664 962.5L1665 962.5L1666 962.5L1667 962.5L1668 962.5L1669 962.5L1670 962.5L1671 962.5L1672 962.5L1673 962.5L1674 962.5L1675 962.5L1676 962.5L1677 962.5L1678 962.5L1679 962.5L1680 962.5L1681 962.5L1682 962.5L1683 962.5L1684 962.5L1685 962.5L1686 962.5L1687 962.5L1688 962.5L1689 962.5L1690 962.5L1691 962.5L1692 962.5L1693 962.5L1694 962.5L1695 962.5L1696 962.5L1697 962.5L1698 962.5L1699 962.5L1700 962.5L1701 962.5L1702 962.5L1703 962.5L1704 962.5L1705 962.5L1706 962.5L1707 962.5L1708 962.5L1709 962.5L1710 962.5L1711 962.5L1712 962.5L1713 962.5L1714 962.5L1715 962.5L1716 962.5L1717 962.5L1718 962.5L1719 962.5L1720 962.5L1721 962.5L1722 962.5L1723 962.5L1724 962.5L1725 962.5L1726 962.5L1727 962.5L1728 962.5L1729 962.5L1730 962.5L1731 962.5L1732 962.5L1733 962.5L1734 962.5L1735 962.5L1736 962.5L1737 962.5L1738 962.5L1739 962.5L1740 962.5L1741 962.5L1742 962.5L1743 962.5L1744 962.5L1745 962.5L1746 962.5L1747 962.5L1748 962.5L1749 962.5L1750 962.5L1751 962.5"/><path stroke="#fbe800" d="M3 265.5L4 265.5L5 265.5L6 265.5L7 265.5L8 265.5L9 265.5L10 265.5L11 265.5L12 265.5L13 265.5L14 265.5L15 265.5L16 265.5L17 265.5L18 265.5L19 265.5L20 265.5L21 265.5L22 265.5L23 265.5L24 265.5L25 265.5L26 265.5L27 265.5L28 265.5L29 265.5L30 265.5L31 265.5L32 265.5L33 265.5L34 265.5L35 265.5L36 265.5L37 265.5L38 265.5L39 265.5L40 265.5L41 265.5L42 265.5L43 265.5L44 265.5L45 265.5L46 265.5L47 265.5L48 265.5L49 265.5L50 265.5L51 265.5L52 265.5L53 265.5L54 265.5L55 264.5L55.6 259.5L56 267.5L56.2 270.5L57 264.5L58 264.5L59 264.5L60 265.5L61 265.5L62 264.5L63 265.5L64 264.5L65 264.5L66 265.5L67 265.5L68 265.5L69 265.5L70 265.5L71 264.5L72 266.5L73 264.5L74 265.5L75 265.5L76 265.5L77 266.5L78 265.5L79 266.5L80 266.5L81 266.5L82 266.5L82.6 268.5L83 261.5L83.2 258.5L84 256.5L85 255.5L86 255.5L87 254.5L88 253.5L89 253.5L90 252.5L91 252.5L92 251.5L93 250.5L94 249.5L95 248.5L96 248.5L97 247.5L98 246.5L99 245.5L100 245.5L101 244.5L102 243.5L103 243.5L104 242.5L105 242.5L106 241.5L107 241.5L108 240.5L109 240.5L110 239.5L111 239.5L112 238.5L113 238.5L114 238.5L115 237.5L116 236.5L117 236.5L118 235.5L119 235.5L120 234.5L121 234.5L122 234.5L123 233.5L124 233.5L125 232.5L126 232.5L127 232.5L128 231.5L129 231.5L130 231.5L131 230.5L132 230.5L133 230.5L134 229.5L135 229.5L136 229.5L137 229.5L138 228.5L139 228.5L140 228.5L141 227.5L142 227.5L143 227.5L144 226.5L145 226.5L146 226.5L147 226.5L148 225.5L149 225.5L150 225.5L151 224.5L152 224.5L153 224.5L154 224.5L155 224.5L156 223.5L157 223.5L158 223.5L159 223.5L160 223.5L161 223.5L162 222.5L163 222.5L164 222.5L165 222.5L166 222.5L167 222.5L168 222.5L169 221.5L170 221.5L171 221.5L172 221.5L173 221.5L174 221.5L175 220.5L176 220.5L177 220.5L178 220.5L179 220.5L180 220.5L181 220.5L182 219.5L183 219.5L184 219.5L185 219.5L186 219.5L187 219.5L188 219.5L189 219.5L190 219.5L191 218.5L192 218.5L193 218.5L194 218.5L195 218.5L196 218.5L197 218.5L198 218.5L199 218.5L200 217.5L201 217.5L202 217.5L203 217.5L204 217.5L205 217.5L206 217.5L207 217.5L208 217.5L209 217.5L210 217.5L211 217.5L212 217.5L212.5 217.5L213 217.5L214 217.5L215 218.5L216 218.5L217 219.5L218 220.5L219 220.5L220 221.5L221 222.5L222 223.5L223 224.5L224 224.5L225 224.5L226 225.5L227 225.5L228 225.5L229 225.5L230 226.5L231 226.5L232 226.5L233 227.5L234 227.5L235 227.5L236 227.5L237 227.5L237.5 227.5L238 228.5L239 228.5L240 228.5L241 228.5L242 228.5L243 228.5L244 229.5L245 229.5L246 229.5L247 229.5L248 229.5L249 229.5L250 230.5L251 230.5L252 230.5L253 230.5L254 230.5L255 230.5L256 231.5L257 231.5L258 231.5L259 231.5L260 232.5L261 232.5L262 232.5L263 232.5L264 232.5L265 233.5L266 233.5L267 234.5L268 234.5L269 234.5L270 234.5L271 234.5L272 234.5L273 235.5L274 235.5L275 235.5L276 235.5L277 235.5L278 235.5L279 235.5L280 235.5L281 235.5L282 235.5L283 235.5L284 235.5L285 235.5L286 235.5L287 235.5L288 235.5L289 235.5L290 235.5L291 235.5L292 235.5L293 235.5L294 235.5L295 235.5L296 235.5L297 235.5L298 235.5L299 235.5L300 234.5L301 235.5L302 234.5L303 234.5L304 234.5L305 233.5L306 234.5L307 233.5L308 234.5L309 234.5L310 234.5L311 234.5L312 234.5L313 233.5L314 233.5L315 233.5L316 234.5L317 233.5L318 233.5L319 234.5L320 234.5L321 234.5L322 235.5L323 235.5L324 235.5L325 236.5L326 236.5L327 236.5L328 236.5L329 236.5L330 235.5L331 235.5L332 236.5L333 236.5L334 235.5L335 236.5L336 237.5L337 237.5L338 236.5L339 236.5L340 235.5L341 235.5L342 236.5L343 236.5L344 235.5L345 235.5L346 235.5L347 235.5L348 236.5L349 236.5L350 235.5L351 235.5L352 235.5L353 236.5L354 236.5L355 236.5L356 236.5L357 236.5L358 236.5L359 236.5L360 236.5L361 236.5L362 237.5L363 236.5L364 237.5L365 236.5L366 237.5L367 236.5L368 235.5L369 234.5L370 234.5L371 234.5L372 233.5L373 233.5L374 232.5L375 233.5L376 233.5L377 232.5L378 233.5L379 233.5L380 232.5L381 233.5L382 233.5L383 234.5L384 235.5L385 234.5L386 234.5L387 235.5L388 236.5L389 236.5L390 235.5L391 235.5L392 235.5L393 235.5L394 236.5L395 236.5L396 236.5L397 237.5L398 236.5L399 237.5L400 236.5L401 235.5L402 236.5L403 236.5L404 237.5L405 236.5L406 236.5L407 236.5L408 236.5L409 236.5L410 236.5L411 236.5L412 236.5L413 236.5L414 237.5L415 236.5L416 236.5L417 236.5L418 236.5L419 235.5L420 236.5L421 236.5L422 235.5L423 236.5L424 235.5L425 236.5L426 237.5L427 237.5L428 236.5L429 236.5L430 235.5L431 236.5L432 237.5L433 237.5L434 237.5L435 237.5L436 236.5L437 236.5L438 236.5L439 236.5L440 237.5L441 237.5L442 237.5L443 237.5L444 236.5L445 237.5L446 237.5L447 237.5L448 236.5L449 237.5L450 237.5L451 237.5L452 236.5L453 236.5L454 236.5L455 236.5L456 237.5L457 236.5L458 236.5L459 237.5L460 238.5L461 238.5L462 237.5L463 238.5L464 238.5L465 237.5L466 238.5L467 237.5L468 237.5L469 237.5L470 238.5L471 237.5L472 237.5L473 238.5L474 237.5L475 238.5L476 237.5L477 237.5L478 238.5L479 237.5L480 237.5L481 236.5L482 236.5L483 237.5L484 236.5L485 236.5L486 236.5L487 236.5L488 235.5L489 236.5L490 236.5L491 236.5L492 236.5L493 237.5L494 237.5L495 237.5L496 236.5L497 236.5L498 237.5L499 236.5L500 237.5L501 237.5L502 236.5L503 236.5L504 236.5L505 236.5L506 236.5L507 236.5L508 235.5L509 236.5L510 236.5L511 236.5L512 236.5L513 237.5L514 237.5L515 236.5L516 236.5L517 236.5L518 237.5L519 237.5L520 236.5L521 236.5L522 236.5L523 237.5L524 238.5L525 237.5L526 238.5L527 238.5L528 238.5L529 238.5L530 235.5L531 235.5L532 233.5L533 234.5L534 235.5L535 235.5L536 236.5L537 236.5L538 236.5L539 236.5L540 236.5L541 233.5L541.5 232.5L542 232.5L543 232.5L544 232.5L545 232.5L546 231.5L547 231.5L548 231.5L549 230.5L550 230.5L550.5 233.5L551 234.5L552 234.5L553 234.5L554 234.5L555 234.5L556 234.5L557 234.5L558 234.5L559 233.5L560 234.5L561 234.5L562 234.5L563 233.5L564 234.5L565 233.5L566 233.5L567 234.5L568 233.5L569 233.5L570 232.5L571 233.5L572 232.5L573 231.5L574 232.5L575 231.5L576 232.5L577 232.5L578 232.5L579 232.5L580 233.5L581 234.5L582 234.5L583 235.5L584 234.5L585 234.5L586 234.5L587 234.5L588 234.5L589 234.5L590 235.5L591 234.5L592 234.5L593 234.5L594 234.5L595 234.5L596 234.5L597 234.5L598 235.5L599 234.5L600 234.5L601 233.5L602 234.5L603 234.5L604 233.5L605 233.5L606 232.5L607 232.5L608 233.5L609 233.5L610 233.5L611 233.5L612 233.5L613 233.5L614 233.5L615 232.5L616 233.5L617 232.5L618 233.5L619 233.5L620 232.5L621 232.5L622 232.5L623 232.5L624 231.5L625 233.5L626 233.5L627 233.5L627.4 233.5L628 234.5L629 234.5L630 233.5L631 233.5L632 232.5L633 231.5L634 232.5L635 230.5L636 230.5L637 231.5L638 233.5L639 233.5L640 234.5L641 234.5L641.6 235.5L642 235.5L643 235.5L644 235.5L645 235.5L646 236.5L647 236.5L648 235.5L649 235.5L650 236.5L651 235.5L652 236.5L653 235.5L654 235.5L655 234.5L656 235.5L657 235.5L658 234.5L659 234.5L660 234.5L661 235.5L662 234.5L663 235.5L664 234.5L665 234.5L666 235.5L667 234.5L668 235.5L669 235.5L670 235.5L671 235.5L672 234.5L673 235.5L674 235.5L675 235.5L676 235.5L676.6 235.5L677 234.5L678 235.5L679 235.5L680 236.5L681 236.5L682 237.5L683 237.5L684 237.5L685 237.5L686 237.5L687 237.5L688 237.5L689 238.5L690 238.5L691 237.5L692 237.5L693 237.5L694 237.5L695 236.5L696 236.5L697 236.5L698 236.5L699 236.5L700 236.5L701 236.5L702 237.5L703 237.5L704 237.5L705 237.5L706 237.5L707 237.5L708 237.5L709 237.5L710 236.5L711 238.5L712 238.5L713 238.5L714 238.5L715 238.5L716 238.5L717 237.5L718 237.5L719 237.5L720 238.5L720.4 237.5L721 237.5L722 237.5L723 238.5L724 239.5L725 238.5L726 238.5L727 238.5L728 238.5L729 238.5L730 239.5L731 239.5L731.3 238.5L732 239.5L733 239.5L734 240.5L735 240.5L736 241.5L736.8 242.5L737 242.5L738 241.5L739 240.5L740 238.5L741 238.5L742 237.5L743 236.5L744 237.5L745 236.5L746 236.5L746.6 236.5L747 236.5L748 237.5L749 237.5L750 237.5L751 237.5L752 237.5L753 237.5L754 238.5L755 240.5L755.4 240.5L756 240.5L757 241.5L758 241.5L759 241.5L760 242.5L760.8 243.5L761 244.5L762 243.5L763 243.5L764 244.5L765 244.5L766 244.5L766.3 245.5L767 242.5L767.4 241.5L768 242.5L769 242.5L770 243.5L771 244.5L772 244.5L772.9 245.5L773 245.5L774 245.5L775 245.5L776 245.5L777 244.5L778 245.5L779 244.5L780 245.5L781 244.5L782 244.5L783 244.5L784 244.5L785 244.5L786 244.5L787 244.5L788 244.5L789 243.5L790 244.5L791 244.5L792 244.5L793 245.5L794 245.5L795 244.5L796 244.5L797 245.5L798 244.5L799 244.5L800 245.5L801 245.5L802 245.5L803 245.5L804 245.5L805 244.5L806 243.5L807 242.5L808 242.5L809 241.5L809.6 241.5L810 240.5L811 240.5L812 241.5L813 242.5L814 242.5L815 243.5L816 243.5L817 243.5L818 242.5L819 243.5L820 242.5L821 243.5L822 242.5L823 242.5L824 242.5L825 242.5L826 242.5L827 242.5L828 242.5L829 242.5L830 242.5L831 243.5L832 242.5L833 242.5L834 242.5L835 243.5L836 243.5L837 243.5L838 243.5L839 243.5L840 244.5L841 243.5L842 243.5L843 243.5L844 244.5L845 244.5L846 244.5L847 244.5L848 243.5L849 244.5L850 244.5L851 243.5L852 244.5L853 243.5L853.3 243.5L854 243.5L855 244.5L856 244.5L857 244.5L858 244.5L859 243.5L860 242.5L861 242.5L862 243.5L863 243.5L864 242.5L865 242.5L866 241.5L867 241.5L868 241.5L869 241.5L870 242.5L871 242.5L872 242.5L873 242.5L874 241.5L875 241.5L876 240.5L877 240.5L878 241.5L879 241.5L880 241.5L881 241.5L882 241.5L883 242.5L884 242.5L885 242.5L886 242.5L887 243.5L888 242.5L888.3 243.5L889 242.5L890 242.5L891 243.5L892 243.5L892.5 243.5L893 244.5L894 244.5L895 243.5L896 244.5L897 243.5L898 243.5L899 243.5L900 243.5L901 243.5L902 242.5L903 243.5L904 242.5L905 242.5L906 242.5L907 242.5L908 242.5L909 241.5L910 241.5L911 241.5L911.7 240.5L912 241.5L913 242.5L914 242.5L915 242.5L916 243.5L917 243.5L917.5 243.5L918 243.5L919 242.5L920 242.5L921 241.5L922 241.5L923 240.5L923.3 239.5L924 241.5L925 241.5L926 240.5L926.7 240.5L927 241.5L928 243.5L929 245.5L930 247.5L931 246.5L932 246.5L933 244.5L933.3 244.5L934 244.5L935 245.5L936 246.5L937 245.5L938 246.5L938.3 246.5L939 245.5L940 244.5L941 244.5L942 245.5L943 245.5L943.8 246.5L944 245.5L945 244.5L946 244.5L946.7 243.5L947 243.5L948 243.5L949 244.5L950 244.5L951 244.5L952 244.5L953 243.5L954 244.5L955 243.5L956 244.5L957 243.5L958 243.5L959 244.5L960 244.5L961 244.5L962 243.5L963 244.5L964 243.5L965 244.5L966 244.5L967 243.5L968 243.5L969 243.5L970 242.5L971 243.5L972 243.5L972.5 243.5L973 243.5L974 243.5L975 244.5L976 244.5L977 244.5L977.9 245.5L978 245.5L979 248.5L980 251.5L981 251.5L982 252.5L983 252.5L983.3 251.5L984 251.5L985 251.5L986 250.5L987 249.5L987.5 249.5L988 249.5L989 249.5L990 247.5L991 248.5L991.7 248.5L992 248.5L993 247.5L994 247.5L995 248.5L995.8 248.5L996 247.5L997 247.5L998 249.5L999 249.5L1000 250.5L1001 251.5L1001.7 251.5L1002 252.5L1003 252.5L1004 251.5L1005 252.5L1006 251.5L1006.7 252.5L1007 252.5L1008 252.5L1009 250.5L1010 249.5L1011 250.5L1011.7 249.5L1012 249.5L1013 249.5L1014 249.5L1015 249.5L1016 248.5L1017 248.5L1018 248.5L1018.3 247.5L1019 247.5L1020 246.5L1021 246.5L1022 245.5L1023 245.5L1024 244.5L1025 244.5L1026 243.5L1027 243.5L1028 243.5L1029 243.5L1030 243.5L1031 242.5L1032 241.5L1033 241.5L1033.3 240.5L1034 239.5L1035 240.5L1036 241.5L1037 240.5L1037.5 241.5L1038 243.5L1039 247.5L1040 247.5L1041 246.5L1042 246.5L1043 246.5L1043.3 246.5L1044 246.5L1045 245.5L1046 245.5L1047 245.5L1048 245.5L1049 245.5L1050 246.5L1051 245.5L1052 244.5L1053 245.5L1054 246.5L1055 246.5L1056 245.5L1057 245.5L1058 246.5L1059 246.5L1060 245.5L1061 245.5L1062 245.5L1063 243.5L1064 243.5L1065 242.5L1066 241.5L1067 241.5L1068 241.5L1069 240.5L1070 239.5L1071 241.5L1072 243.5L1073 245.5L1073.3 245.5L1074 245.5L1075 244.5L1076 243.5L1076.7 243.5L1077 243.5L1078 243.5L1079 244.5L1080 244.5L1080.8 243.5L1081 245.5L1081.7 249.5L1082 247.5L1083 241.5L1083.3 240.5L1084 240.5L1085 240.5L1086 242.5L1086.7 242.5L1087 242.5L1088 240.5L1088.3 239.5L1089 239.5L1090 240.5L1090.8 240.5L1091 241.5L1092 243.5L1093 246.5L1093.3 246.5L1094 245.5L1095 245.5L1096 244.5L1097 244.5L1098 244.5L1099 243.5L1100 242.5L1101 241.5L1102 241.5L1103 239.5L1103.3 239.5L1104 238.5L1105 239.5L1106 240.5L1107 240.5L1108 240.5L1109 239.5L1110 240.5L1111 239.5L1112 240.5L1113 240.5L1114 241.5L1114.2 240.5L1115 239.5L1116 237.5L1117 235.5L1118 234.5L1119 242.5L1119.2 244.5L1119.5 211.5L1120 189.5L1120.4 172.5L1121 157.5L1121.5 145.5L1122 137.5L1122.6 127.5L1123 122.5L1123.7 113.5L1124 114.5L1125 115.5L1125.5 116.5L1126 118.5L1126.3 119.5L1127 120.5L1127.8 121.5L1128 122.5L1129 124.5L1129.6 130.5L1130 126.5L1130.2 124.5L1131 119.5L1131.8 119.5L1132 112.5L1132.1 109.5L1132.6 119.5L1133 119.5L1134 120.5L1135 121.5L1135.5 121.5L1136 122.5L1136.5 123.5L1137 126.5L1137.3 127.5L1138 129.5L1139 132.5L1139.7 135.5L1140 136.5L1141 141.5L1142 146.5L1143 151.5L1144 155.5L1145 160.5L1146 164.5L1147 169.5L1148 173.5L1149 178.5L1150 182.5L1151 186.5L1151.7 189.5L1152 191.5L1153 195.5L1154 200.5L1155 205.5L1156 210.5L1157 215.5L1158 220.5L1159 223.5L1160 225.5L1161 228.5L1162 231.5L1163 234.5L1164 236.5L1165 238.5L1166 240.5L1166.7 241.5L1167 242.5L1168 243.5L1169 244.5L1170 245.5L1171 246.5L1172 247.5L1173 248.5L1174 248.5L1175 249.5L1176 249.5L1177 250.5L1178 250.5L1179 251.5L1180 251.5L1181 252.5L1182 252.5L1183 252.5L1184 252.5L1185 252.5L1186 252.5L1187 253.5L1188 253.5L1189 253.5L1190 254.5L1191 254.5L1192 254.5L1193 254.5L1194 254.5L1195 254.5L1196 254.5L1197 255.5L1198 255.5L1199 255.5L1200 255.5L1201 255.5L1202 255.5L1203 256.5L1204 256.5L1205 256.5L1206 256.5L1207 256.5L1208 256.5L1209 256.5L1210 256.5L1211 257.5L1212 257.5L1213 257.5L1214 257.5L1215 257.5L1216 257.5L1217 257.5L1218 257.5L1219 257.5L1220 257.5L1221 257.5L1222 257.5L1223 257.5L1224 257.5L1225 257.5L1226 257.5L1227 257.5L1228 257.5L1229 257.5L1230 257.5L1231 257.5L1232 257.5L1233 257.5L1234 257.5L1235 257.5L1236 257.5L1237 257.5L1238 258.5L1239 257.5L1240 257.5L1241 257.5L1242 257.5L1243 257.5L1244 258.5L1245 258.5L1246 258.5L1247 258.5L1248 258.5L1249 258.5L1250 258.5L1251 258.5L1252 258.5L1253 258.5L1254 258.5L1255 258.5L1256 258.5L1257 258.5L1258 258.5L1259 259.5L1260 259.5L1261 259.5L1262 259.5L1263 258.5L1264 258.5L1265 258.5L1266 258.5L1267 259.5L1268 258.5L1269 259.5L1270 258.5L1271 258.5L1272 259.5L1273 258.5L1274 259.5L1275 259.5L1276 259.5L1277 258.5L1278 259.5L1279 259.5L1280 258.5L1281 259.5L1282 259.5L1283 258.5L1284 259.5L1285 259.5L1286 258.5L1287 258.5L1288 259.5L1289 259.5L1290 259.5L1291 259.5L1292 259.5L1293 259.5L1294 259.5L1295 259.5L1296 259.5L1297 259.5L1298 259.5L1299 259.5L1300 259.5L1301 259.5L1302 259.5L1303 259.5L1304 259.5L1305 259.5L1306 260.5L1307 260.5L1308 260.5L1309 260.5L1310 259.5L1311 259.5L1312 259.5L1313 259.5L1314 259.5L1315 259.5L1316 260.5L1317 260.5L1318 259.5L1319 259.5L1320 260.5L1321 260.5L1322 260.5L1323 260.5L1324 260.5L1325 259.5L1326 259.5L1327 260.5L1328 259.5L1329 260.5L1330 259.5L1331 260.5L1332 260.5L1333 260.5L1334 260.5L1335 260.5L1336 260.5L1337 260.5L1338 260.5L1339 260.5L1340 260.5L1341 260.5L1342 260.5L1343 260.5L1344 260.5L1345 260.5L1346 260.5L1347 260.5L1348 260.5L1349 260.5L1350 260.5L1351 260.5L1352 260.5L1353 260.5L1354 260.5L1355 260.5L1356 260.5L1357 260.5L1358 260.5L1359 260.5L1360 260.5L1361 260.5L1362 260.5L1363 260.5L1364 260.5L1365 260.5L1366 260.5L1367 260.5L1368 260.5L1369 260.5L1370 260.5L1371 257.5L1371.5 255.5L1372 255.5L1373 255.5L1374 255.5L1375 255.5L1376 256.5L1377 256.5L1378 256.5L1379 256.5L1380 256.5L1381 255.5L1382 255.5L1383 255.5L1384 255.5L1385 255.5L1386 256.5L1387 256.5L1388 256.5L1389 256.5L1390 256.5L1391 256.5L1392 256.5L1393 256.5L1394 256.5L1395 256.5L1396 256.5L1397 256.5L1398 256.5L1399 256.5L1400 256.5L1401 256.5L1402 256.5L1403 256.5L1404 256.5L1405 256.5L1406 256.5L1407 256.5L1408 256.5L1409 256.5L1410 257.5L1411 257.5L1412 257.5L1413 257.5L1414 257.5L1415 257.5L1416 257.5L1417 257.5L1418 257.5L1419 257.5L1420 257.5L1421 257.5L1422 257.5L1423 257.5L1424 257.5L1425 257.5L1426 257.5L1427 257.5L1428 257.5L1429 257.5L1430 257.5L1431 257.5L1432 257.5L1433 257.5L1434 257.5L1435 257.5L1436 257.5L1437 257.5L1438 257.5L1439 257.5L1440 257.5L1441 257.5L1442 257.5L1443 257.5L1444 257.5L1445 257.5L1446 257.5L1447 257.5L1448 257.5L1449 257.5L1450 257.5L1451 257.5L1452 257.5L1453 257.5L1454 257.5L1455 257.5L1456 257.5L1457 257.5L1458 257.5L1459 257.5L1460 257.5L1461 257.5L1462 257.5L1463 257.5L1464 257.5L1465 257.5L1466 257.5L1467 257.5L1468 257.5L1469 257.5L1470 257.5L1471 257.5L1472 257.5L1473 257.5L1474 257.5L1475 257.5L1476 257.5L1477 257.5L1478 257.5L1479 257.5L1480 257.5L1481 257.5L1482 257.5L1483 257.5L1484 258.5L1485 257.5L1486 257.5L1487 257.5L1488 257.5L1489 257.5L1490 258.5L1491 257.5L1492 258.5L1493 258.5L1494 258.5L1495 258.5L1496 258.5L1497 258.5L1498 258.5L1499 257.5L1500 257.5L1501 258.5L1502 258.5L1503 258.5L1504 258.5L1505 258.5L1506 258.5L1507 258.5L1508 258.5L1509 258.5L1510 258.5L1511 258.5L1512 258.5L1513 258.5L1514 258.5L1515 258.5L1516 258.5L1517 258.5L1518 258.5L1519 259.5L1520 260.5L1521 260.5L1522 260.5L1523 260.5L1524 259.5L1525 260.5L1526 260.5L1527 260.5L1528 259.5L1529 260.5L1530 260.5L1531 260.5L1532 260.5L1533 260.5L1534 260.5L1535 260.5L1536 260.5L1537 260.5L1538 260.5L1539 260.5L1540 260.5L1541 259.5L1542 259.5L1543 260.5L1544 260.5L1545 260.5L1546 260.5L1547 260.5L1548 260.5L1549 260.5L1550 260.5L1551 260.5L1552 260.5L1553 260.5L1554 260.5L1555 260.5L1556 260.5L1557 260.5L1558 260.5L1559 260.5L1560 259.5L1561 259.5L1562 260.5L1563 260.5L1564 260.5L1565 260.5L1566 260.5L1567 260.5L1568 260.5L1569 260.5L1570 260.5L1571 260.5L1572 260.5L1573 259.5L1574 260.5L1575 260.5L1576 259.5L1577 259.5L1578 259.5L1579 260.5L1580 260.5L1581 260.5L1582 260.5L1583 260.5L1584 260.5L1585 260.5L1586 260.5L1587 260.5L1588 260.5L1589 260.5L1590 259.5L1591 259.5L1592 260.5L1593 258.5L1594 257.5L1595 256.5L1596 255.5L1597 255.5L1598 254.5L1599 254.5L1600 253.5L1601 253.5L1602 252.5L1603 252.5L1604 252.5L1605 252.5L1606 252.5L1607 252.5L1608 252.5L1609 252.5L1610 252.5L1611 252.5L1612 252.5L1613 252.5L1614 252.5L1615 252.5L1616 252.5L1617 252.5L1618 252.5L1619 252.5L1620 252.5L1621 252.5L1622 252.5L1623 252.5L1624 252.5L1625 252.5L1626 252.5L1627 253.5L1628 253.5L1629 253.5L1630 253.5L1631 253.5L1632 253.5L1633 253.5L1634 253.5L1635 253.5L1636 253.5L1637 253.5L1638 253.5L1639 253.5L1640 253.5L1641 253.5L1642 254.5L1643 254.5L1644 254.5L1645 254.5L1646 254.5L1647 254.5L1648 255.5L1649 255.5L1650 255.5L1651 255.5L1652 255.5L1653 255.5L1654 255.5L1655 255.5L1656 256.5L1657 256.5L1658 256.5L1659 256.5L1660 256.5L1661 256.5L1662 257.5L1663 256.5L1664 257.5L1665 257.5L1666 257.5L1667 257.5L1668 257.5L1669 257.5L1670 257.5L1671 257.5L1672 257.5L1673 258.5L1674 258.5L1675 258.5L1676 258.5L1677 258.5L1678 258.5L1679 258.5L1680 258.5L1681 258.5L1682 258.5L1683 258.5L1684 258.5L1685 258.5L1686 259.5L1687 258.5L1688 258.5L1689 259.5L1690 259.5L1691 259.5L1692 259.5L1693 259.5L1694 259.5L1695 259.5L1696 259.5L1697 259.5L1698 259.5L1699 259.5L1700 259.5L1701 259.5L1702 259.5L1703 259.5L1704 259.5L1705 259.5L1706 259.5L1707 259.5L1708 259.5L1709 259.5L1710 259.5L1711 259.5L1712 259.5L1713 259.5L1714 259.5L1715 259.5L1716 259.5L1717 259.5L1718 259.5L1719 259.5L1720 259.5L1721 259.5L1722 259.5L1723 259.5L1724 259.5L1725 259.5L1726 259.5L1727 259.5L1728 259.5L1729 259.5L1730 259.5L1731 259.5L1732 259.5L1733 259.5L1734 259.5L1735 259.5L1736 259.5L1737 259.5L1738 259.5L1739 259.5L1740 259.5L1741 259.5L1742 259.5L1743 259.5L1744 259.5L1745 259.5L1746 259.5L1747 259.5L1748 259.5L1749 259.5L1750 259.5L1751 259.5"/></g><line x1="55.5" y1="95" x2="55.5" y2="993" stroke="#c8c8c8" stroke-width="1" stroke-dasharray="5 5" shape-rendering="crispEdges"/></svg><svg class="a" style="left:0;top:150px" width="100" height="50" viewBox="0 150 100 50"><path d="M10 162H77.5L83 174.5L77.5 187H10Q7 187 7 184V165Q7 162 10 162Z" fill="#221f0a" stroke="#f3e21a" stroke-width="2"/><line x1="33" y1="162" x2="33" y2="187" stroke="#f3e21a" stroke-width="2"/></svg><div class="a" style="left:11px;top:166px;font-size:13px;line-height:16px;color:#f3e21a;letter-spacing:-0.9px">C 1</div><div class="a" style="left:45px;top:166px;font-size:13px;line-height:16px;color:#f3e21a">20 V</div><div class="a" style="left:102px;top:162px;font-size:19px;line-height:22px;color:#f3e21a;letter-spacing:0.35px">U_loop,coil</div><svg class="a" style="left:0;top:390px" width="100" height="40" viewBox="0 390 100 40"><path d="M10 396H77.5L83 408L77.5 420H10Q7 420 7 417V399Q7 396 10 396Z" fill="#172108" stroke="#8fd13a" stroke-width="2"/><line x1="33" y1="396" x2="33" y2="420" stroke="#8fd13a" stroke-width="2"/></svg><div class="a" style="left:11px;top:400px;font-size:13px;line-height:16px;color:#8fd13a;letter-spacing:-0.9px">C 4</div><div class="a" style="left:35px;top:400px;font-size:13px;line-height:16px;color:#8fd13a;letter-spacing:-0.3px">200 mV</div><div class="a" style="left:101px;top:396px;font-size:19px;line-height:22px;color:#8fd13a;letter-spacing:0.3px">U_Photod</div><svg class="a" style="left:0;top:715px" width="60" height="40" viewBox="0 715 60 40"><path d="M10 722.5H29.5L41.7 735L29.5 747.5H10Q7 747.5 7 744.5V725.5Q7 722.5 10 722.5Z" fill="#221408" stroke="#f7941d" stroke-width="1.3"/><line x1="41.7" y1="735" x2="63" y2="735" stroke="#f7941d" stroke-width="1.2"/></svg><div class="a" style="left:12px;top:727px;font-size:13px;line-height:16px;color:#f7941d;letter-spacing:0.3px">M 1</div><div class="a" style="left:54px;top:723px;font-size:19px;line-height:22px;color:#f7941d">B_t</div><svg class="a" style="left:0;top:945px" width="60" height="40" viewBox="0 945 60 40"><path d="M9.5 952H31L42.3 965L31 978H9.5Q6 978 6 974.5V955.5Q6 952 9.5 952Z" fill="#74309a"/></svg><div class="a" style="left:13px;top:957px;font-size:13px;line-height:16px;color:#fff;letter-spacing:0.3px">M 2</div><div class="a" style="left:54px;top:953px;font-size:19px;line-height:22px;color:#74309a">I_p</div><svg class="a" style="left:1705px;top:60px" width="45" height="45" viewBox="1705 60 45 45"><path d="M1710.5 65H1742Q1744.2 65 1744.2 67.2V98.6Z" fill="#565656"/><circle cx="1737.2" cy="71.4" r="4.2" fill="none" stroke="#a8a8a8" stroke-width="1.5"/><line x1="1734.2" y1="74.4" x2="1728.3" y2="80.3" stroke="#a8a8a8" stroke-width="2.2" stroke-linecap="round"/></svg><div class="a" style="left:1769px;top:29px;width:151px;height:967px;border-left:1px solid #5c5c5c;border-top:1px solid #6f655b;border-bottom:1px solid #6f655b;background:#2e2e2e"></div><div class="a" style="left:1754px;top:32px;width:15px;height:961px;background:#2e2e2e"></div><svg class="a" style="left:1757.5px;top:498.5px" width="10" height="30"><circle cx="4.5" cy="5" r="2" fill="#b0b0b0"/><circle cx="4.5" cy="14" r="2" fill="#b0b0b0"/><circle cx="4.5" cy="23" r="2" fill="#b0b0b0"/></svg><div class="a" style="left:1770px;top:29px;width:150px;text-align:center;font-size:14.5px;font-weight:bold;color:#e9e9e9;line-height:20px;letter-spacing:0.4px">Add New...</div><div class="rbtn" style="left:1778px;top:54px;line-height:35px">Cursors</div><div class="rbtn" style="left:1850px;top:54px;line-height:35px">Callout</div><div class="rbtn" style="left:1778px;top:100px;line-height:35px">Measure</div><div class="rbtn" style="left:1850px;top:100px;line-height:35px">Search</div><div class="rbtn" style="left:1850px;top:146px;line-height:35px">Plot</div><div class="rbtn" style="left:1778px;top:146px;line-height:16px;padding-top:1px">Results<br>Table</div><div class="a" style="left:1773px;top:189px;width:144px;height:1px;background:#6a625a"></div><div class="a" style="left:1773px;top:241px;width:144px;height:1px;background:#6a625a"></div><div class="rbtn" style="left:1778px;top:196px"></div><svg class="a" style="left:1795px;top:200px" width="30" height="30" viewBox="1795 200 30 30"><rect x="1797.5" y="202.5" width="22" height="18" fill="none" stroke="#bdbdbd" stroke-width="1.6" stroke-dasharray="3 2.5"/><circle cx="1810" cy="211" r="4.5" fill="#2f2f2f" stroke="#d0d0d0" stroke-width="1.6"/><line x1="1806.8" y1="214.3" x2="1802.5" y2="218.6" stroke="#d0d0d0" stroke-width="2"/><path d="M1815 217L1823 222L1819.5 223L1821.5 227L1820 227.5L1818 223.7L1815.5 226Z" fill="#d0d0d0" stroke="#2a2a2a" stroke-width="0.8"/></svg><div class="rbtn" style="left:1850px;top:196px;line-height:35px">More...</div><div class="bdg" style="left:3px"><div class="bh" style="background:#4b4a22;color:#f3e21a">Ch 1</div><div class="bs" style="background:#acacac"></div><div class="bb" style="background:#c9c9c9;color:#111"><div class="bl" style="top:-0.5px">5 V/div</div><div class="bl" style="top:18.7px">1 M&Omega;</div><div class="bl" style="top:37.9px">200 kHz</div><div class="bw">B<sub>w</sub></div></div></div><div class="bdg" style="left:98px"><div class="bh" style="background:#237e80;color:#161616">Ch 2</div><div class="bs" style="background:#6c6c6c"></div><div class="bb" style="background:#808080;color:#1c1c1c"><div class="bl" style="top:-0.5px">250 mV/div</div><div class="bl" style="top:18.7px">1 M&Omega;</div><div class="bl" style="top:37.9px">200 kHz</div><div class="bw">B<sub>w</sub></div></div></div><div class="bdg" style="left:193px"><div class="bh" style="background:#8b3946;color:#c9a0a6">Ch 3</div><div class="bs" style="background:#6c6c6c"></div><div class="bb" style="background:#7f7f7f;color:#1c1c1c"><div class="bl" style="top:-0.5px">450 mV/div</div><div class="bl" style="top:18.7px">1 M&Omega;</div><div class="bl" style="top:37.9px">200 kHz</div><div class="bw">B<sub>w</sub></div></div></div><div class="bdg" style="left:288px"><div class="bh" style="background:#34461f;color:#8fd13a">Ch 4</div><div class="bs" style="background:#acacac"></div><div class="bb" style="background:#c9c9c9;color:#111"><div class="bl" style="top:-0.5px">200 mV/div</div><div class="bl" style="top:18.7px">1 M&Omega;</div><div class="bl" style="top:37.9px">200 kHz</div><div class="bw">B<sub>w</sub></div></div></div><div class="bdg" style="left:383px"><div class="bh" style="background:#4a3320;color:#f7941d">Math 1</div><div class="bs" style="background:#acacac"></div><div class="bb" style="background:#c9c9c9;color:#111"><div class="bl" style="top:-0.5px">73.9 mT/div</div><div class="bl" style="top:18.7px">Intg(Ch2)&hellip;</div></div></div><div class="bdg" style="left:478px"><div class="bh" style="background:#6d2b8b;color:#ffffff">Math 2</div><div class="bs" style="background:#acacac"></div><div class="bb" style="background:#c9c9c9;color:#111"><div class="bl" style="top:-0.5px">835.27 A/div</div><div class="bl" style="top:18.7px">-Intg(Ch3&hellip;</div></div></div><div class="vbtn" style="left:1023px"><div class="vbar" style="background:#f7941d"></div><div style="position:absolute;left:0;top:32px;width:38px;font-size:19px;line-height:22px">5</div></div><div class="vbtn" style="left:1068px"><div class="vbar" style="background:#2b2bd6"></div><div style="position:absolute;left:0;top:32px;width:38px;font-size:19px;line-height:22px">6</div></div><div class="vbtn" style="left:1129px"><div class="vbar" style="background:#b52020"></div><div style="position:absolute;left:0;top:19.5px;width:38px;font-size:15px;line-height:16.5px">Add<br>New<br>Math</div></div><div class="vbtn" style="left:1174px"><div class="vbar" style="background:#c8c8d8"></div><div style="position:absolute;left:0;top:19.5px;width:38px;font-size:15px;line-height:16.5px">Add<br>New<br>Ref</div></div><div class="vbtn" style="left:1219px"><div class="vbar" style="background:#c455ee"></div><div style="position:absolute;left:0;top:19.5px;width:38px;font-size:15px;line-height:16.5px">Add<br>New<br>Bus</div></div><div class="a" style="left:1118px;top:1000px;width:1px;height:78px;background:#5e574f"></div><div class="a" style="left:1269px;top:1000px;width:1px;height:78px;background:#5e574f"></div><div class="a" style="left:1811px;top:1000px;width:1px;height:78px;background:#5e574f"></div><div class="ibox" style="left:1281px;width:198px"><div class="ih">Horizontal</div><div class="is"></div><div class="it" style="left:4px;top:20px">4 ms/div</div><div class="it" style="left:109px;top:20px">40 ms</div><div class="it" style="left:4px;top:39px">SR: 1 MS/s</div><div class="it" style="left:110px;top:39px">1 &micro;s/pt</div><div class="it" style="left:4px;top:57px">RL: 40 kpts</div><div class="it" style="left:124px;top:57px">3%</div><svg style="position:absolute;left:109px;top:59px" width="12" height="14" viewBox="0 0 12 14"><path d="M1.5 1H9.5V9.5H7L5.5 12L4 9.5H1.5Z" fill="#000" stroke="#f7941d" stroke-width="1.6"/><path d="M3.5 3.2H7.5M5.5 3.2V8" stroke="#f7941d" stroke-width="1.5"/></svg></div><div class="ibox" style="left:1486px;width:158px"><div class="ih">Trigger</div><div class="is"></div><div style="position:absolute;left:4px;top:21px;width:30px;height:16px;border-radius:5px;background:#2222c0;border:1px solid #101050;color:#fff;font-size:15px;line-height:14px;text-align:center">6</div><svg style="position:absolute;left:44px;top:21px" width="18" height="14"><path d="M0 12.5H4L13 2.5H17" fill="none" stroke="#3a3a8a" stroke-width="1.2"/></svg><div class="it" style="left:70px;top:20px">3 V</div></div><div class="ibox" style="left:1651px;width:148px"><div class="ih">Acquisition</div><div class="is"></div><div class="it" style="left:5px;top:20px">Manual,</div><div class="it" style="left:85px;top:20px">Analyze</div><div class="it" style="left:5px;top:39px">High Res: 16 bits</div><div class="it" style="left:5px;top:57px">Single: 0 /1</div></div><div class="a" style="left:1822px;top:999px;width:90px;height:36px;border-radius:6px;background:#ff1c24;border:1px solid #5a3a3a;color:#fff;font-weight:bold;font-size:14px;line-height:33px;text-align:center">Preview</div><div class="a" style="left:1822px;top:1041px;width:90px;height:37px;border-radius:5px;background:#c9c9c9;color:#111;font-size:14.5px;line-height:17px;text-align:center;padding-top:1px">24 Apr 2025<br>4:58:57 PM</div></body></html>
